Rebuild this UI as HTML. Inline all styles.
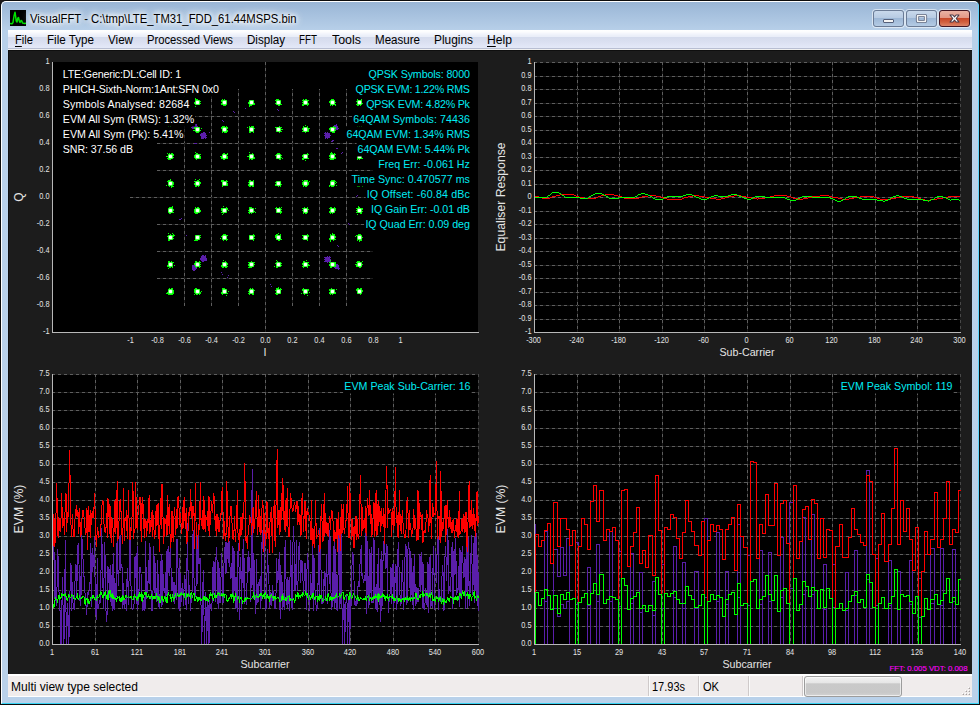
<!DOCTYPE html>
<html><head><meta charset="utf-8"><title>VisualFFT</title>
<style>
html,body{margin:0;padding:0;}
body{width:980px;height:705px;overflow:hidden;background:#1b1717;font-family:"Liberation Sans", sans-serif;position:relative;}
#win{position:absolute;left:0;top:0;width:978px;height:703px;border:1px solid #0c0c0c;border-radius:6px 6px 1px 1px;
 background:linear-gradient(#98b4d4 0px,#a3bedc 10px,#b8d0e9 30px,#b9d1ea 100%);overflow:hidden;}
#win:before{content:"";position:absolute;left:0;top:0;right:0;bottom:0;border:1px solid #fff;border-right-color:#5ed4fc;border-bottom-color:#38d4f4;border-radius:5px 5px 0 0;}
#icon{position:absolute;left:9px;top:9px;width:16px;height:16px;background:#000;}
#title{position:absolute;left:29px;top:9px;height:18px;line-height:18px;font-size:12.5px;color:#000;white-space:nowrap;
 text-shadow:0 0 6px #fff,0 0 6px #fff,0 0 10px #fff,0 0 10px #fff;transform-origin:0 50%;}
.cb{position:absolute;top:9px;height:15px;border:1px solid #6b7b95;border-radius:3px;box-shadow:0 0 0 1px rgba(255,255,255,.55);
 background:linear-gradient(#c9d9ec 0%,#b6cae2 48%,#9db7d6 50%,#b4cbe4 100%);}
#bclose{border-color:#431622;background:linear-gradient(#eab2a4 0%,#e39684 48%,#c8492b 50%,#d2613f 75%,#dc8468 100%);}
#menubar{position:absolute;left:7px;top:29px;width:964px;height:20px;
 background:linear-gradient(to bottom,#ffffff 0px,#fcfdfe 1.5px,#f9fafd 2.5px,#f4f6fc 3.5px,#f0f3fb 4.5px,#ecf0f9 5.5px,#e9edf8 6.99px,#d4dbed 7px,#d7ddee 9px,#dce1f2 13px,#e1e6f6 16px,#e4e9f7 17.99px,#b8bed2 18px,#b8bed2 18.99px,#f0f0f0 19px,#f0f0f0 20px);}
.mi{position:absolute;top:0;height:20px;line-height:21px;font-size:12px;color:#000;white-space:nowrap;transform-origin:0 50%;}
.mi u{text-decoration:underline;text-underline-offset:1.5px;}
#content{position:absolute;left:7px;top:49px;width:964px;height:624px;background:#1c1c1c;box-shadow:inset 1px 1px 0 #0f0f0f;}
#status{position:absolute;left:7px;top:673px;width:964px;height:23px;background:#f0ecec;border-top:2px solid #fff;border-bottom:1px solid #fff;box-sizing:border-box;}
.st{position:absolute;top:1px;height:19px;line-height:21px;font-size:12px;color:#000;white-space:nowrap;transform-origin:0 50%;}
.sep{position:absolute;top:0;width:1px;height:20px;background:#cfcaca;box-shadow:1px 0 0 #fbfbfb;}
#prog{position:absolute;left:796px;top:0px;width:96px;height:19px;border:1px solid #9c9c9c;border-radius:3px;
 background:linear-gradient(#f2f2f2 0%,#e6e6e6 30%,#c9c9c9 36%,#c8c8c8 80%,#d2d2d2 100%);box-shadow:inset 0 0 0 1px rgba(255,255,255,.6);}
svg text{font-family:"Liberation Sans", sans-serif;}
#plots{position:absolute;left:0;top:0;}
</style></head>
<body>
<div id="win">
 <div id="icon"><svg width="16" height="16" viewBox="0 0 16 16"><polyline points="0,13.5 2,13.8 3,12.5 4,6 5,2.2 5.6,6 6.2,11 7,12 7.8,8 8.5,7.5 9.3,11 10,12.5 11,10.5 11.8,11 12.5,13 14,13.4 16,13.2" fill="none" stroke="#00e000" stroke-width="1.5" stroke-linejoin="round"/></svg></div>
 <div id="title" style="transform:scaleX(0.9026);">VisualFFT - C:\tmp\LTE_TM31_FDD_61.44MSPS.bin</div>
 <div class="cb" id="bmin" style="left:872px;width:29px;"><svg width="29" height="15"><rect x="9.5" y="8.5" width="10" height="3" rx="0.5" fill="#f4f4f4" stroke="#55607a" stroke-width="1"/></svg></div>
 <div class="cb" id="bmax" style="left:905px;width:29px;"><svg width="29" height="15"><rect x="10.5" y="4.5" width="8" height="6" rx="0.5" fill="none" stroke="#55607a" stroke-width="3.2"/><rect x="10.5" y="4.5" width="8" height="6" rx="0.5" fill="none" stroke="#f4f4f4" stroke-width="1.6"/></svg></div>
 <div class="cb" id="bclose" style="left:938px;width:29px;"><svg width="29" height="15"><polygon points="10,4 12.9,4 14.5,5.9 16.1,4 19,4 16.2,7.5 19,11 16.1,11 14.5,9.1 12.9,11 10,11 12.8,7.5" fill="#fbfbfb" stroke="#4b3a48" stroke-width="1.1" stroke-linejoin="round"/></svg></div>
 <div id="menubar"><span class="mi" id="m0" style="transform:scaleX(0.9298);left:7px"><u>F</u>ile</span><span class="mi" id="m1" style="transform:scaleX(0.9697);left:39px">File Type</span><span class="mi" id="m2" style="transform:scaleX(0.9691);left:100px">View</span><span class="mi" id="m3" style="transform:scaleX(0.9365);left:139px">Processed Views</span><span class="mi" id="m4" style="transform:scaleX(0.9655);left:239px">Display</span><span class="mi" id="m5" style="transform:scaleX(0.8182);left:291px">FFT</span><span class="mi" id="m6" style="transform:scaleX(1.0351);left:324px">Tools</span><span class="mi" id="m7" style="transform:scaleX(0.9639);left:367px">Measure</span><span class="mi" id="m8" style="transform:scaleX(0.9909);left:426px">Plugins</span><span class="mi" id="m9" style="transform:scaleX(1.0127);left:479px"><u>H</u>elp</span></div>
 <div id="content"></div>
 <div id="status">
  <span class="st" id="s0" style="transform:scaleX(1.0021);left:3px">Multi view type selected</span>
  <div class="sep" style="left:640px"></div>
  <span class="st" id="s1" style="transform:scaleX(0.9159);left:644px">17.93s</span>
  <div class="sep" style="left:690px"></div>
  <span class="st" id="s2" style="transform:scaleX(0.9225);left:695px">OK</span>
  <div class="sep" style="left:740px"></div>
  <div class="sep" style="left:794px"></div>
  <div id="prog"></div>
  <svg style="position:absolute;left:952px;top:8px" width="12" height="12" shape-rendering="crispEdges"><rect x="8" y="3" width="1" height="1" fill="#ffffff"/><rect x="9" y="4" width="1" height="1" fill="#a5a0a0"/><rect x="8" y="4" width="1" height="1" fill="#d8d4d4"/><rect x="9" y="3" width="1" height="1" fill="#d8d4d4"/><rect x="5" y="6" width="1" height="1" fill="#ffffff"/><rect x="6" y="7" width="1" height="1" fill="#a5a0a0"/><rect x="5" y="7" width="1" height="1" fill="#d8d4d4"/><rect x="6" y="6" width="1" height="1" fill="#d8d4d4"/><rect x="8" y="6" width="1" height="1" fill="#ffffff"/><rect x="9" y="7" width="1" height="1" fill="#a5a0a0"/><rect x="8" y="7" width="1" height="1" fill="#d8d4d4"/><rect x="9" y="6" width="1" height="1" fill="#d8d4d4"/><rect x="2" y="9" width="1" height="1" fill="#ffffff"/><rect x="3" y="10" width="1" height="1" fill="#a5a0a0"/><rect x="2" y="10" width="1" height="1" fill="#d8d4d4"/><rect x="3" y="9" width="1" height="1" fill="#d8d4d4"/><rect x="5" y="9" width="1" height="1" fill="#ffffff"/><rect x="6" y="10" width="1" height="1" fill="#a5a0a0"/><rect x="5" y="10" width="1" height="1" fill="#d8d4d4"/><rect x="6" y="9" width="1" height="1" fill="#d8d4d4"/><rect x="8" y="9" width="1" height="1" fill="#ffffff"/><rect x="9" y="10" width="1" height="1" fill="#a5a0a0"/><rect x="8" y="10" width="1" height="1" fill="#d8d4d4"/><rect x="9" y="9" width="1" height="1" fill="#d8d4d4"/></svg>
 </div>
</div>
<svg id="plots" width="980" height="705" viewBox="0 0 980 705">
<rect x="52" y="62" width="426" height="271" fill="#000" />
<g shape-rendering="crispEdges">
<rect x="157" y="278" width="216" height="1" fill="#1c1c1c"/>
<line x1="157" y1="278.5" x2="373" y2="278.5" stroke="#5e5e5e" stroke-dasharray="3 3" />
<rect x="184" y="89" width="1" height="217" fill="#1c1c1c"/>
<line x1="184.5" y1="89" x2="184.5" y2="306" stroke="#5e5e5e" stroke-dasharray="3 3" stroke-dashoffset="2" />
<rect x="157" y="251" width="216" height="1" fill="#1c1c1c"/>
<line x1="157" y1="251.5" x2="373" y2="251.5" stroke="#5e5e5e" stroke-dasharray="3 3" />
<rect x="211" y="89" width="1" height="217" fill="#1c1c1c"/>
<line x1="211.5" y1="89" x2="211.5" y2="306" stroke="#5e5e5e" stroke-dasharray="3 3" stroke-dashoffset="2" />
<rect x="157" y="224" width="216" height="1" fill="#1c1c1c"/>
<line x1="157" y1="224.5" x2="373" y2="224.5" stroke="#5e5e5e" stroke-dasharray="3 3" />
<rect x="238" y="89" width="1" height="217" fill="#1c1c1c"/>
<line x1="238.5" y1="89" x2="238.5" y2="306" stroke="#5e5e5e" stroke-dasharray="3 3" stroke-dashoffset="2" />
<rect x="157" y="170" width="216" height="1" fill="#1c1c1c"/>
<line x1="157" y1="170.5" x2="373" y2="170.5" stroke="#5e5e5e" stroke-dasharray="3 3" />
<rect x="292" y="89" width="1" height="217" fill="#1c1c1c"/>
<line x1="292.5" y1="89" x2="292.5" y2="306" stroke="#5e5e5e" stroke-dasharray="3 3" stroke-dashoffset="2" />
<rect x="157" y="143" width="216" height="1" fill="#1c1c1c"/>
<line x1="157" y1="143.5" x2="373" y2="143.5" stroke="#5e5e5e" stroke-dasharray="3 3" />
<rect x="319" y="89" width="1" height="217" fill="#1c1c1c"/>
<line x1="319.5" y1="89" x2="319.5" y2="306" stroke="#5e5e5e" stroke-dasharray="3 3" stroke-dashoffset="2" />
<rect x="157" y="116" width="216" height="1" fill="#1c1c1c"/>
<line x1="157" y1="116.5" x2="373" y2="116.5" stroke="#5e5e5e" stroke-dasharray="3 3" />
<rect x="346" y="89" width="1" height="217" fill="#1c1c1c"/>
<line x1="346.5" y1="89" x2="346.5" y2="306" stroke="#5e5e5e" stroke-dasharray="3 3" stroke-dashoffset="2" />
<rect x="130" y="197" width="270" height="1" fill="#1c1c1c"/>
<line x1="130" y1="197.5" x2="400" y2="197.5" stroke="#5e5e5e" stroke-dasharray="3 3" />
<rect x="265" y="62" width="1" height="270" fill="#1c1c1c"/>
<line x1="265.5" y1="62" x2="265.5" y2="332" stroke="#5e5e5e" stroke-dasharray="3 3" stroke-dashoffset="0" />
</g>
<g fill="#5a1eaa" shape-rendering="crispEdges">
<rect x="200" y="135" width="1" height="1"/><rect x="203" y="137" width="1" height="1"/><rect x="204" y="132" width="1" height="1"/><rect x="205" y="137" width="1" height="1"/><rect x="204" y="135" width="1" height="1"/><rect x="201" y="134" width="1" height="1"/><rect x="201" y="133" width="1" height="1"/><rect x="202" y="133" width="1" height="1"/><rect x="202" y="134" width="1" height="1"/><rect x="201" y="136" width="1" height="1"/><rect x="202" y="136" width="1" height="1"/><rect x="206" y="135" width="1" height="1"/><rect x="203" y="134" width="1" height="1"/><rect x="203" y="133" width="1" height="1"/><rect x="203" y="136" width="1" height="1"/><rect x="205" y="133" width="1" height="1"/><rect x="205" y="134" width="1" height="1"/><rect x="204" y="137" width="1" height="1"/><rect x="205" y="136" width="1" height="1"/><rect x="201" y="135" width="1" height="1"/><rect x="202" y="135" width="1" height="1"/><rect x="201" y="138" width="1" height="1"/><rect x="202" y="138" width="1" height="1"/><rect x="206" y="137" width="1" height="1"/><rect x="201" y="137" width="1" height="1"/><rect x="200" y="134" width="1" height="1"/><rect x="203" y="132" width="1" height="1"/><rect x="203" y="135" width="1" height="1"/><rect x="204" y="136" width="1" height="1"/><rect x="203" y="138" width="1" height="1"/><rect x="205" y="135" width="1" height="1"/><rect x="204" y="133" width="1" height="1"/><rect x="204" y="134" width="1" height="1"/><rect x="205" y="138" width="1" height="1"/><rect x="202" y="137" width="1" height="1"/>
<rect x="194" y="128" width="1" height="1"/><rect x="195" y="126" width="1" height="1"/><rect x="193" y="125" width="1" height="1"/><rect x="193" y="124" width="1" height="1"/><rect x="192" y="125" width="1" height="1"/><rect x="192" y="127" width="1" height="1"/><rect x="193" y="127" width="1" height="1"/><rect x="197" y="126" width="1" height="1"/><rect x="194" y="125" width="1" height="1"/><rect x="194" y="124" width="1" height="1"/><rect x="194" y="127" width="1" height="1"/><rect x="196" y="124" width="1" height="1"/><rect x="196" y="125" width="1" height="1"/><rect x="195" y="128" width="1" height="1"/><rect x="196" y="127" width="1" height="1"/><rect x="192" y="126" width="1" height="1"/><rect x="193" y="126" width="1" height="1"/><rect x="194" y="123" width="1" height="1"/><rect x="194" y="126" width="1" height="1"/><rect x="195" y="127" width="1" height="1"/><rect x="196" y="126" width="1" height="1"/><rect x="195" y="124" width="1" height="1"/><rect x="195" y="125" width="1" height="1"/><rect x="193" y="128" width="1" height="1"/>
<rect x="192" y="128" width="1" height="1"/><rect x="192" y="127" width="1" height="1"/><rect x="191" y="127" width="1" height="1"/><rect x="193" y="127" width="1" height="1"/><rect x="192" y="126" width="1" height="1"/>
<rect x="324" y="135" width="1" height="1"/><rect x="327" y="137" width="1" height="1"/><rect x="329" y="137" width="1" height="1"/><rect x="328" y="135" width="1" height="1"/><rect x="325" y="134" width="1" height="1"/><rect x="325" y="133" width="1" height="1"/><rect x="326" y="133" width="1" height="1"/><rect x="326" y="134" width="1" height="1"/><rect x="325" y="136" width="1" height="1"/><rect x="326" y="136" width="1" height="1"/><rect x="330" y="135" width="1" height="1"/><rect x="327" y="134" width="1" height="1"/><rect x="327" y="133" width="1" height="1"/><rect x="327" y="136" width="1" height="1"/><rect x="329" y="133" width="1" height="1"/><rect x="329" y="134" width="1" height="1"/><rect x="328" y="137" width="1" height="1"/><rect x="329" y="136" width="1" height="1"/><rect x="325" y="132" width="1" height="1"/><rect x="325" y="135" width="1" height="1"/><rect x="326" y="135" width="1" height="1"/><rect x="325" y="138" width="1" height="1"/><rect x="325" y="137" width="1" height="1"/><rect x="324" y="133" width="1" height="1"/><rect x="327" y="132" width="1" height="1"/><rect x="327" y="135" width="1" height="1"/><rect x="328" y="136" width="1" height="1"/><rect x="327" y="138" width="1" height="1"/><rect x="329" y="135" width="1" height="1"/><rect x="328" y="133" width="1" height="1"/><rect x="328" y="134" width="1" height="1"/><rect x="326" y="137" width="1" height="1"/>
<rect x="338" y="128" width="1" height="1"/><rect x="332" y="127" width="1" height="1"/><rect x="335" y="129" width="1" height="1"/><rect x="336" y="124" width="1" height="1"/><rect x="337" y="129" width="1" height="1"/><rect x="336" y="127" width="1" height="1"/><rect x="333" y="126" width="1" height="1"/><rect x="334" y="125" width="1" height="1"/><rect x="334" y="126" width="1" height="1"/><rect x="333" y="128" width="1" height="1"/><rect x="334" y="128" width="1" height="1"/><rect x="335" y="126" width="1" height="1"/><rect x="335" y="125" width="1" height="1"/><rect x="335" y="128" width="1" height="1"/><rect x="337" y="126" width="1" height="1"/><rect x="336" y="129" width="1" height="1"/><rect x="337" y="128" width="1" height="1"/><rect x="333" y="127" width="1" height="1"/><rect x="334" y="127" width="1" height="1"/><rect x="333" y="129" width="1" height="1"/><rect x="335" y="127" width="1" height="1"/><rect x="336" y="128" width="1" height="1"/><rect x="335" y="130" width="1" height="1"/><rect x="337" y="127" width="1" height="1"/><rect x="336" y="125" width="1" height="1"/><rect x="336" y="126" width="1" height="1"/><rect x="334" y="129" width="1" height="1"/>
<rect x="331" y="141" width="1" height="1"/><rect x="332" y="140" width="1" height="1"/><rect x="332" y="141" width="1" height="1"/>
<rect x="333" y="140" width="1" height="1"/>
<rect x="336" y="148" width="1" height="1"/><rect x="337" y="148" width="1" height="1"/>
<rect x="206" y="259" width="1" height="1"/><rect x="200" y="258" width="1" height="1"/><rect x="203" y="260" width="1" height="1"/><rect x="205" y="260" width="1" height="1"/><rect x="204" y="258" width="1" height="1"/><rect x="201" y="257" width="1" height="1"/><rect x="201" y="256" width="1" height="1"/><rect x="202" y="256" width="1" height="1"/><rect x="202" y="257" width="1" height="1"/><rect x="201" y="259" width="1" height="1"/><rect x="202" y="259" width="1" height="1"/><rect x="206" y="258" width="1" height="1"/><rect x="203" y="257" width="1" height="1"/><rect x="203" y="256" width="1" height="1"/><rect x="203" y="259" width="1" height="1"/><rect x="205" y="256" width="1" height="1"/><rect x="205" y="257" width="1" height="1"/><rect x="204" y="260" width="1" height="1"/><rect x="205" y="259" width="1" height="1"/><rect x="202" y="255" width="1" height="1"/><rect x="201" y="258" width="1" height="1"/><rect x="202" y="258" width="1" height="1"/><rect x="202" y="261" width="1" height="1"/><rect x="206" y="260" width="1" height="1"/><rect x="201" y="260" width="1" height="1"/><rect x="203" y="255" width="1" height="1"/><rect x="200" y="259" width="1" height="1"/><rect x="203" y="258" width="1" height="1"/><rect x="205" y="255" width="1" height="1"/><rect x="204" y="259" width="1" height="1"/><rect x="203" y="261" width="1" height="1"/><rect x="205" y="258" width="1" height="1"/><rect x="204" y="256" width="1" height="1"/><rect x="204" y="257" width="1" height="1"/><rect x="202" y="260" width="1" height="1"/>
<rect x="194" y="269" width="1" height="1"/><rect x="195" y="267" width="1" height="1"/><rect x="193" y="265" width="1" height="1"/><rect x="192" y="266" width="1" height="1"/><rect x="192" y="265" width="1" height="1"/><rect x="193" y="266" width="1" height="1"/><rect x="192" y="268" width="1" height="1"/><rect x="193" y="268" width="1" height="1"/><rect x="194" y="266" width="1" height="1"/><rect x="194" y="265" width="1" height="1"/><rect x="194" y="268" width="1" height="1"/><rect x="196" y="266" width="1" height="1"/><rect x="195" y="269" width="1" height="1"/><rect x="196" y="268" width="1" height="1"/><rect x="192" y="267" width="1" height="1"/><rect x="193" y="267" width="1" height="1"/><rect x="194" y="267" width="1" height="1"/><rect x="195" y="268" width="1" height="1"/><rect x="194" y="270" width="1" height="1"/><rect x="196" y="267" width="1" height="1"/><rect x="195" y="265" width="1" height="1"/><rect x="195" y="266" width="1" height="1"/><rect x="193" y="269" width="1" height="1"/>
<rect x="193" y="270" width="1" height="1"/><rect x="193" y="269" width="1" height="1"/><rect x="192" y="269" width="1" height="1"/><rect x="194" y="269" width="1" height="1"/><rect x="193" y="268" width="1" height="1"/>
<rect x="330" y="257" width="1" height="1"/><rect x="330" y="260" width="1" height="1"/><rect x="324" y="259" width="1" height="1"/><rect x="327" y="261" width="1" height="1"/><rect x="329" y="261" width="1" height="1"/><rect x="328" y="259" width="1" height="1"/><rect x="325" y="258" width="1" height="1"/><rect x="325" y="257" width="1" height="1"/><rect x="326" y="257" width="1" height="1"/><rect x="326" y="258" width="1" height="1"/><rect x="325" y="260" width="1" height="1"/><rect x="326" y="260" width="1" height="1"/><rect x="330" y="259" width="1" height="1"/><rect x="324" y="261" width="1" height="1"/><rect x="327" y="258" width="1" height="1"/><rect x="327" y="257" width="1" height="1"/><rect x="327" y="260" width="1" height="1"/><rect x="329" y="257" width="1" height="1"/><rect x="329" y="258" width="1" height="1"/><rect x="328" y="261" width="1" height="1"/><rect x="329" y="260" width="1" height="1"/><rect x="325" y="259" width="1" height="1"/><rect x="326" y="259" width="1" height="1"/><rect x="330" y="261" width="1" height="1"/><rect x="325" y="261" width="1" height="1"/><rect x="324" y="257" width="1" height="1"/><rect x="327" y="256" width="1" height="1"/><rect x="327" y="259" width="1" height="1"/><rect x="329" y="256" width="1" height="1"/><rect x="328" y="260" width="1" height="1"/><rect x="327" y="262" width="1" height="1"/><rect x="329" y="259" width="1" height="1"/><rect x="328" y="257" width="1" height="1"/><rect x="328" y="258" width="1" height="1"/><rect x="326" y="261" width="1" height="1"/>
<rect x="336" y="268" width="1" height="1"/><rect x="337" y="266" width="1" height="1"/><rect x="335" y="265" width="1" height="1"/><rect x="335" y="264" width="1" height="1"/><rect x="334" y="265" width="1" height="1"/><rect x="334" y="267" width="1" height="1"/><rect x="335" y="267" width="1" height="1"/><rect x="336" y="265" width="1" height="1"/><rect x="336" y="264" width="1" height="1"/><rect x="336" y="267" width="1" height="1"/><rect x="338" y="265" width="1" height="1"/><rect x="337" y="268" width="1" height="1"/><rect x="338" y="267" width="1" height="1"/><rect x="334" y="266" width="1" height="1"/><rect x="335" y="266" width="1" height="1"/><rect x="336" y="266" width="1" height="1"/><rect x="337" y="267" width="1" height="1"/><rect x="338" y="266" width="1" height="1"/><rect x="337" y="264" width="1" height="1"/><rect x="337" y="265" width="1" height="1"/><rect x="335" y="268" width="1" height="1"/>
<rect x="338" y="269" width="1" height="1"/><rect x="338" y="268" width="1" height="1"/><rect x="337" y="268" width="1" height="1"/><rect x="339" y="268" width="1" height="1"/><rect x="338" y="267" width="1" height="1"/>
<rect x="233" y="111" width="1" height="1"/>
<rect x="234" y="112" width="1" height="1"/>
<rect x="222" y="120" width="1" height="1"/>
<rect x="223" y="121" width="1" height="1"/>
<rect x="277" y="109" width="1" height="1"/>
<rect x="278" y="110" width="1" height="1"/>
<rect x="245" y="108" width="1" height="1"/>
<rect x="179" y="219" width="1" height="1"/>
<rect x="180" y="219" width="1" height="1"/>
<rect x="181" y="218" width="1" height="1"/>
<rect x="186" y="235" width="1" height="1"/>
<rect x="221" y="272" width="1" height="1"/>
<rect x="222" y="274" width="1" height="1"/>
<rect x="228" y="275" width="1" height="1"/>
<rect x="227" y="277" width="1" height="1"/>
<rect x="270" y="284" width="1" height="1"/>
<rect x="271" y="286" width="1" height="1"/>
<rect x="337" y="245" width="1" height="1"/>
<rect x="338" y="246" width="1" height="1"/>
<rect x="348" y="223" width="1" height="1"/>
<rect x="349" y="224" width="1" height="1"/>
<rect x="195" y="143" width="1" height="1"/>
<rect x="196" y="143" width="1" height="1"/>
<rect x="194" y="143" width="1" height="1"/>
<rect x="209" y="132" width="1" height="1"/>
<rect x="341" y="153" width="1" height="1"/>
<rect x="342" y="152" width="1" height="1"/>
<rect x="356" y="196" width="1" height="1"/>
<rect x="357" y="195" width="1" height="1"/>
</g>
<g shape-rendering="crispEdges"><g fill="#00ff00"><rect x="166" y="293" width="1" height="1"/><rect x="167" y="292" width="1" height="1"/><rect x="167" y="293" width="1" height="1"/><rect x="168" y="289" width="1" height="1"/><rect x="168" y="290" width="1" height="1"/><rect x="168" y="291" width="1" height="1"/><rect x="168" y="292" width="1" height="1"/><rect x="168" y="293" width="1" height="1"/><rect x="168" y="294" width="1" height="1"/><rect x="169" y="288" width="1" height="1"/><rect x="169" y="289" width="1" height="1"/><rect x="169" y="290" width="1" height="1"/><rect x="169" y="291" width="1" height="1"/><rect x="169" y="292" width="1" height="1"/><rect x="169" y="293" width="1" height="1"/><rect x="169" y="294" width="1" height="1"/><rect x="170" y="289" width="1" height="1"/><rect x="170" y="290" width="1" height="1"/><rect x="170" y="291" width="1" height="1"/><rect x="170" y="292" width="1" height="1"/><rect x="170" y="293" width="1" height="1"/><rect x="170" y="294" width="1" height="1"/><rect x="171" y="288" width="1" height="1"/><rect x="171" y="289" width="1" height="1"/><rect x="171" y="290" width="1" height="1"/><rect x="171" y="291" width="1" height="1"/><rect x="171" y="292" width="1" height="1"/><rect x="171" y="293" width="1" height="1"/><rect x="171" y="294" width="1" height="1"/><rect x="172" y="288" width="1" height="1"/><rect x="172" y="289" width="1" height="1"/><rect x="172" y="290" width="1" height="1"/><rect x="172" y="291" width="1" height="1"/><rect x="172" y="292" width="1" height="1"/><rect x="172" y="293" width="1" height="1"/><rect x="172" y="294" width="1" height="1"/><rect x="173" y="290" width="1" height="1"/><rect x="173" y="291" width="1" height="1"/><rect x="173" y="292" width="1" height="1"/><rect x="173" y="293" width="1" height="1"/></g><rect x="169" y="290" width="3" height="3" fill="#d0ffd0"/><rect x="169" y="291" width="3" height="1" fill="#fff"/><rect x="170" y="290" width="1" height="3" fill="#fff"/><rect x="168" y="290" width="5" height="3" fill="#80ff80" opacity="0.5"/><rect x="169" y="289" width="3" height="5" fill="#80ff80" opacity="0.5"/><rect x="169" y="290" width="3" height="3" fill="#e4ffe4"/><rect x="169" y="291" width="3" height="1" fill="#fff"/><rect x="170" y="290" width="1" height="3" fill="#fff"/><g fill="#00ff00"><rect x="167" y="265" width="1" height="1"/><rect x="167" y="266" width="1" height="1"/><rect x="168" y="261" width="1" height="1"/><rect x="168" y="262" width="1" height="1"/><rect x="168" y="263" width="1" height="1"/><rect x="168" y="264" width="1" height="1"/><rect x="168" y="265" width="1" height="1"/><rect x="168" y="266" width="1" height="1"/><rect x="168" y="268" width="1" height="1"/><rect x="169" y="261" width="1" height="1"/><rect x="169" y="262" width="1" height="1"/><rect x="169" y="263" width="1" height="1"/><rect x="169" y="264" width="1" height="1"/><rect x="169" y="265" width="1" height="1"/><rect x="169" y="266" width="1" height="1"/><rect x="169" y="267" width="1" height="1"/><rect x="170" y="262" width="1" height="1"/><rect x="170" y="263" width="1" height="1"/><rect x="170" y="264" width="1" height="1"/><rect x="170" y="265" width="1" height="1"/><rect x="170" y="266" width="1" height="1"/><rect x="170" y="267" width="1" height="1"/><rect x="171" y="261" width="1" height="1"/><rect x="171" y="262" width="1" height="1"/><rect x="171" y="263" width="1" height="1"/><rect x="171" y="264" width="1" height="1"/><rect x="171" y="265" width="1" height="1"/><rect x="171" y="266" width="1" height="1"/><rect x="172" y="262" width="1" height="1"/><rect x="172" y="263" width="1" height="1"/><rect x="172" y="264" width="1" height="1"/><rect x="172" y="265" width="1" height="1"/><rect x="172" y="266" width="1" height="1"/><rect x="172" y="267" width="1" height="1"/><rect x="173" y="262" width="1" height="1"/><rect x="174" y="265" width="1" height="1"/></g><rect x="169" y="263" width="3" height="3" fill="#d0ffd0"/><rect x="169" y="264" width="3" height="1" fill="#fff"/><rect x="170" y="263" width="1" height="3" fill="#fff"/><rect x="168" y="263" width="5" height="3" fill="#80ff80" opacity="0.5"/><rect x="169" y="262" width="3" height="5" fill="#80ff80" opacity="0.5"/><rect x="169" y="263" width="3" height="3" fill="#e4ffe4"/><rect x="169" y="264" width="3" height="1" fill="#fff"/><rect x="170" y="263" width="1" height="3" fill="#fff"/><g fill="#00ff00"><rect x="167" y="236" width="1" height="1"/><rect x="168" y="233" width="1" height="1"/><rect x="168" y="235" width="1" height="1"/><rect x="168" y="236" width="1" height="1"/><rect x="168" y="237" width="1" height="1"/><rect x="168" y="238" width="1" height="1"/><rect x="168" y="239" width="1" height="1"/><rect x="168" y="240" width="1" height="1"/><rect x="169" y="235" width="1" height="1"/><rect x="169" y="236" width="1" height="1"/><rect x="169" y="237" width="1" height="1"/><rect x="169" y="238" width="1" height="1"/><rect x="169" y="239" width="1" height="1"/><rect x="169" y="240" width="1" height="1"/><rect x="170" y="234" width="1" height="1"/><rect x="170" y="235" width="1" height="1"/><rect x="170" y="236" width="1" height="1"/><rect x="170" y="237" width="1" height="1"/><rect x="170" y="238" width="1" height="1"/><rect x="170" y="239" width="1" height="1"/><rect x="171" y="235" width="1" height="1"/><rect x="171" y="236" width="1" height="1"/><rect x="171" y="237" width="1" height="1"/><rect x="171" y="238" width="1" height="1"/><rect x="171" y="239" width="1" height="1"/><rect x="172" y="233" width="1" height="1"/><rect x="172" y="235" width="1" height="1"/><rect x="172" y="236" width="1" height="1"/><rect x="172" y="237" width="1" height="1"/><rect x="172" y="238" width="1" height="1"/><rect x="172" y="239" width="1" height="1"/><rect x="173" y="234" width="1" height="1"/><rect x="173" y="235" width="1" height="1"/><rect x="173" y="236" width="1" height="1"/><rect x="173" y="238" width="1" height="1"/><rect x="174" y="235" width="1" height="1"/></g><rect x="169" y="236" width="3" height="3" fill="#d0ffd0"/><rect x="169" y="237" width="3" height="1" fill="#fff"/><rect x="170" y="236" width="1" height="3" fill="#fff"/><rect x="168" y="236" width="5" height="3" fill="#80ff80" opacity="0.5"/><rect x="169" y="235" width="3" height="5" fill="#80ff80" opacity="0.5"/><rect x="169" y="236" width="3" height="3" fill="#e4ffe4"/><rect x="169" y="237" width="3" height="1" fill="#fff"/><rect x="170" y="236" width="1" height="3" fill="#fff"/><g fill="#00ff00"><rect x="168" y="208" width="1" height="1"/><rect x="168" y="209" width="1" height="1"/><rect x="168" y="210" width="1" height="1"/><rect x="168" y="211" width="1" height="1"/><rect x="168" y="212" width="1" height="1"/><rect x="169" y="207" width="1" height="1"/><rect x="169" y="208" width="1" height="1"/><rect x="169" y="209" width="1" height="1"/><rect x="169" y="210" width="1" height="1"/><rect x="169" y="211" width="1" height="1"/><rect x="169" y="212" width="1" height="1"/><rect x="169" y="213" width="1" height="1"/><rect x="170" y="207" width="1" height="1"/><rect x="170" y="208" width="1" height="1"/><rect x="170" y="209" width="1" height="1"/><rect x="170" y="210" width="1" height="1"/><rect x="170" y="211" width="1" height="1"/><rect x="170" y="212" width="1" height="1"/><rect x="170" y="213" width="1" height="1"/><rect x="171" y="207" width="1" height="1"/><rect x="171" y="208" width="1" height="1"/><rect x="171" y="209" width="1" height="1"/><rect x="171" y="210" width="1" height="1"/><rect x="171" y="211" width="1" height="1"/><rect x="171" y="212" width="1" height="1"/><rect x="172" y="206" width="1" height="1"/><rect x="172" y="207" width="1" height="1"/><rect x="172" y="208" width="1" height="1"/><rect x="172" y="209" width="1" height="1"/><rect x="172" y="210" width="1" height="1"/><rect x="172" y="211" width="1" height="1"/><rect x="172" y="212" width="1" height="1"/><rect x="173" y="209" width="1" height="1"/><rect x="173" y="210" width="1" height="1"/><rect x="173" y="212" width="1" height="1"/></g><rect x="169" y="209" width="3" height="3" fill="#d0ffd0"/><rect x="169" y="210" width="3" height="1" fill="#fff"/><rect x="170" y="209" width="1" height="3" fill="#fff"/><rect x="168" y="209" width="5" height="3" fill="#80ff80" opacity="0.5"/><rect x="169" y="208" width="3" height="5" fill="#80ff80" opacity="0.5"/><rect x="169" y="209" width="3" height="3" fill="#e4ffe4"/><rect x="169" y="210" width="3" height="1" fill="#fff"/><rect x="170" y="209" width="1" height="3" fill="#fff"/><g fill="#00ff00"><rect x="166" y="185" width="1" height="1"/><rect x="167" y="181" width="1" height="1"/><rect x="168" y="180" width="1" height="1"/><rect x="168" y="181" width="1" height="1"/><rect x="168" y="182" width="1" height="1"/><rect x="168" y="183" width="1" height="1"/><rect x="168" y="184" width="1" height="1"/><rect x="168" y="185" width="1" height="1"/><rect x="169" y="180" width="1" height="1"/><rect x="169" y="181" width="1" height="1"/><rect x="169" y="182" width="1" height="1"/><rect x="169" y="183" width="1" height="1"/><rect x="169" y="184" width="1" height="1"/><rect x="169" y="185" width="1" height="1"/><rect x="169" y="186" width="1" height="1"/><rect x="170" y="179" width="1" height="1"/><rect x="170" y="180" width="1" height="1"/><rect x="170" y="181" width="1" height="1"/><rect x="170" y="182" width="1" height="1"/><rect x="170" y="183" width="1" height="1"/><rect x="170" y="184" width="1" height="1"/><rect x="170" y="185" width="1" height="1"/><rect x="171" y="181" width="1" height="1"/><rect x="171" y="182" width="1" height="1"/><rect x="171" y="183" width="1" height="1"/><rect x="171" y="184" width="1" height="1"/><rect x="171" y="185" width="1" height="1"/><rect x="171" y="186" width="1" height="1"/><rect x="171" y="187" width="1" height="1"/><rect x="172" y="181" width="1" height="1"/><rect x="172" y="182" width="1" height="1"/><rect x="172" y="183" width="1" height="1"/><rect x="172" y="184" width="1" height="1"/><rect x="172" y="185" width="1" height="1"/><rect x="172" y="186" width="1" height="1"/><rect x="173" y="182" width="1" height="1"/><rect x="173" y="183" width="1" height="1"/><rect x="173" y="184" width="1" height="1"/><rect x="173" y="186" width="1" height="1"/></g><rect x="169" y="182" width="3" height="3" fill="#d0ffd0"/><rect x="169" y="183" width="3" height="1" fill="#fff"/><rect x="170" y="182" width="1" height="3" fill="#fff"/><rect x="168" y="182" width="5" height="3" fill="#80ff80" opacity="0.5"/><rect x="169" y="181" width="3" height="5" fill="#80ff80" opacity="0.5"/><rect x="169" y="182" width="3" height="3" fill="#e4ffe4"/><rect x="169" y="183" width="3" height="1" fill="#fff"/><rect x="170" y="182" width="1" height="3" fill="#fff"/><g fill="#00ff00"><rect x="166" y="156" width="1" height="1"/><rect x="167" y="153" width="1" height="1"/><rect x="167" y="156" width="1" height="1"/><rect x="167" y="158" width="1" height="1"/><rect x="168" y="154" width="1" height="1"/><rect x="168" y="155" width="1" height="1"/><rect x="168" y="156" width="1" height="1"/><rect x="168" y="157" width="1" height="1"/><rect x="168" y="158" width="1" height="1"/><rect x="168" y="159" width="1" height="1"/><rect x="169" y="153" width="1" height="1"/><rect x="169" y="154" width="1" height="1"/><rect x="169" y="155" width="1" height="1"/><rect x="169" y="156" width="1" height="1"/><rect x="169" y="157" width="1" height="1"/><rect x="169" y="158" width="1" height="1"/><rect x="169" y="159" width="1" height="1"/><rect x="170" y="154" width="1" height="1"/><rect x="170" y="155" width="1" height="1"/><rect x="170" y="156" width="1" height="1"/><rect x="170" y="157" width="1" height="1"/><rect x="170" y="158" width="1" height="1"/><rect x="170" y="159" width="1" height="1"/><rect x="171" y="153" width="1" height="1"/><rect x="171" y="154" width="1" height="1"/><rect x="171" y="155" width="1" height="1"/><rect x="171" y="156" width="1" height="1"/><rect x="171" y="157" width="1" height="1"/><rect x="171" y="158" width="1" height="1"/><rect x="172" y="153" width="1" height="1"/><rect x="172" y="154" width="1" height="1"/><rect x="172" y="155" width="1" height="1"/><rect x="172" y="156" width="1" height="1"/><rect x="172" y="157" width="1" height="1"/><rect x="172" y="158" width="1" height="1"/><rect x="173" y="154" width="1" height="1"/><rect x="173" y="155" width="1" height="1"/><rect x="173" y="157" width="1" height="1"/></g><rect x="169" y="155" width="3" height="3" fill="#d0ffd0"/><rect x="169" y="156" width="3" height="1" fill="#fff"/><rect x="170" y="155" width="1" height="3" fill="#fff"/><rect x="168" y="155" width="5" height="3" fill="#80ff80" opacity="0.5"/><rect x="169" y="154" width="3" height="5" fill="#80ff80" opacity="0.5"/><rect x="169" y="155" width="3" height="3" fill="#e4ffe4"/><rect x="169" y="156" width="3" height="1" fill="#fff"/><rect x="170" y="155" width="1" height="3" fill="#fff"/><g fill="#00ff00"><rect x="168" y="126" width="1" height="1"/><rect x="168" y="127" width="1" height="1"/><rect x="168" y="128" width="1" height="1"/><rect x="168" y="129" width="1" height="1"/><rect x="168" y="130" width="1" height="1"/><rect x="168" y="131" width="1" height="1"/><rect x="168" y="132" width="1" height="1"/><rect x="169" y="127" width="1" height="1"/><rect x="169" y="128" width="1" height="1"/><rect x="169" y="129" width="1" height="1"/><rect x="169" y="130" width="1" height="1"/><rect x="169" y="131" width="1" height="1"/><rect x="170" y="126" width="1" height="1"/><rect x="170" y="127" width="1" height="1"/><rect x="170" y="128" width="1" height="1"/><rect x="170" y="129" width="1" height="1"/><rect x="170" y="130" width="1" height="1"/><rect x="170" y="131" width="1" height="1"/><rect x="171" y="127" width="1" height="1"/><rect x="171" y="128" width="1" height="1"/><rect x="171" y="129" width="1" height="1"/><rect x="171" y="130" width="1" height="1"/><rect x="171" y="131" width="1" height="1"/><rect x="172" y="127" width="1" height="1"/><rect x="172" y="128" width="1" height="1"/><rect x="172" y="129" width="1" height="1"/><rect x="172" y="130" width="1" height="1"/><rect x="172" y="131" width="1" height="1"/><rect x="172" y="132" width="1" height="1"/><rect x="172" y="133" width="1" height="1"/><rect x="173" y="129" width="1" height="1"/><rect x="173" y="131" width="1" height="1"/></g><rect x="169" y="128" width="3" height="3" fill="#d0ffd0"/><rect x="169" y="129" width="3" height="1" fill="#fff"/><rect x="170" y="128" width="1" height="3" fill="#fff"/><rect x="168" y="128" width="5" height="3" fill="#80ff80" opacity="0.5"/><rect x="169" y="127" width="3" height="5" fill="#80ff80" opacity="0.5"/><rect x="169" y="128" width="3" height="3" fill="#e4ffe4"/><rect x="169" y="129" width="3" height="1" fill="#fff"/><rect x="170" y="128" width="1" height="3" fill="#fff"/><g fill="#00ff00"><rect x="167" y="100" width="1" height="1"/><rect x="167" y="101" width="1" height="1"/><rect x="167" y="104" width="1" height="1"/><rect x="168" y="100" width="1" height="1"/><rect x="168" y="101" width="1" height="1"/><rect x="168" y="102" width="1" height="1"/><rect x="168" y="103" width="1" height="1"/><rect x="168" y="104" width="1" height="1"/><rect x="168" y="105" width="1" height="1"/><rect x="169" y="99" width="1" height="1"/><rect x="169" y="100" width="1" height="1"/><rect x="169" y="101" width="1" height="1"/><rect x="169" y="102" width="1" height="1"/><rect x="169" y="103" width="1" height="1"/><rect x="169" y="104" width="1" height="1"/><rect x="169" y="105" width="1" height="1"/><rect x="170" y="100" width="1" height="1"/><rect x="170" y="101" width="1" height="1"/><rect x="170" y="102" width="1" height="1"/><rect x="170" y="103" width="1" height="1"/><rect x="170" y="104" width="1" height="1"/><rect x="170" y="105" width="1" height="1"/><rect x="171" y="98" width="1" height="1"/><rect x="171" y="99" width="1" height="1"/><rect x="171" y="100" width="1" height="1"/><rect x="171" y="101" width="1" height="1"/><rect x="171" y="102" width="1" height="1"/><rect x="171" y="103" width="1" height="1"/><rect x="171" y="104" width="1" height="1"/><rect x="171" y="105" width="1" height="1"/><rect x="172" y="99" width="1" height="1"/><rect x="172" y="100" width="1" height="1"/><rect x="172" y="101" width="1" height="1"/><rect x="172" y="102" width="1" height="1"/><rect x="172" y="103" width="1" height="1"/><rect x="172" y="104" width="1" height="1"/><rect x="172" y="105" width="1" height="1"/><rect x="173" y="100" width="1" height="1"/><rect x="173" y="101" width="1" height="1"/><rect x="173" y="102" width="1" height="1"/><rect x="173" y="103" width="1" height="1"/><rect x="173" y="104" width="1" height="1"/><rect x="174" y="103" width="1" height="1"/></g><rect x="169" y="101" width="3" height="3" fill="#d0ffd0"/><rect x="169" y="102" width="3" height="1" fill="#fff"/><rect x="170" y="101" width="1" height="3" fill="#fff"/><rect x="168" y="101" width="5" height="3" fill="#80ff80" opacity="0.5"/><rect x="169" y="100" width="3" height="5" fill="#80ff80" opacity="0.5"/><rect x="169" y="101" width="3" height="3" fill="#e4ffe4"/><rect x="169" y="102" width="3" height="1" fill="#fff"/><rect x="170" y="101" width="1" height="3" fill="#fff"/><g fill="#00ff00"><rect x="194" y="289" width="1" height="1"/><rect x="194" y="290" width="1" height="1"/><rect x="194" y="291" width="1" height="1"/><rect x="194" y="292" width="1" height="1"/><rect x="194" y="294" width="1" height="1"/><rect x="195" y="288" width="1" height="1"/><rect x="195" y="289" width="1" height="1"/><rect x="195" y="290" width="1" height="1"/><rect x="195" y="291" width="1" height="1"/><rect x="195" y="292" width="1" height="1"/><rect x="195" y="293" width="1" height="1"/><rect x="196" y="288" width="1" height="1"/><rect x="196" y="289" width="1" height="1"/><rect x="196" y="290" width="1" height="1"/><rect x="196" y="291" width="1" height="1"/><rect x="196" y="292" width="1" height="1"/><rect x="196" y="293" width="1" height="1"/><rect x="196" y="294" width="1" height="1"/><rect x="197" y="289" width="1" height="1"/><rect x="197" y="290" width="1" height="1"/><rect x="197" y="291" width="1" height="1"/><rect x="197" y="292" width="1" height="1"/><rect x="197" y="293" width="1" height="1"/><rect x="197" y="294" width="1" height="1"/><rect x="198" y="289" width="1" height="1"/><rect x="198" y="290" width="1" height="1"/><rect x="198" y="291" width="1" height="1"/><rect x="198" y="292" width="1" height="1"/><rect x="198" y="293" width="1" height="1"/><rect x="199" y="289" width="1" height="1"/><rect x="199" y="290" width="1" height="1"/><rect x="199" y="291" width="1" height="1"/><rect x="199" y="292" width="1" height="1"/><rect x="199" y="293" width="1" height="1"/><rect x="199" y="294" width="1" height="1"/><rect x="200" y="292" width="1" height="1"/><rect x="200" y="293" width="1" height="1"/><rect x="201" y="291" width="1" height="1"/></g><rect x="196" y="290" width="3" height="3" fill="#d0ffd0"/><rect x="196" y="291" width="3" height="1" fill="#fff"/><rect x="197" y="290" width="1" height="3" fill="#fff"/><rect x="195" y="290" width="5" height="3" fill="#80ff80" opacity="0.5"/><rect x="196" y="289" width="3" height="5" fill="#80ff80" opacity="0.5"/><rect x="196" y="290" width="3" height="3" fill="#e4ffe4"/><rect x="196" y="291" width="3" height="1" fill="#fff"/><rect x="197" y="290" width="1" height="3" fill="#fff"/><g fill="#00ff00"><rect x="194" y="263" width="1" height="1"/><rect x="194" y="264" width="1" height="1"/><rect x="195" y="261" width="1" height="1"/><rect x="195" y="262" width="1" height="1"/><rect x="195" y="263" width="1" height="1"/><rect x="195" y="264" width="1" height="1"/><rect x="195" y="265" width="1" height="1"/><rect x="195" y="266" width="1" height="1"/><rect x="196" y="261" width="1" height="1"/><rect x="196" y="262" width="1" height="1"/><rect x="196" y="263" width="1" height="1"/><rect x="196" y="264" width="1" height="1"/><rect x="196" y="265" width="1" height="1"/><rect x="196" y="266" width="1" height="1"/><rect x="196" y="267" width="1" height="1"/><rect x="197" y="262" width="1" height="1"/><rect x="197" y="263" width="1" height="1"/><rect x="197" y="264" width="1" height="1"/><rect x="197" y="265" width="1" height="1"/><rect x="197" y="266" width="1" height="1"/><rect x="198" y="262" width="1" height="1"/><rect x="198" y="263" width="1" height="1"/><rect x="198" y="264" width="1" height="1"/><rect x="198" y="265" width="1" height="1"/><rect x="198" y="266" width="1" height="1"/><rect x="199" y="261" width="1" height="1"/><rect x="199" y="262" width="1" height="1"/><rect x="199" y="263" width="1" height="1"/><rect x="199" y="264" width="1" height="1"/><rect x="199" y="265" width="1" height="1"/><rect x="199" y="266" width="1" height="1"/><rect x="199" y="267" width="1" height="1"/><rect x="200" y="262" width="1" height="1"/><rect x="200" y="264" width="1" height="1"/><rect x="200" y="266" width="1" height="1"/></g><rect x="196" y="263" width="3" height="3" fill="#d0ffd0"/><rect x="196" y="264" width="3" height="1" fill="#fff"/><rect x="197" y="263" width="1" height="3" fill="#fff"/><rect x="195" y="263" width="5" height="3" fill="#80ff80" opacity="0.5"/><rect x="196" y="262" width="3" height="5" fill="#80ff80" opacity="0.5"/><rect x="196" y="263" width="3" height="3" fill="#e4ffe4"/><rect x="196" y="264" width="3" height="1" fill="#fff"/><rect x="197" y="263" width="1" height="3" fill="#fff"/><g fill="#00ff00"><rect x="194" y="240" width="1" height="1"/><rect x="195" y="235" width="1" height="1"/><rect x="195" y="236" width="1" height="1"/><rect x="195" y="237" width="1" height="1"/><rect x="195" y="238" width="1" height="1"/><rect x="195" y="239" width="1" height="1"/><rect x="195" y="240" width="1" height="1"/><rect x="196" y="235" width="1" height="1"/><rect x="196" y="236" width="1" height="1"/><rect x="196" y="237" width="1" height="1"/><rect x="196" y="238" width="1" height="1"/><rect x="196" y="239" width="1" height="1"/><rect x="196" y="240" width="1" height="1"/><rect x="197" y="235" width="1" height="1"/><rect x="197" y="236" width="1" height="1"/><rect x="197" y="237" width="1" height="1"/><rect x="197" y="238" width="1" height="1"/><rect x="197" y="239" width="1" height="1"/><rect x="197" y="240" width="1" height="1"/><rect x="198" y="235" width="1" height="1"/><rect x="198" y="236" width="1" height="1"/><rect x="198" y="237" width="1" height="1"/><rect x="198" y="238" width="1" height="1"/><rect x="198" y="239" width="1" height="1"/><rect x="199" y="235" width="1" height="1"/><rect x="199" y="236" width="1" height="1"/><rect x="199" y="237" width="1" height="1"/><rect x="199" y="238" width="1" height="1"/><rect x="199" y="239" width="1" height="1"/><rect x="200" y="235" width="1" height="1"/><rect x="200" y="237" width="1" height="1"/></g><rect x="196" y="236" width="3" height="3" fill="#d0ffd0"/><rect x="196" y="237" width="3" height="1" fill="#fff"/><rect x="197" y="236" width="1" height="3" fill="#fff"/><rect x="195" y="236" width="5" height="3" fill="#80ff80" opacity="0.5"/><rect x="196" y="235" width="3" height="5" fill="#80ff80" opacity="0.5"/><rect x="196" y="236" width="3" height="3" fill="#e4ffe4"/><rect x="196" y="237" width="3" height="1" fill="#fff"/><rect x="197" y="236" width="1" height="3" fill="#fff"/><g fill="#00ff00"><rect x="194" y="209" width="1" height="1"/><rect x="194" y="210" width="1" height="1"/><rect x="194" y="211" width="1" height="1"/><rect x="194" y="212" width="1" height="1"/><rect x="195" y="207" width="1" height="1"/><rect x="195" y="208" width="1" height="1"/><rect x="195" y="209" width="1" height="1"/><rect x="195" y="210" width="1" height="1"/><rect x="195" y="211" width="1" height="1"/><rect x="195" y="212" width="1" height="1"/><rect x="195" y="213" width="1" height="1"/><rect x="196" y="208" width="1" height="1"/><rect x="196" y="209" width="1" height="1"/><rect x="196" y="210" width="1" height="1"/><rect x="196" y="211" width="1" height="1"/><rect x="196" y="212" width="1" height="1"/><rect x="196" y="213" width="1" height="1"/><rect x="197" y="207" width="1" height="1"/><rect x="197" y="208" width="1" height="1"/><rect x="197" y="209" width="1" height="1"/><rect x="197" y="210" width="1" height="1"/><rect x="197" y="211" width="1" height="1"/><rect x="197" y="212" width="1" height="1"/><rect x="197" y="213" width="1" height="1"/><rect x="198" y="207" width="1" height="1"/><rect x="198" y="208" width="1" height="1"/><rect x="198" y="209" width="1" height="1"/><rect x="198" y="210" width="1" height="1"/><rect x="198" y="211" width="1" height="1"/><rect x="198" y="212" width="1" height="1"/><rect x="199" y="208" width="1" height="1"/><rect x="199" y="209" width="1" height="1"/><rect x="199" y="210" width="1" height="1"/><rect x="199" y="211" width="1" height="1"/><rect x="199" y="212" width="1" height="1"/><rect x="200" y="210" width="1" height="1"/><rect x="200" y="211" width="1" height="1"/></g><rect x="196" y="209" width="3" height="3" fill="#d0ffd0"/><rect x="196" y="210" width="3" height="1" fill="#fff"/><rect x="197" y="209" width="1" height="3" fill="#fff"/><rect x="195" y="209" width="5" height="3" fill="#80ff80" opacity="0.5"/><rect x="196" y="208" width="3" height="5" fill="#80ff80" opacity="0.5"/><rect x="196" y="209" width="3" height="3" fill="#e4ffe4"/><rect x="196" y="210" width="3" height="1" fill="#fff"/><rect x="197" y="209" width="1" height="3" fill="#fff"/><g fill="#00ff00"><rect x="194" y="181" width="1" height="1"/><rect x="194" y="183" width="1" height="1"/><rect x="194" y="184" width="1" height="1"/><rect x="195" y="179" width="1" height="1"/><rect x="195" y="181" width="1" height="1"/><rect x="195" y="182" width="1" height="1"/><rect x="195" y="183" width="1" height="1"/><rect x="195" y="184" width="1" height="1"/><rect x="195" y="185" width="1" height="1"/><rect x="195" y="186" width="1" height="1"/><rect x="196" y="181" width="1" height="1"/><rect x="196" y="182" width="1" height="1"/><rect x="196" y="183" width="1" height="1"/><rect x="196" y="184" width="1" height="1"/><rect x="196" y="185" width="1" height="1"/><rect x="196" y="186" width="1" height="1"/><rect x="197" y="180" width="1" height="1"/><rect x="197" y="181" width="1" height="1"/><rect x="197" y="182" width="1" height="1"/><rect x="197" y="183" width="1" height="1"/><rect x="197" y="184" width="1" height="1"/><rect x="197" y="185" width="1" height="1"/><rect x="198" y="180" width="1" height="1"/><rect x="198" y="181" width="1" height="1"/><rect x="198" y="182" width="1" height="1"/><rect x="198" y="183" width="1" height="1"/><rect x="198" y="184" width="1" height="1"/><rect x="198" y="185" width="1" height="1"/><rect x="198" y="186" width="1" height="1"/><rect x="199" y="179" width="1" height="1"/><rect x="199" y="181" width="1" height="1"/><rect x="199" y="182" width="1" height="1"/><rect x="199" y="183" width="1" height="1"/><rect x="199" y="184" width="1" height="1"/><rect x="199" y="185" width="1" height="1"/><rect x="200" y="182" width="1" height="1"/><rect x="200" y="183" width="1" height="1"/></g><rect x="196" y="182" width="3" height="3" fill="#d0ffd0"/><rect x="196" y="183" width="3" height="1" fill="#fff"/><rect x="197" y="182" width="1" height="3" fill="#fff"/><rect x="195" y="182" width="5" height="3" fill="#80ff80" opacity="0.5"/><rect x="196" y="181" width="3" height="5" fill="#80ff80" opacity="0.5"/><rect x="196" y="182" width="3" height="3" fill="#e4ffe4"/><rect x="196" y="183" width="3" height="1" fill="#fff"/><rect x="197" y="182" width="1" height="3" fill="#fff"/><g fill="#00ff00"><rect x="194" y="155" width="1" height="1"/><rect x="194" y="156" width="1" height="1"/><rect x="194" y="157" width="1" height="1"/><rect x="195" y="152" width="1" height="1"/><rect x="195" y="154" width="1" height="1"/><rect x="195" y="155" width="1" height="1"/><rect x="195" y="156" width="1" height="1"/><rect x="195" y="157" width="1" height="1"/><rect x="195" y="158" width="1" height="1"/><rect x="196" y="153" width="1" height="1"/><rect x="196" y="154" width="1" height="1"/><rect x="196" y="155" width="1" height="1"/><rect x="196" y="156" width="1" height="1"/><rect x="196" y="157" width="1" height="1"/><rect x="196" y="158" width="1" height="1"/><rect x="196" y="159" width="1" height="1"/><rect x="197" y="153" width="1" height="1"/><rect x="197" y="154" width="1" height="1"/><rect x="197" y="155" width="1" height="1"/><rect x="197" y="156" width="1" height="1"/><rect x="197" y="157" width="1" height="1"/><rect x="197" y="158" width="1" height="1"/><rect x="198" y="154" width="1" height="1"/><rect x="198" y="155" width="1" height="1"/><rect x="198" y="156" width="1" height="1"/><rect x="198" y="157" width="1" height="1"/><rect x="198" y="158" width="1" height="1"/><rect x="199" y="154" width="1" height="1"/><rect x="199" y="155" width="1" height="1"/><rect x="199" y="156" width="1" height="1"/><rect x="199" y="157" width="1" height="1"/><rect x="199" y="158" width="1" height="1"/><rect x="200" y="154" width="1" height="1"/><rect x="200" y="156" width="1" height="1"/><rect x="200" y="157" width="1" height="1"/><rect x="200" y="158" width="1" height="1"/></g><rect x="196" y="155" width="3" height="3" fill="#d0ffd0"/><rect x="196" y="156" width="3" height="1" fill="#fff"/><rect x="197" y="155" width="1" height="3" fill="#fff"/><rect x="195" y="155" width="5" height="3" fill="#80ff80" opacity="0.5"/><rect x="196" y="154" width="3" height="5" fill="#80ff80" opacity="0.5"/><rect x="196" y="155" width="3" height="3" fill="#e4ffe4"/><rect x="196" y="156" width="3" height="1" fill="#fff"/><rect x="197" y="155" width="1" height="3" fill="#fff"/><g fill="#00ff00"><rect x="193" y="130" width="1" height="1"/><rect x="194" y="127" width="1" height="1"/><rect x="194" y="128" width="1" height="1"/><rect x="194" y="130" width="1" height="1"/><rect x="195" y="127" width="1" height="1"/><rect x="195" y="128" width="1" height="1"/><rect x="195" y="129" width="1" height="1"/><rect x="195" y="130" width="1" height="1"/><rect x="195" y="131" width="1" height="1"/><rect x="196" y="127" width="1" height="1"/><rect x="196" y="128" width="1" height="1"/><rect x="196" y="129" width="1" height="1"/><rect x="196" y="130" width="1" height="1"/><rect x="196" y="131" width="1" height="1"/><rect x="196" y="132" width="1" height="1"/><rect x="197" y="127" width="1" height="1"/><rect x="197" y="128" width="1" height="1"/><rect x="197" y="129" width="1" height="1"/><rect x="197" y="130" width="1" height="1"/><rect x="197" y="131" width="1" height="1"/><rect x="197" y="132" width="1" height="1"/><rect x="198" y="127" width="1" height="1"/><rect x="198" y="128" width="1" height="1"/><rect x="198" y="129" width="1" height="1"/><rect x="198" y="130" width="1" height="1"/><rect x="198" y="131" width="1" height="1"/><rect x="198" y="132" width="1" height="1"/><rect x="199" y="127" width="1" height="1"/><rect x="199" y="128" width="1" height="1"/><rect x="199" y="129" width="1" height="1"/><rect x="199" y="130" width="1" height="1"/><rect x="199" y="131" width="1" height="1"/><rect x="200" y="130" width="1" height="1"/><rect x="201" y="128" width="1" height="1"/></g><rect x="196" y="128" width="3" height="3" fill="#d0ffd0"/><rect x="196" y="129" width="3" height="1" fill="#fff"/><rect x="197" y="128" width="1" height="3" fill="#fff"/><rect x="195" y="128" width="5" height="3" fill="#80ff80" opacity="0.5"/><rect x="196" y="127" width="3" height="5" fill="#80ff80" opacity="0.5"/><rect x="196" y="128" width="3" height="3" fill="#e4ffe4"/><rect x="196" y="129" width="3" height="1" fill="#fff"/><rect x="197" y="128" width="1" height="3" fill="#fff"/><g fill="#00ff00"><rect x="194" y="102" width="1" height="1"/><rect x="194" y="103" width="1" height="1"/><rect x="195" y="98" width="1" height="1"/><rect x="195" y="99" width="1" height="1"/><rect x="195" y="100" width="1" height="1"/><rect x="195" y="101" width="1" height="1"/><rect x="195" y="102" width="1" height="1"/><rect x="195" y="103" width="1" height="1"/><rect x="195" y="104" width="1" height="1"/><rect x="195" y="106" width="1" height="1"/><rect x="196" y="99" width="1" height="1"/><rect x="196" y="100" width="1" height="1"/><rect x="196" y="101" width="1" height="1"/><rect x="196" y="102" width="1" height="1"/><rect x="196" y="103" width="1" height="1"/><rect x="196" y="104" width="1" height="1"/><rect x="197" y="99" width="1" height="1"/><rect x="197" y="100" width="1" height="1"/><rect x="197" y="101" width="1" height="1"/><rect x="197" y="102" width="1" height="1"/><rect x="197" y="103" width="1" height="1"/><rect x="197" y="104" width="1" height="1"/><rect x="198" y="100" width="1" height="1"/><rect x="198" y="101" width="1" height="1"/><rect x="198" y="102" width="1" height="1"/><rect x="198" y="103" width="1" height="1"/><rect x="198" y="104" width="1" height="1"/><rect x="199" y="100" width="1" height="1"/><rect x="199" y="101" width="1" height="1"/><rect x="199" y="102" width="1" height="1"/><rect x="199" y="103" width="1" height="1"/><rect x="199" y="104" width="1" height="1"/><rect x="200" y="101" width="1" height="1"/><rect x="200" y="103" width="1" height="1"/></g><rect x="196" y="101" width="3" height="3" fill="#d0ffd0"/><rect x="196" y="102" width="3" height="1" fill="#fff"/><rect x="197" y="101" width="1" height="3" fill="#fff"/><rect x="195" y="101" width="5" height="3" fill="#80ff80" opacity="0.5"/><rect x="196" y="100" width="3" height="5" fill="#80ff80" opacity="0.5"/><rect x="196" y="101" width="3" height="3" fill="#e4ffe4"/><rect x="196" y="102" width="3" height="1" fill="#fff"/><rect x="197" y="101" width="1" height="3" fill="#fff"/><g fill="#00ff00"><rect x="221" y="292" width="1" height="1"/><rect x="221" y="293" width="1" height="1"/><rect x="222" y="288" width="1" height="1"/><rect x="222" y="289" width="1" height="1"/><rect x="222" y="290" width="1" height="1"/><rect x="222" y="291" width="1" height="1"/><rect x="222" y="292" width="1" height="1"/><rect x="222" y="293" width="1" height="1"/><rect x="222" y="294" width="1" height="1"/><rect x="223" y="288" width="1" height="1"/><rect x="223" y="289" width="1" height="1"/><rect x="223" y="290" width="1" height="1"/><rect x="223" y="291" width="1" height="1"/><rect x="223" y="292" width="1" height="1"/><rect x="223" y="293" width="1" height="1"/><rect x="224" y="288" width="1" height="1"/><rect x="224" y="289" width="1" height="1"/><rect x="224" y="290" width="1" height="1"/><rect x="224" y="291" width="1" height="1"/><rect x="224" y="292" width="1" height="1"/><rect x="224" y="293" width="1" height="1"/><rect x="225" y="289" width="1" height="1"/><rect x="225" y="290" width="1" height="1"/><rect x="225" y="291" width="1" height="1"/><rect x="225" y="292" width="1" height="1"/><rect x="225" y="293" width="1" height="1"/><rect x="226" y="289" width="1" height="1"/><rect x="226" y="290" width="1" height="1"/><rect x="226" y="291" width="1" height="1"/><rect x="226" y="292" width="1" height="1"/><rect x="226" y="293" width="1" height="1"/><rect x="226" y="295" width="1" height="1"/><rect x="227" y="293" width="1" height="1"/><rect x="228" y="291" width="1" height="1"/></g><rect x="223" y="290" width="3" height="3" fill="#d0ffd0"/><rect x="223" y="291" width="3" height="1" fill="#fff"/><rect x="224" y="290" width="1" height="3" fill="#fff"/><rect x="222" y="290" width="5" height="3" fill="#80ff80" opacity="0.5"/><rect x="223" y="289" width="3" height="5" fill="#80ff80" opacity="0.5"/><rect x="223" y="290" width="3" height="3" fill="#e4ffe4"/><rect x="223" y="291" width="3" height="1" fill="#fff"/><rect x="224" y="290" width="1" height="3" fill="#fff"/><g fill="#00ff00"><rect x="221" y="265" width="1" height="1"/><rect x="221" y="266" width="1" height="1"/><rect x="222" y="262" width="1" height="1"/><rect x="222" y="263" width="1" height="1"/><rect x="222" y="264" width="1" height="1"/><rect x="222" y="265" width="1" height="1"/><rect x="222" y="266" width="1" height="1"/><rect x="222" y="267" width="1" height="1"/><rect x="223" y="260" width="1" height="1"/><rect x="223" y="262" width="1" height="1"/><rect x="223" y="263" width="1" height="1"/><rect x="223" y="264" width="1" height="1"/><rect x="223" y="265" width="1" height="1"/><rect x="223" y="266" width="1" height="1"/><rect x="223" y="267" width="1" height="1"/><rect x="224" y="262" width="1" height="1"/><rect x="224" y="263" width="1" height="1"/><rect x="224" y="264" width="1" height="1"/><rect x="224" y="265" width="1" height="1"/><rect x="224" y="266" width="1" height="1"/><rect x="225" y="261" width="1" height="1"/><rect x="225" y="262" width="1" height="1"/><rect x="225" y="263" width="1" height="1"/><rect x="225" y="264" width="1" height="1"/><rect x="225" y="265" width="1" height="1"/><rect x="225" y="266" width="1" height="1"/><rect x="225" y="267" width="1" height="1"/><rect x="226" y="262" width="1" height="1"/><rect x="226" y="263" width="1" height="1"/><rect x="226" y="264" width="1" height="1"/><rect x="226" y="265" width="1" height="1"/><rect x="226" y="266" width="1" height="1"/><rect x="226" y="267" width="1" height="1"/><rect x="227" y="263" width="1" height="1"/><rect x="227" y="264" width="1" height="1"/><rect x="227" y="266" width="1" height="1"/></g><rect x="223" y="263" width="3" height="3" fill="#d0ffd0"/><rect x="223" y="264" width="3" height="1" fill="#fff"/><rect x="224" y="263" width="1" height="3" fill="#fff"/><rect x="222" y="263" width="5" height="3" fill="#80ff80" opacity="0.5"/><rect x="223" y="262" width="3" height="5" fill="#80ff80" opacity="0.5"/><rect x="223" y="263" width="3" height="3" fill="#e4ffe4"/><rect x="223" y="264" width="3" height="1" fill="#fff"/><rect x="224" y="263" width="1" height="3" fill="#fff"/><g fill="#00ff00"><rect x="220" y="238" width="1" height="1"/><rect x="221" y="236" width="1" height="1"/><rect x="222" y="235" width="1" height="1"/><rect x="222" y="236" width="1" height="1"/><rect x="222" y="237" width="1" height="1"/><rect x="222" y="238" width="1" height="1"/><rect x="222" y="239" width="1" height="1"/><rect x="223" y="234" width="1" height="1"/><rect x="223" y="235" width="1" height="1"/><rect x="223" y="236" width="1" height="1"/><rect x="223" y="237" width="1" height="1"/><rect x="223" y="238" width="1" height="1"/><rect x="223" y="239" width="1" height="1"/><rect x="223" y="240" width="1" height="1"/><rect x="224" y="234" width="1" height="1"/><rect x="224" y="235" width="1" height="1"/><rect x="224" y="236" width="1" height="1"/><rect x="224" y="237" width="1" height="1"/><rect x="224" y="238" width="1" height="1"/><rect x="224" y="239" width="1" height="1"/><rect x="225" y="234" width="1" height="1"/><rect x="225" y="235" width="1" height="1"/><rect x="225" y="236" width="1" height="1"/><rect x="225" y="237" width="1" height="1"/><rect x="225" y="238" width="1" height="1"/><rect x="225" y="239" width="1" height="1"/><rect x="226" y="235" width="1" height="1"/><rect x="226" y="236" width="1" height="1"/><rect x="226" y="237" width="1" height="1"/><rect x="226" y="238" width="1" height="1"/><rect x="226" y="239" width="1" height="1"/><rect x="226" y="240" width="1" height="1"/><rect x="227" y="235" width="1" height="1"/><rect x="227" y="239" width="1" height="1"/></g><rect x="223" y="236" width="3" height="3" fill="#d0ffd0"/><rect x="223" y="237" width="3" height="1" fill="#fff"/><rect x="224" y="236" width="1" height="3" fill="#fff"/><rect x="222" y="236" width="5" height="3" fill="#80ff80" opacity="0.5"/><rect x="223" y="235" width="3" height="5" fill="#80ff80" opacity="0.5"/><rect x="223" y="236" width="3" height="3" fill="#e4ffe4"/><rect x="223" y="237" width="3" height="1" fill="#fff"/><rect x="224" y="236" width="1" height="3" fill="#fff"/><g fill="#00ff00"><rect x="221" y="208" width="1" height="1"/><rect x="221" y="209" width="1" height="1"/><rect x="221" y="210" width="1" height="1"/><rect x="221" y="212" width="1" height="1"/><rect x="222" y="208" width="1" height="1"/><rect x="222" y="209" width="1" height="1"/><rect x="222" y="210" width="1" height="1"/><rect x="222" y="211" width="1" height="1"/><rect x="222" y="212" width="1" height="1"/><rect x="222" y="214" width="1" height="1"/><rect x="223" y="206" width="1" height="1"/><rect x="223" y="208" width="1" height="1"/><rect x="223" y="209" width="1" height="1"/><rect x="223" y="210" width="1" height="1"/><rect x="223" y="211" width="1" height="1"/><rect x="223" y="212" width="1" height="1"/><rect x="223" y="213" width="1" height="1"/><rect x="224" y="208" width="1" height="1"/><rect x="224" y="209" width="1" height="1"/><rect x="224" y="210" width="1" height="1"/><rect x="224" y="211" width="1" height="1"/><rect x="224" y="212" width="1" height="1"/><rect x="225" y="208" width="1" height="1"/><rect x="225" y="209" width="1" height="1"/><rect x="225" y="210" width="1" height="1"/><rect x="225" y="211" width="1" height="1"/><rect x="225" y="212" width="1" height="1"/><rect x="226" y="207" width="1" height="1"/><rect x="226" y="208" width="1" height="1"/><rect x="226" y="209" width="1" height="1"/><rect x="226" y="210" width="1" height="1"/><rect x="226" y="211" width="1" height="1"/><rect x="226" y="212" width="1" height="1"/><rect x="227" y="208" width="1" height="1"/><rect x="227" y="209" width="1" height="1"/><rect x="228" y="210" width="1" height="1"/></g><rect x="223" y="209" width="3" height="3" fill="#d0ffd0"/><rect x="223" y="210" width="3" height="1" fill="#fff"/><rect x="224" y="209" width="1" height="3" fill="#fff"/><rect x="222" y="209" width="5" height="3" fill="#80ff80" opacity="0.5"/><rect x="223" y="208" width="3" height="5" fill="#80ff80" opacity="0.5"/><rect x="223" y="209" width="3" height="3" fill="#e4ffe4"/><rect x="223" y="210" width="3" height="1" fill="#fff"/><rect x="224" y="209" width="1" height="3" fill="#fff"/><g fill="#00ff00"><rect x="221" y="180" width="1" height="1"/><rect x="221" y="181" width="1" height="1"/><rect x="222" y="180" width="1" height="1"/><rect x="222" y="181" width="1" height="1"/><rect x="222" y="182" width="1" height="1"/><rect x="222" y="183" width="1" height="1"/><rect x="222" y="184" width="1" height="1"/><rect x="222" y="185" width="1" height="1"/><rect x="222" y="186" width="1" height="1"/><rect x="223" y="180" width="1" height="1"/><rect x="223" y="181" width="1" height="1"/><rect x="223" y="182" width="1" height="1"/><rect x="223" y="183" width="1" height="1"/><rect x="223" y="184" width="1" height="1"/><rect x="223" y="185" width="1" height="1"/><rect x="224" y="181" width="1" height="1"/><rect x="224" y="182" width="1" height="1"/><rect x="224" y="183" width="1" height="1"/><rect x="224" y="184" width="1" height="1"/><rect x="224" y="185" width="1" height="1"/><rect x="225" y="181" width="1" height="1"/><rect x="225" y="182" width="1" height="1"/><rect x="225" y="183" width="1" height="1"/><rect x="225" y="184" width="1" height="1"/><rect x="225" y="185" width="1" height="1"/><rect x="226" y="180" width="1" height="1"/><rect x="226" y="181" width="1" height="1"/><rect x="226" y="182" width="1" height="1"/><rect x="226" y="183" width="1" height="1"/><rect x="226" y="184" width="1" height="1"/><rect x="226" y="185" width="1" height="1"/><rect x="227" y="181" width="1" height="1"/><rect x="227" y="183" width="1" height="1"/><rect x="227" y="184" width="1" height="1"/><rect x="227" y="185" width="1" height="1"/></g><rect x="223" y="182" width="3" height="3" fill="#d0ffd0"/><rect x="223" y="183" width="3" height="1" fill="#fff"/><rect x="224" y="182" width="1" height="3" fill="#fff"/><rect x="222" y="182" width="5" height="3" fill="#80ff80" opacity="0.5"/><rect x="223" y="181" width="3" height="5" fill="#80ff80" opacity="0.5"/><rect x="223" y="182" width="3" height="3" fill="#e4ffe4"/><rect x="223" y="183" width="3" height="1" fill="#fff"/><rect x="224" y="182" width="1" height="3" fill="#fff"/><g fill="#00ff00"><rect x="220" y="156" width="1" height="1"/><rect x="221" y="156" width="1" height="1"/><rect x="221" y="157" width="1" height="1"/><rect x="221" y="158" width="1" height="1"/><rect x="222" y="154" width="1" height="1"/><rect x="222" y="155" width="1" height="1"/><rect x="222" y="156" width="1" height="1"/><rect x="222" y="157" width="1" height="1"/><rect x="222" y="158" width="1" height="1"/><rect x="223" y="153" width="1" height="1"/><rect x="223" y="154" width="1" height="1"/><rect x="223" y="155" width="1" height="1"/><rect x="223" y="156" width="1" height="1"/><rect x="223" y="157" width="1" height="1"/><rect x="223" y="158" width="1" height="1"/><rect x="223" y="159" width="1" height="1"/><rect x="224" y="153" width="1" height="1"/><rect x="224" y="154" width="1" height="1"/><rect x="224" y="155" width="1" height="1"/><rect x="224" y="156" width="1" height="1"/><rect x="224" y="157" width="1" height="1"/><rect x="224" y="158" width="1" height="1"/><rect x="224" y="159" width="1" height="1"/><rect x="225" y="154" width="1" height="1"/><rect x="225" y="155" width="1" height="1"/><rect x="225" y="156" width="1" height="1"/><rect x="225" y="157" width="1" height="1"/><rect x="225" y="158" width="1" height="1"/><rect x="226" y="154" width="1" height="1"/><rect x="226" y="155" width="1" height="1"/><rect x="226" y="156" width="1" height="1"/><rect x="226" y="157" width="1" height="1"/><rect x="226" y="158" width="1" height="1"/><rect x="227" y="153" width="1" height="1"/><rect x="227" y="154" width="1" height="1"/><rect x="227" y="156" width="1" height="1"/><rect x="227" y="157" width="1" height="1"/><rect x="227" y="158" width="1" height="1"/></g><rect x="223" y="155" width="3" height="3" fill="#d0ffd0"/><rect x="223" y="156" width="3" height="1" fill="#fff"/><rect x="224" y="155" width="1" height="3" fill="#fff"/><rect x="222" y="155" width="5" height="3" fill="#80ff80" opacity="0.5"/><rect x="223" y="154" width="3" height="5" fill="#80ff80" opacity="0.5"/><rect x="223" y="155" width="3" height="3" fill="#e4ffe4"/><rect x="223" y="156" width="3" height="1" fill="#fff"/><rect x="224" y="155" width="1" height="3" fill="#fff"/><g fill="#00ff00"><rect x="221" y="127" width="1" height="1"/><rect x="221" y="128" width="1" height="1"/><rect x="222" y="126" width="1" height="1"/><rect x="222" y="127" width="1" height="1"/><rect x="222" y="128" width="1" height="1"/><rect x="222" y="129" width="1" height="1"/><rect x="222" y="130" width="1" height="1"/><rect x="222" y="131" width="1" height="1"/><rect x="222" y="132" width="1" height="1"/><rect x="223" y="126" width="1" height="1"/><rect x="223" y="127" width="1" height="1"/><rect x="223" y="128" width="1" height="1"/><rect x="223" y="129" width="1" height="1"/><rect x="223" y="130" width="1" height="1"/><rect x="223" y="131" width="1" height="1"/><rect x="224" y="126" width="1" height="1"/><rect x="224" y="127" width="1" height="1"/><rect x="224" y="128" width="1" height="1"/><rect x="224" y="129" width="1" height="1"/><rect x="224" y="130" width="1" height="1"/><rect x="224" y="131" width="1" height="1"/><rect x="224" y="132" width="1" height="1"/><rect x="225" y="127" width="1" height="1"/><rect x="225" y="128" width="1" height="1"/><rect x="225" y="129" width="1" height="1"/><rect x="225" y="130" width="1" height="1"/><rect x="225" y="131" width="1" height="1"/><rect x="225" y="132" width="1" height="1"/><rect x="226" y="126" width="1" height="1"/><rect x="226" y="127" width="1" height="1"/><rect x="226" y="128" width="1" height="1"/><rect x="226" y="129" width="1" height="1"/><rect x="226" y="130" width="1" height="1"/><rect x="226" y="131" width="1" height="1"/><rect x="226" y="132" width="1" height="1"/><rect x="227" y="127" width="1" height="1"/><rect x="227" y="128" width="1" height="1"/><rect x="227" y="130" width="1" height="1"/><rect x="227" y="131" width="1" height="1"/></g><rect x="223" y="128" width="3" height="3" fill="#d0ffd0"/><rect x="223" y="129" width="3" height="1" fill="#fff"/><rect x="224" y="128" width="1" height="3" fill="#fff"/><rect x="222" y="128" width="5" height="3" fill="#80ff80" opacity="0.5"/><rect x="223" y="127" width="3" height="5" fill="#80ff80" opacity="0.5"/><rect x="223" y="128" width="3" height="3" fill="#e4ffe4"/><rect x="223" y="129" width="3" height="1" fill="#fff"/><rect x="224" y="128" width="1" height="3" fill="#fff"/><g fill="#00ff00"><rect x="221" y="100" width="1" height="1"/><rect x="221" y="101" width="1" height="1"/><rect x="221" y="103" width="1" height="1"/><rect x="221" y="104" width="1" height="1"/><rect x="222" y="99" width="1" height="1"/><rect x="222" y="100" width="1" height="1"/><rect x="222" y="101" width="1" height="1"/><rect x="222" y="102" width="1" height="1"/><rect x="222" y="103" width="1" height="1"/><rect x="222" y="104" width="1" height="1"/><rect x="223" y="100" width="1" height="1"/><rect x="223" y="101" width="1" height="1"/><rect x="223" y="102" width="1" height="1"/><rect x="223" y="103" width="1" height="1"/><rect x="223" y="104" width="1" height="1"/><rect x="223" y="105" width="1" height="1"/><rect x="224" y="99" width="1" height="1"/><rect x="224" y="100" width="1" height="1"/><rect x="224" y="101" width="1" height="1"/><rect x="224" y="102" width="1" height="1"/><rect x="224" y="103" width="1" height="1"/><rect x="224" y="104" width="1" height="1"/><rect x="224" y="105" width="1" height="1"/><rect x="225" y="100" width="1" height="1"/><rect x="225" y="101" width="1" height="1"/><rect x="225" y="102" width="1" height="1"/><rect x="225" y="103" width="1" height="1"/><rect x="225" y="104" width="1" height="1"/><rect x="225" y="105" width="1" height="1"/><rect x="226" y="100" width="1" height="1"/><rect x="226" y="101" width="1" height="1"/><rect x="226" y="102" width="1" height="1"/><rect x="226" y="103" width="1" height="1"/><rect x="226" y="104" width="1" height="1"/></g><rect x="223" y="101" width="3" height="3" fill="#d0ffd0"/><rect x="223" y="102" width="3" height="1" fill="#fff"/><rect x="224" y="101" width="1" height="3" fill="#fff"/><rect x="222" y="101" width="5" height="3" fill="#80ff80" opacity="0.5"/><rect x="223" y="100" width="3" height="5" fill="#80ff80" opacity="0.5"/><rect x="223" y="101" width="3" height="3" fill="#e4ffe4"/><rect x="223" y="102" width="3" height="1" fill="#fff"/><rect x="224" y="101" width="1" height="3" fill="#fff"/><g fill="#00ff00"><rect x="248" y="291" width="1" height="1"/><rect x="248" y="293" width="1" height="1"/><rect x="249" y="289" width="1" height="1"/><rect x="249" y="290" width="1" height="1"/><rect x="249" y="291" width="1" height="1"/><rect x="249" y="292" width="1" height="1"/><rect x="249" y="293" width="1" height="1"/><rect x="249" y="294" width="1" height="1"/><rect x="250" y="288" width="1" height="1"/><rect x="250" y="289" width="1" height="1"/><rect x="250" y="290" width="1" height="1"/><rect x="250" y="291" width="1" height="1"/><rect x="250" y="292" width="1" height="1"/><rect x="250" y="293" width="1" height="1"/><rect x="251" y="289" width="1" height="1"/><rect x="251" y="290" width="1" height="1"/><rect x="251" y="291" width="1" height="1"/><rect x="251" y="292" width="1" height="1"/><rect x="251" y="293" width="1" height="1"/><rect x="252" y="288" width="1" height="1"/><rect x="252" y="289" width="1" height="1"/><rect x="252" y="290" width="1" height="1"/><rect x="252" y="291" width="1" height="1"/><rect x="252" y="292" width="1" height="1"/><rect x="252" y="293" width="1" height="1"/><rect x="252" y="294" width="1" height="1"/><rect x="253" y="289" width="1" height="1"/><rect x="253" y="290" width="1" height="1"/><rect x="253" y="291" width="1" height="1"/><rect x="253" y="292" width="1" height="1"/><rect x="253" y="293" width="1" height="1"/><rect x="253" y="294" width="1" height="1"/><rect x="254" y="290" width="1" height="1"/></g><rect x="250" y="290" width="3" height="3" fill="#d0ffd0"/><rect x="250" y="291" width="3" height="1" fill="#fff"/><rect x="251" y="290" width="1" height="3" fill="#fff"/><rect x="249" y="290" width="5" height="3" fill="#80ff80" opacity="0.5"/><rect x="250" y="289" width="3" height="5" fill="#80ff80" opacity="0.5"/><rect x="250" y="290" width="3" height="3" fill="#e4ffe4"/><rect x="250" y="291" width="3" height="1" fill="#fff"/><rect x="251" y="290" width="1" height="3" fill="#fff"/><g fill="#00ff00"><rect x="248" y="262" width="1" height="1"/><rect x="248" y="264" width="1" height="1"/><rect x="248" y="265" width="1" height="1"/><rect x="248" y="267" width="1" height="1"/><rect x="249" y="262" width="1" height="1"/><rect x="249" y="263" width="1" height="1"/><rect x="249" y="264" width="1" height="1"/><rect x="249" y="265" width="1" height="1"/><rect x="249" y="266" width="1" height="1"/><rect x="249" y="267" width="1" height="1"/><rect x="250" y="262" width="1" height="1"/><rect x="250" y="263" width="1" height="1"/><rect x="250" y="264" width="1" height="1"/><rect x="250" y="265" width="1" height="1"/><rect x="250" y="266" width="1" height="1"/><rect x="250" y="267" width="1" height="1"/><rect x="251" y="261" width="1" height="1"/><rect x="251" y="262" width="1" height="1"/><rect x="251" y="263" width="1" height="1"/><rect x="251" y="264" width="1" height="1"/><rect x="251" y="265" width="1" height="1"/><rect x="251" y="266" width="1" height="1"/><rect x="251" y="267" width="1" height="1"/><rect x="252" y="262" width="1" height="1"/><rect x="252" y="263" width="1" height="1"/><rect x="252" y="264" width="1" height="1"/><rect x="252" y="265" width="1" height="1"/><rect x="252" y="266" width="1" height="1"/><rect x="253" y="262" width="1" height="1"/><rect x="253" y="263" width="1" height="1"/><rect x="253" y="264" width="1" height="1"/><rect x="253" y="265" width="1" height="1"/><rect x="253" y="266" width="1" height="1"/><rect x="254" y="262" width="1" height="1"/><rect x="254" y="264" width="1" height="1"/></g><rect x="250" y="263" width="3" height="3" fill="#d0ffd0"/><rect x="250" y="264" width="3" height="1" fill="#fff"/><rect x="251" y="263" width="1" height="3" fill="#fff"/><rect x="249" y="263" width="5" height="3" fill="#80ff80" opacity="0.5"/><rect x="250" y="262" width="3" height="5" fill="#80ff80" opacity="0.5"/><rect x="250" y="263" width="3" height="3" fill="#e4ffe4"/><rect x="250" y="264" width="3" height="1" fill="#fff"/><rect x="251" y="263" width="1" height="3" fill="#fff"/><g fill="#00ff00"><rect x="249" y="235" width="1" height="1"/><rect x="249" y="236" width="1" height="1"/><rect x="249" y="237" width="1" height="1"/><rect x="249" y="238" width="1" height="1"/><rect x="249" y="239" width="1" height="1"/><rect x="250" y="235" width="1" height="1"/><rect x="250" y="236" width="1" height="1"/><rect x="250" y="237" width="1" height="1"/><rect x="250" y="238" width="1" height="1"/><rect x="250" y="239" width="1" height="1"/><rect x="251" y="235" width="1" height="1"/><rect x="251" y="236" width="1" height="1"/><rect x="251" y="237" width="1" height="1"/><rect x="251" y="238" width="1" height="1"/><rect x="251" y="239" width="1" height="1"/><rect x="252" y="235" width="1" height="1"/><rect x="252" y="236" width="1" height="1"/><rect x="252" y="237" width="1" height="1"/><rect x="252" y="238" width="1" height="1"/><rect x="252" y="239" width="1" height="1"/><rect x="253" y="234" width="1" height="1"/><rect x="253" y="235" width="1" height="1"/><rect x="253" y="236" width="1" height="1"/><rect x="253" y="237" width="1" height="1"/><rect x="253" y="238" width="1" height="1"/><rect x="253" y="239" width="1" height="1"/><rect x="253" y="240" width="1" height="1"/><rect x="254" y="235" width="1" height="1"/><rect x="254" y="236" width="1" height="1"/><rect x="254" y="238" width="1" height="1"/></g><rect x="250" y="236" width="3" height="3" fill="#d0ffd0"/><rect x="250" y="237" width="3" height="1" fill="#fff"/><rect x="251" y="236" width="1" height="3" fill="#fff"/><rect x="249" y="236" width="5" height="3" fill="#80ff80" opacity="0.5"/><rect x="250" y="235" width="3" height="5" fill="#80ff80" opacity="0.5"/><rect x="250" y="236" width="3" height="3" fill="#e4ffe4"/><rect x="250" y="237" width="3" height="1" fill="#fff"/><rect x="251" y="236" width="1" height="3" fill="#fff"/><g fill="#00ff00"><rect x="248" y="210" width="1" height="1"/><rect x="248" y="212" width="1" height="1"/><rect x="249" y="207" width="1" height="1"/><rect x="249" y="208" width="1" height="1"/><rect x="249" y="209" width="1" height="1"/><rect x="249" y="210" width="1" height="1"/><rect x="249" y="211" width="1" height="1"/><rect x="249" y="212" width="1" height="1"/><rect x="249" y="213" width="1" height="1"/><rect x="250" y="207" width="1" height="1"/><rect x="250" y="208" width="1" height="1"/><rect x="250" y="209" width="1" height="1"/><rect x="250" y="210" width="1" height="1"/><rect x="250" y="211" width="1" height="1"/><rect x="250" y="212" width="1" height="1"/><rect x="251" y="207" width="1" height="1"/><rect x="251" y="208" width="1" height="1"/><rect x="251" y="209" width="1" height="1"/><rect x="251" y="210" width="1" height="1"/><rect x="251" y="211" width="1" height="1"/><rect x="251" y="212" width="1" height="1"/><rect x="251" y="213" width="1" height="1"/><rect x="252" y="208" width="1" height="1"/><rect x="252" y="209" width="1" height="1"/><rect x="252" y="210" width="1" height="1"/><rect x="252" y="211" width="1" height="1"/><rect x="252" y="212" width="1" height="1"/><rect x="253" y="208" width="1" height="1"/><rect x="253" y="209" width="1" height="1"/><rect x="253" y="210" width="1" height="1"/><rect x="253" y="211" width="1" height="1"/><rect x="253" y="212" width="1" height="1"/><rect x="254" y="211" width="1" height="1"/><rect x="255" y="208" width="1" height="1"/><rect x="255" y="212" width="1" height="1"/></g><rect x="250" y="209" width="3" height="3" fill="#d0ffd0"/><rect x="250" y="210" width="3" height="1" fill="#fff"/><rect x="251" y="209" width="1" height="3" fill="#fff"/><rect x="249" y="209" width="5" height="3" fill="#80ff80" opacity="0.5"/><rect x="250" y="208" width="3" height="5" fill="#80ff80" opacity="0.5"/><rect x="250" y="209" width="3" height="3" fill="#e4ffe4"/><rect x="250" y="210" width="3" height="1" fill="#fff"/><rect x="251" y="209" width="1" height="3" fill="#fff"/><g fill="#00ff00"><rect x="248" y="182" width="1" height="1"/><rect x="248" y="184" width="1" height="1"/><rect x="248" y="185" width="1" height="1"/><rect x="249" y="180" width="1" height="1"/><rect x="249" y="181" width="1" height="1"/><rect x="249" y="182" width="1" height="1"/><rect x="249" y="183" width="1" height="1"/><rect x="249" y="184" width="1" height="1"/><rect x="249" y="185" width="1" height="1"/><rect x="249" y="186" width="1" height="1"/><rect x="250" y="180" width="1" height="1"/><rect x="250" y="181" width="1" height="1"/><rect x="250" y="182" width="1" height="1"/><rect x="250" y="183" width="1" height="1"/><rect x="250" y="184" width="1" height="1"/><rect x="250" y="185" width="1" height="1"/><rect x="250" y="186" width="1" height="1"/><rect x="251" y="181" width="1" height="1"/><rect x="251" y="182" width="1" height="1"/><rect x="251" y="183" width="1" height="1"/><rect x="251" y="184" width="1" height="1"/><rect x="251" y="185" width="1" height="1"/><rect x="252" y="181" width="1" height="1"/><rect x="252" y="182" width="1" height="1"/><rect x="252" y="183" width="1" height="1"/><rect x="252" y="184" width="1" height="1"/><rect x="252" y="185" width="1" height="1"/><rect x="252" y="186" width="1" height="1"/><rect x="253" y="180" width="1" height="1"/><rect x="253" y="181" width="1" height="1"/><rect x="253" y="182" width="1" height="1"/><rect x="253" y="183" width="1" height="1"/><rect x="253" y="184" width="1" height="1"/><rect x="253" y="185" width="1" height="1"/><rect x="253" y="186" width="1" height="1"/></g><rect x="250" y="182" width="3" height="3" fill="#d0ffd0"/><rect x="250" y="183" width="3" height="1" fill="#fff"/><rect x="251" y="182" width="1" height="3" fill="#fff"/><rect x="249" y="182" width="5" height="3" fill="#80ff80" opacity="0.5"/><rect x="250" y="181" width="3" height="5" fill="#80ff80" opacity="0.5"/><rect x="250" y="182" width="3" height="3" fill="#e4ffe4"/><rect x="250" y="183" width="3" height="1" fill="#fff"/><rect x="251" y="182" width="1" height="3" fill="#fff"/><g fill="#00ff00"><rect x="247" y="156" width="1" height="1"/><rect x="248" y="156" width="1" height="1"/><rect x="249" y="152" width="1" height="1"/><rect x="249" y="154" width="1" height="1"/><rect x="249" y="155" width="1" height="1"/><rect x="249" y="156" width="1" height="1"/><rect x="249" y="157" width="1" height="1"/><rect x="249" y="158" width="1" height="1"/><rect x="249" y="159" width="1" height="1"/><rect x="250" y="154" width="1" height="1"/><rect x="250" y="155" width="1" height="1"/><rect x="250" y="156" width="1" height="1"/><rect x="250" y="157" width="1" height="1"/><rect x="250" y="158" width="1" height="1"/><rect x="251" y="154" width="1" height="1"/><rect x="251" y="155" width="1" height="1"/><rect x="251" y="156" width="1" height="1"/><rect x="251" y="157" width="1" height="1"/><rect x="251" y="158" width="1" height="1"/><rect x="251" y="159" width="1" height="1"/><rect x="252" y="153" width="1" height="1"/><rect x="252" y="154" width="1" height="1"/><rect x="252" y="155" width="1" height="1"/><rect x="252" y="156" width="1" height="1"/><rect x="252" y="157" width="1" height="1"/><rect x="252" y="158" width="1" height="1"/><rect x="252" y="159" width="1" height="1"/><rect x="253" y="154" width="1" height="1"/><rect x="253" y="155" width="1" height="1"/><rect x="253" y="156" width="1" height="1"/><rect x="253" y="157" width="1" height="1"/><rect x="253" y="158" width="1" height="1"/><rect x="254" y="157" width="1" height="1"/><rect x="254" y="158" width="1" height="1"/></g><rect x="250" y="155" width="3" height="3" fill="#d0ffd0"/><rect x="250" y="156" width="3" height="1" fill="#fff"/><rect x="251" y="155" width="1" height="3" fill="#fff"/><rect x="249" y="155" width="5" height="3" fill="#80ff80" opacity="0.5"/><rect x="250" y="154" width="3" height="5" fill="#80ff80" opacity="0.5"/><rect x="250" y="155" width="3" height="3" fill="#e4ffe4"/><rect x="250" y="156" width="3" height="1" fill="#fff"/><rect x="251" y="155" width="1" height="3" fill="#fff"/><g fill="#00ff00"><rect x="247" y="127" width="1" height="1"/><rect x="249" y="126" width="1" height="1"/><rect x="249" y="127" width="1" height="1"/><rect x="249" y="128" width="1" height="1"/><rect x="249" y="129" width="1" height="1"/><rect x="249" y="130" width="1" height="1"/><rect x="249" y="131" width="1" height="1"/><rect x="249" y="132" width="1" height="1"/><rect x="250" y="127" width="1" height="1"/><rect x="250" y="128" width="1" height="1"/><rect x="250" y="129" width="1" height="1"/><rect x="250" y="130" width="1" height="1"/><rect x="250" y="131" width="1" height="1"/><rect x="250" y="132" width="1" height="1"/><rect x="251" y="126" width="1" height="1"/><rect x="251" y="127" width="1" height="1"/><rect x="251" y="128" width="1" height="1"/><rect x="251" y="129" width="1" height="1"/><rect x="251" y="130" width="1" height="1"/><rect x="251" y="131" width="1" height="1"/><rect x="252" y="126" width="1" height="1"/><rect x="252" y="127" width="1" height="1"/><rect x="252" y="128" width="1" height="1"/><rect x="252" y="129" width="1" height="1"/><rect x="252" y="130" width="1" height="1"/><rect x="252" y="131" width="1" height="1"/><rect x="253" y="126" width="1" height="1"/><rect x="253" y="127" width="1" height="1"/><rect x="253" y="128" width="1" height="1"/><rect x="253" y="129" width="1" height="1"/><rect x="253" y="130" width="1" height="1"/><rect x="253" y="131" width="1" height="1"/><rect x="253" y="132" width="1" height="1"/><rect x="254" y="128" width="1" height="1"/></g><rect x="250" y="128" width="3" height="3" fill="#d0ffd0"/><rect x="250" y="129" width="3" height="1" fill="#fff"/><rect x="251" y="128" width="1" height="3" fill="#fff"/><rect x="249" y="128" width="5" height="3" fill="#80ff80" opacity="0.5"/><rect x="250" y="127" width="3" height="5" fill="#80ff80" opacity="0.5"/><rect x="250" y="128" width="3" height="3" fill="#e4ffe4"/><rect x="250" y="129" width="3" height="1" fill="#fff"/><rect x="251" y="128" width="1" height="3" fill="#fff"/><g fill="#00ff00"><rect x="248" y="102" width="1" height="1"/><rect x="248" y="103" width="1" height="1"/><rect x="249" y="100" width="1" height="1"/><rect x="249" y="101" width="1" height="1"/><rect x="249" y="102" width="1" height="1"/><rect x="249" y="103" width="1" height="1"/><rect x="249" y="104" width="1" height="1"/><rect x="249" y="105" width="1" height="1"/><rect x="249" y="106" width="1" height="1"/><rect x="250" y="100" width="1" height="1"/><rect x="250" y="101" width="1" height="1"/><rect x="250" y="102" width="1" height="1"/><rect x="250" y="103" width="1" height="1"/><rect x="250" y="104" width="1" height="1"/><rect x="250" y="105" width="1" height="1"/><rect x="251" y="100" width="1" height="1"/><rect x="251" y="101" width="1" height="1"/><rect x="251" y="102" width="1" height="1"/><rect x="251" y="103" width="1" height="1"/><rect x="251" y="104" width="1" height="1"/><rect x="251" y="105" width="1" height="1"/><rect x="252" y="100" width="1" height="1"/><rect x="252" y="101" width="1" height="1"/><rect x="252" y="102" width="1" height="1"/><rect x="252" y="103" width="1" height="1"/><rect x="252" y="104" width="1" height="1"/><rect x="253" y="100" width="1" height="1"/><rect x="253" y="101" width="1" height="1"/><rect x="253" y="102" width="1" height="1"/><rect x="253" y="103" width="1" height="1"/><rect x="253" y="104" width="1" height="1"/><rect x="254" y="103" width="1" height="1"/><rect x="254" y="104" width="1" height="1"/></g><rect x="250" y="101" width="3" height="3" fill="#d0ffd0"/><rect x="250" y="102" width="3" height="1" fill="#fff"/><rect x="251" y="101" width="1" height="3" fill="#fff"/><rect x="249" y="101" width="5" height="3" fill="#80ff80" opacity="0.5"/><rect x="250" y="100" width="3" height="5" fill="#80ff80" opacity="0.5"/><rect x="250" y="101" width="3" height="3" fill="#e4ffe4"/><rect x="250" y="102" width="3" height="1" fill="#fff"/><rect x="251" y="101" width="1" height="3" fill="#fff"/><g fill="#00ff00"><rect x="275" y="290" width="1" height="1"/><rect x="275" y="293" width="1" height="1"/><rect x="276" y="288" width="1" height="1"/><rect x="276" y="289" width="1" height="1"/><rect x="276" y="290" width="1" height="1"/><rect x="276" y="291" width="1" height="1"/><rect x="276" y="292" width="1" height="1"/><rect x="276" y="293" width="1" height="1"/><rect x="276" y="294" width="1" height="1"/><rect x="277" y="288" width="1" height="1"/><rect x="277" y="289" width="1" height="1"/><rect x="277" y="290" width="1" height="1"/><rect x="277" y="291" width="1" height="1"/><rect x="277" y="292" width="1" height="1"/><rect x="277" y="293" width="1" height="1"/><rect x="277" y="294" width="1" height="1"/><rect x="278" y="287" width="1" height="1"/><rect x="278" y="288" width="1" height="1"/><rect x="278" y="289" width="1" height="1"/><rect x="278" y="290" width="1" height="1"/><rect x="278" y="291" width="1" height="1"/><rect x="278" y="292" width="1" height="1"/><rect x="278" y="293" width="1" height="1"/><rect x="279" y="289" width="1" height="1"/><rect x="279" y="290" width="1" height="1"/><rect x="279" y="291" width="1" height="1"/><rect x="279" y="292" width="1" height="1"/><rect x="279" y="293" width="1" height="1"/><rect x="280" y="288" width="1" height="1"/><rect x="280" y="289" width="1" height="1"/><rect x="280" y="290" width="1" height="1"/><rect x="280" y="291" width="1" height="1"/><rect x="280" y="292" width="1" height="1"/><rect x="280" y="293" width="1" height="1"/><rect x="281" y="289" width="1" height="1"/></g><rect x="277" y="290" width="3" height="3" fill="#d0ffd0"/><rect x="277" y="291" width="3" height="1" fill="#fff"/><rect x="278" y="290" width="1" height="3" fill="#fff"/><rect x="276" y="290" width="5" height="3" fill="#80ff80" opacity="0.5"/><rect x="277" y="289" width="3" height="5" fill="#80ff80" opacity="0.5"/><rect x="277" y="290" width="3" height="3" fill="#e4ffe4"/><rect x="277" y="291" width="3" height="1" fill="#fff"/><rect x="278" y="290" width="1" height="3" fill="#fff"/><g fill="#00ff00"><rect x="274" y="266" width="1" height="1"/><rect x="275" y="263" width="1" height="1"/><rect x="276" y="260" width="1" height="1"/><rect x="276" y="262" width="1" height="1"/><rect x="276" y="263" width="1" height="1"/><rect x="276" y="264" width="1" height="1"/><rect x="276" y="265" width="1" height="1"/><rect x="276" y="266" width="1" height="1"/><rect x="276" y="267" width="1" height="1"/><rect x="277" y="261" width="1" height="1"/><rect x="277" y="262" width="1" height="1"/><rect x="277" y="263" width="1" height="1"/><rect x="277" y="264" width="1" height="1"/><rect x="277" y="265" width="1" height="1"/><rect x="277" y="266" width="1" height="1"/><rect x="277" y="267" width="1" height="1"/><rect x="278" y="262" width="1" height="1"/><rect x="278" y="263" width="1" height="1"/><rect x="278" y="264" width="1" height="1"/><rect x="278" y="265" width="1" height="1"/><rect x="278" y="266" width="1" height="1"/><rect x="279" y="262" width="1" height="1"/><rect x="279" y="263" width="1" height="1"/><rect x="279" y="264" width="1" height="1"/><rect x="279" y="265" width="1" height="1"/><rect x="279" y="266" width="1" height="1"/><rect x="280" y="262" width="1" height="1"/><rect x="280" y="263" width="1" height="1"/><rect x="280" y="264" width="1" height="1"/><rect x="280" y="265" width="1" height="1"/><rect x="280" y="266" width="1" height="1"/><rect x="281" y="263" width="1" height="1"/><rect x="281" y="265" width="1" height="1"/></g><rect x="277" y="263" width="3" height="3" fill="#d0ffd0"/><rect x="277" y="264" width="3" height="1" fill="#fff"/><rect x="278" y="263" width="1" height="3" fill="#fff"/><rect x="276" y="263" width="5" height="3" fill="#80ff80" opacity="0.5"/><rect x="277" y="262" width="3" height="5" fill="#80ff80" opacity="0.5"/><rect x="277" y="263" width="3" height="3" fill="#e4ffe4"/><rect x="277" y="264" width="3" height="1" fill="#fff"/><rect x="278" y="263" width="1" height="3" fill="#fff"/><g fill="#00ff00"><rect x="275" y="235" width="1" height="1"/><rect x="275" y="236" width="1" height="1"/><rect x="275" y="237" width="1" height="1"/><rect x="276" y="234" width="1" height="1"/><rect x="276" y="235" width="1" height="1"/><rect x="276" y="236" width="1" height="1"/><rect x="276" y="237" width="1" height="1"/><rect x="276" y="238" width="1" height="1"/><rect x="276" y="239" width="1" height="1"/><rect x="277" y="234" width="1" height="1"/><rect x="277" y="235" width="1" height="1"/><rect x="277" y="236" width="1" height="1"/><rect x="277" y="237" width="1" height="1"/><rect x="277" y="238" width="1" height="1"/><rect x="277" y="239" width="1" height="1"/><rect x="278" y="233" width="1" height="1"/><rect x="278" y="235" width="1" height="1"/><rect x="278" y="236" width="1" height="1"/><rect x="278" y="237" width="1" height="1"/><rect x="278" y="238" width="1" height="1"/><rect x="278" y="239" width="1" height="1"/><rect x="278" y="240" width="1" height="1"/><rect x="279" y="235" width="1" height="1"/><rect x="279" y="236" width="1" height="1"/><rect x="279" y="237" width="1" height="1"/><rect x="279" y="238" width="1" height="1"/><rect x="279" y="239" width="1" height="1"/><rect x="279" y="240" width="1" height="1"/><rect x="280" y="234" width="1" height="1"/><rect x="280" y="235" width="1" height="1"/><rect x="280" y="236" width="1" height="1"/><rect x="280" y="237" width="1" height="1"/><rect x="280" y="238" width="1" height="1"/><rect x="280" y="239" width="1" height="1"/><rect x="281" y="239" width="1" height="1"/></g><rect x="277" y="236" width="3" height="3" fill="#d0ffd0"/><rect x="277" y="237" width="3" height="1" fill="#fff"/><rect x="278" y="236" width="1" height="3" fill="#fff"/><rect x="276" y="236" width="5" height="3" fill="#80ff80" opacity="0.5"/><rect x="277" y="235" width="3" height="5" fill="#80ff80" opacity="0.5"/><rect x="277" y="236" width="3" height="3" fill="#e4ffe4"/><rect x="277" y="237" width="3" height="1" fill="#fff"/><rect x="278" y="236" width="1" height="3" fill="#fff"/><g fill="#00ff00"><rect x="275" y="208" width="1" height="1"/><rect x="276" y="207" width="1" height="1"/><rect x="276" y="208" width="1" height="1"/><rect x="276" y="209" width="1" height="1"/><rect x="276" y="210" width="1" height="1"/><rect x="276" y="211" width="1" height="1"/><rect x="276" y="212" width="1" height="1"/><rect x="277" y="208" width="1" height="1"/><rect x="277" y="209" width="1" height="1"/><rect x="277" y="210" width="1" height="1"/><rect x="277" y="211" width="1" height="1"/><rect x="277" y="212" width="1" height="1"/><rect x="278" y="208" width="1" height="1"/><rect x="278" y="209" width="1" height="1"/><rect x="278" y="210" width="1" height="1"/><rect x="278" y="211" width="1" height="1"/><rect x="278" y="212" width="1" height="1"/><rect x="279" y="207" width="1" height="1"/><rect x="279" y="208" width="1" height="1"/><rect x="279" y="209" width="1" height="1"/><rect x="279" y="210" width="1" height="1"/><rect x="279" y="211" width="1" height="1"/><rect x="279" y="212" width="1" height="1"/><rect x="280" y="208" width="1" height="1"/><rect x="280" y="209" width="1" height="1"/><rect x="280" y="210" width="1" height="1"/><rect x="280" y="211" width="1" height="1"/><rect x="280" y="212" width="1" height="1"/><rect x="280" y="213" width="1" height="1"/><rect x="281" y="207" width="1" height="1"/><rect x="281" y="209" width="1" height="1"/><rect x="281" y="211" width="1" height="1"/><rect x="281" y="212" width="1" height="1"/></g><rect x="277" y="209" width="3" height="3" fill="#d0ffd0"/><rect x="277" y="210" width="3" height="1" fill="#fff"/><rect x="278" y="209" width="1" height="3" fill="#fff"/><rect x="276" y="209" width="5" height="3" fill="#80ff80" opacity="0.5"/><rect x="277" y="208" width="3" height="5" fill="#80ff80" opacity="0.5"/><rect x="277" y="209" width="3" height="3" fill="#e4ffe4"/><rect x="277" y="210" width="3" height="1" fill="#fff"/><rect x="278" y="209" width="1" height="3" fill="#fff"/><g fill="#00ff00"><rect x="275" y="182" width="1" height="1"/><rect x="275" y="184" width="1" height="1"/><rect x="275" y="185" width="1" height="1"/><rect x="276" y="181" width="1" height="1"/><rect x="276" y="182" width="1" height="1"/><rect x="276" y="183" width="1" height="1"/><rect x="276" y="184" width="1" height="1"/><rect x="276" y="185" width="1" height="1"/><rect x="277" y="181" width="1" height="1"/><rect x="277" y="182" width="1" height="1"/><rect x="277" y="183" width="1" height="1"/><rect x="277" y="184" width="1" height="1"/><rect x="277" y="185" width="1" height="1"/><rect x="278" y="181" width="1" height="1"/><rect x="278" y="182" width="1" height="1"/><rect x="278" y="183" width="1" height="1"/><rect x="278" y="184" width="1" height="1"/><rect x="278" y="185" width="1" height="1"/><rect x="278" y="186" width="1" height="1"/><rect x="279" y="181" width="1" height="1"/><rect x="279" y="182" width="1" height="1"/><rect x="279" y="183" width="1" height="1"/><rect x="279" y="184" width="1" height="1"/><rect x="279" y="185" width="1" height="1"/><rect x="280" y="181" width="1" height="1"/><rect x="280" y="182" width="1" height="1"/><rect x="280" y="183" width="1" height="1"/><rect x="280" y="184" width="1" height="1"/><rect x="280" y="185" width="1" height="1"/><rect x="280" y="186" width="1" height="1"/><rect x="281" y="184" width="1" height="1"/></g><rect x="277" y="182" width="3" height="3" fill="#d0ffd0"/><rect x="277" y="183" width="3" height="1" fill="#fff"/><rect x="278" y="182" width="1" height="3" fill="#fff"/><rect x="276" y="182" width="5" height="3" fill="#80ff80" opacity="0.5"/><rect x="277" y="181" width="3" height="5" fill="#80ff80" opacity="0.5"/><rect x="277" y="182" width="3" height="3" fill="#e4ffe4"/><rect x="277" y="183" width="3" height="1" fill="#fff"/><rect x="278" y="182" width="1" height="3" fill="#fff"/><g fill="#00ff00"><rect x="275" y="155" width="1" height="1"/><rect x="276" y="154" width="1" height="1"/><rect x="276" y="155" width="1" height="1"/><rect x="276" y="156" width="1" height="1"/><rect x="276" y="157" width="1" height="1"/><rect x="276" y="158" width="1" height="1"/><rect x="277" y="153" width="1" height="1"/><rect x="277" y="154" width="1" height="1"/><rect x="277" y="155" width="1" height="1"/><rect x="277" y="156" width="1" height="1"/><rect x="277" y="157" width="1" height="1"/><rect x="277" y="158" width="1" height="1"/><rect x="278" y="153" width="1" height="1"/><rect x="278" y="154" width="1" height="1"/><rect x="278" y="155" width="1" height="1"/><rect x="278" y="156" width="1" height="1"/><rect x="278" y="157" width="1" height="1"/><rect x="278" y="158" width="1" height="1"/><rect x="279" y="153" width="1" height="1"/><rect x="279" y="154" width="1" height="1"/><rect x="279" y="155" width="1" height="1"/><rect x="279" y="156" width="1" height="1"/><rect x="279" y="157" width="1" height="1"/><rect x="279" y="158" width="1" height="1"/><rect x="279" y="159" width="1" height="1"/><rect x="280" y="154" width="1" height="1"/><rect x="280" y="155" width="1" height="1"/><rect x="280" y="156" width="1" height="1"/><rect x="280" y="157" width="1" height="1"/><rect x="280" y="158" width="1" height="1"/><rect x="280" y="159" width="1" height="1"/><rect x="281" y="155" width="1" height="1"/><rect x="281" y="157" width="1" height="1"/><rect x="282" y="158" width="1" height="1"/></g><rect x="277" y="155" width="3" height="3" fill="#d0ffd0"/><rect x="277" y="156" width="3" height="1" fill="#fff"/><rect x="278" y="155" width="1" height="3" fill="#fff"/><rect x="276" y="155" width="5" height="3" fill="#80ff80" opacity="0.5"/><rect x="277" y="154" width="3" height="5" fill="#80ff80" opacity="0.5"/><rect x="277" y="155" width="3" height="3" fill="#e4ffe4"/><rect x="277" y="156" width="3" height="1" fill="#fff"/><rect x="278" y="155" width="1" height="3" fill="#fff"/><g fill="#00ff00"><rect x="275" y="127" width="1" height="1"/><rect x="276" y="127" width="1" height="1"/><rect x="276" y="128" width="1" height="1"/><rect x="276" y="129" width="1" height="1"/><rect x="276" y="130" width="1" height="1"/><rect x="276" y="131" width="1" height="1"/><rect x="277" y="127" width="1" height="1"/><rect x="277" y="128" width="1" height="1"/><rect x="277" y="129" width="1" height="1"/><rect x="277" y="130" width="1" height="1"/><rect x="277" y="131" width="1" height="1"/><rect x="278" y="127" width="1" height="1"/><rect x="278" y="128" width="1" height="1"/><rect x="278" y="129" width="1" height="1"/><rect x="278" y="130" width="1" height="1"/><rect x="278" y="131" width="1" height="1"/><rect x="279" y="126" width="1" height="1"/><rect x="279" y="127" width="1" height="1"/><rect x="279" y="128" width="1" height="1"/><rect x="279" y="129" width="1" height="1"/><rect x="279" y="130" width="1" height="1"/><rect x="279" y="131" width="1" height="1"/><rect x="279" y="132" width="1" height="1"/><rect x="280" y="127" width="1" height="1"/><rect x="280" y="128" width="1" height="1"/><rect x="280" y="129" width="1" height="1"/><rect x="280" y="130" width="1" height="1"/><rect x="280" y="131" width="1" height="1"/><rect x="281" y="127" width="1" height="1"/><rect x="281" y="129" width="1" height="1"/><rect x="281" y="131" width="1" height="1"/><rect x="282" y="129" width="1" height="1"/></g><rect x="277" y="128" width="3" height="3" fill="#d0ffd0"/><rect x="277" y="129" width="3" height="1" fill="#fff"/><rect x="278" y="128" width="1" height="3" fill="#fff"/><rect x="276" y="128" width="5" height="3" fill="#80ff80" opacity="0.5"/><rect x="277" y="127" width="3" height="5" fill="#80ff80" opacity="0.5"/><rect x="277" y="128" width="3" height="3" fill="#e4ffe4"/><rect x="277" y="129" width="3" height="1" fill="#fff"/><rect x="278" y="128" width="1" height="3" fill="#fff"/><g fill="#00ff00"><rect x="275" y="100" width="1" height="1"/><rect x="275" y="103" width="1" height="1"/><rect x="276" y="99" width="1" height="1"/><rect x="276" y="100" width="1" height="1"/><rect x="276" y="101" width="1" height="1"/><rect x="276" y="102" width="1" height="1"/><rect x="276" y="103" width="1" height="1"/><rect x="276" y="104" width="1" height="1"/><rect x="277" y="99" width="1" height="1"/><rect x="277" y="100" width="1" height="1"/><rect x="277" y="101" width="1" height="1"/><rect x="277" y="102" width="1" height="1"/><rect x="277" y="103" width="1" height="1"/><rect x="277" y="104" width="1" height="1"/><rect x="278" y="99" width="1" height="1"/><rect x="278" y="100" width="1" height="1"/><rect x="278" y="101" width="1" height="1"/><rect x="278" y="102" width="1" height="1"/><rect x="278" y="103" width="1" height="1"/><rect x="278" y="104" width="1" height="1"/><rect x="278" y="105" width="1" height="1"/><rect x="279" y="100" width="1" height="1"/><rect x="279" y="101" width="1" height="1"/><rect x="279" y="102" width="1" height="1"/><rect x="279" y="103" width="1" height="1"/><rect x="279" y="104" width="1" height="1"/><rect x="279" y="105" width="1" height="1"/><rect x="280" y="100" width="1" height="1"/><rect x="280" y="101" width="1" height="1"/><rect x="280" y="102" width="1" height="1"/><rect x="280" y="103" width="1" height="1"/><rect x="280" y="104" width="1" height="1"/><rect x="281" y="104" width="1" height="1"/></g><rect x="277" y="101" width="3" height="3" fill="#d0ffd0"/><rect x="277" y="102" width="3" height="1" fill="#fff"/><rect x="278" y="101" width="1" height="3" fill="#fff"/><rect x="276" y="101" width="5" height="3" fill="#80ff80" opacity="0.5"/><rect x="277" y="100" width="3" height="5" fill="#80ff80" opacity="0.5"/><rect x="277" y="101" width="3" height="3" fill="#e4ffe4"/><rect x="277" y="102" width="3" height="1" fill="#fff"/><rect x="278" y="101" width="1" height="3" fill="#fff"/><g fill="#00ff00"><rect x="301" y="293" width="1" height="1"/><rect x="302" y="289" width="1" height="1"/><rect x="302" y="290" width="1" height="1"/><rect x="303" y="288" width="1" height="1"/><rect x="303" y="289" width="1" height="1"/><rect x="303" y="290" width="1" height="1"/><rect x="303" y="291" width="1" height="1"/><rect x="303" y="292" width="1" height="1"/><rect x="303" y="293" width="1" height="1"/><rect x="304" y="289" width="1" height="1"/><rect x="304" y="290" width="1" height="1"/><rect x="304" y="291" width="1" height="1"/><rect x="304" y="292" width="1" height="1"/><rect x="304" y="293" width="1" height="1"/><rect x="304" y="294" width="1" height="1"/><rect x="305" y="289" width="1" height="1"/><rect x="305" y="290" width="1" height="1"/><rect x="305" y="291" width="1" height="1"/><rect x="305" y="292" width="1" height="1"/><rect x="305" y="293" width="1" height="1"/><rect x="306" y="289" width="1" height="1"/><rect x="306" y="290" width="1" height="1"/><rect x="306" y="291" width="1" height="1"/><rect x="306" y="292" width="1" height="1"/><rect x="306" y="293" width="1" height="1"/><rect x="307" y="289" width="1" height="1"/><rect x="307" y="290" width="1" height="1"/><rect x="307" y="291" width="1" height="1"/><rect x="307" y="292" width="1" height="1"/><rect x="307" y="293" width="1" height="1"/><rect x="307" y="295" width="1" height="1"/><rect x="308" y="289" width="1" height="1"/><rect x="308" y="290" width="1" height="1"/><rect x="309" y="292" width="1" height="1"/></g><rect x="304" y="290" width="3" height="3" fill="#d0ffd0"/><rect x="304" y="291" width="3" height="1" fill="#fff"/><rect x="305" y="290" width="1" height="3" fill="#fff"/><rect x="303" y="290" width="5" height="3" fill="#80ff80" opacity="0.5"/><rect x="304" y="289" width="3" height="5" fill="#80ff80" opacity="0.5"/><rect x="304" y="290" width="3" height="3" fill="#e4ffe4"/><rect x="304" y="291" width="3" height="1" fill="#fff"/><rect x="305" y="290" width="1" height="3" fill="#fff"/><g fill="#00ff00"><rect x="302" y="263" width="1" height="1"/><rect x="302" y="264" width="1" height="1"/><rect x="302" y="266" width="1" height="1"/><rect x="303" y="261" width="1" height="1"/><rect x="303" y="262" width="1" height="1"/><rect x="303" y="263" width="1" height="1"/><rect x="303" y="264" width="1" height="1"/><rect x="303" y="265" width="1" height="1"/><rect x="303" y="266" width="1" height="1"/><rect x="303" y="267" width="1" height="1"/><rect x="304" y="261" width="1" height="1"/><rect x="304" y="262" width="1" height="1"/><rect x="304" y="263" width="1" height="1"/><rect x="304" y="264" width="1" height="1"/><rect x="304" y="265" width="1" height="1"/><rect x="304" y="266" width="1" height="1"/><rect x="305" y="262" width="1" height="1"/><rect x="305" y="263" width="1" height="1"/><rect x="305" y="264" width="1" height="1"/><rect x="305" y="265" width="1" height="1"/><rect x="305" y="266" width="1" height="1"/><rect x="306" y="260" width="1" height="1"/><rect x="306" y="262" width="1" height="1"/><rect x="306" y="263" width="1" height="1"/><rect x="306" y="264" width="1" height="1"/><rect x="306" y="265" width="1" height="1"/><rect x="306" y="266" width="1" height="1"/><rect x="307" y="262" width="1" height="1"/><rect x="307" y="263" width="1" height="1"/><rect x="307" y="264" width="1" height="1"/><rect x="307" y="265" width="1" height="1"/><rect x="307" y="266" width="1" height="1"/><rect x="307" y="267" width="1" height="1"/><rect x="308" y="262" width="1" height="1"/><rect x="308" y="264" width="1" height="1"/><rect x="308" y="265" width="1" height="1"/><rect x="309" y="265" width="1" height="1"/></g><rect x="304" y="263" width="3" height="3" fill="#d0ffd0"/><rect x="304" y="264" width="3" height="1" fill="#fff"/><rect x="305" y="263" width="1" height="3" fill="#fff"/><rect x="303" y="263" width="5" height="3" fill="#80ff80" opacity="0.5"/><rect x="304" y="262" width="3" height="5" fill="#80ff80" opacity="0.5"/><rect x="304" y="263" width="3" height="3" fill="#e4ffe4"/><rect x="304" y="264" width="3" height="1" fill="#fff"/><rect x="305" y="263" width="1" height="3" fill="#fff"/><g fill="#00ff00"><rect x="302" y="235" width="1" height="1"/><rect x="302" y="238" width="1" height="1"/><rect x="303" y="235" width="1" height="1"/><rect x="303" y="236" width="1" height="1"/><rect x="303" y="237" width="1" height="1"/><rect x="303" y="238" width="1" height="1"/><rect x="303" y="239" width="1" height="1"/><rect x="304" y="235" width="1" height="1"/><rect x="304" y="236" width="1" height="1"/><rect x="304" y="237" width="1" height="1"/><rect x="304" y="238" width="1" height="1"/><rect x="304" y="239" width="1" height="1"/><rect x="305" y="235" width="1" height="1"/><rect x="305" y="236" width="1" height="1"/><rect x="305" y="237" width="1" height="1"/><rect x="305" y="238" width="1" height="1"/><rect x="305" y="239" width="1" height="1"/><rect x="306" y="235" width="1" height="1"/><rect x="306" y="236" width="1" height="1"/><rect x="306" y="237" width="1" height="1"/><rect x="306" y="238" width="1" height="1"/><rect x="306" y="239" width="1" height="1"/><rect x="307" y="234" width="1" height="1"/><rect x="307" y="235" width="1" height="1"/><rect x="307" y="236" width="1" height="1"/><rect x="307" y="237" width="1" height="1"/><rect x="307" y="238" width="1" height="1"/><rect x="307" y="239" width="1" height="1"/><rect x="307" y="240" width="1" height="1"/><rect x="308" y="235" width="1" height="1"/><rect x="308" y="236" width="1" height="1"/></g><rect x="304" y="236" width="3" height="3" fill="#d0ffd0"/><rect x="304" y="237" width="3" height="1" fill="#fff"/><rect x="305" y="236" width="1" height="3" fill="#fff"/><rect x="303" y="236" width="5" height="3" fill="#80ff80" opacity="0.5"/><rect x="304" y="235" width="3" height="5" fill="#80ff80" opacity="0.5"/><rect x="304" y="236" width="3" height="3" fill="#e4ffe4"/><rect x="304" y="237" width="3" height="1" fill="#fff"/><rect x="305" y="236" width="1" height="3" fill="#fff"/><g fill="#00ff00"><rect x="302" y="208" width="1" height="1"/><rect x="302" y="210" width="1" height="1"/><rect x="303" y="208" width="1" height="1"/><rect x="303" y="209" width="1" height="1"/><rect x="303" y="210" width="1" height="1"/><rect x="303" y="211" width="1" height="1"/><rect x="303" y="212" width="1" height="1"/><rect x="303" y="213" width="1" height="1"/><rect x="304" y="207" width="1" height="1"/><rect x="304" y="208" width="1" height="1"/><rect x="304" y="209" width="1" height="1"/><rect x="304" y="210" width="1" height="1"/><rect x="304" y="211" width="1" height="1"/><rect x="304" y="212" width="1" height="1"/><rect x="305" y="208" width="1" height="1"/><rect x="305" y="209" width="1" height="1"/><rect x="305" y="210" width="1" height="1"/><rect x="305" y="211" width="1" height="1"/><rect x="305" y="212" width="1" height="1"/><rect x="305" y="213" width="1" height="1"/><rect x="306" y="208" width="1" height="1"/><rect x="306" y="209" width="1" height="1"/><rect x="306" y="210" width="1" height="1"/><rect x="306" y="211" width="1" height="1"/><rect x="306" y="212" width="1" height="1"/><rect x="306" y="213" width="1" height="1"/><rect x="307" y="207" width="1" height="1"/><rect x="307" y="208" width="1" height="1"/><rect x="307" y="209" width="1" height="1"/><rect x="307" y="210" width="1" height="1"/><rect x="307" y="211" width="1" height="1"/><rect x="307" y="212" width="1" height="1"/><rect x="308" y="209" width="1" height="1"/></g><rect x="304" y="209" width="3" height="3" fill="#d0ffd0"/><rect x="304" y="210" width="3" height="1" fill="#fff"/><rect x="305" y="209" width="1" height="3" fill="#fff"/><rect x="303" y="209" width="5" height="3" fill="#80ff80" opacity="0.5"/><rect x="304" y="208" width="3" height="5" fill="#80ff80" opacity="0.5"/><rect x="304" y="209" width="3" height="3" fill="#e4ffe4"/><rect x="304" y="210" width="3" height="1" fill="#fff"/><rect x="305" y="209" width="1" height="3" fill="#fff"/><g fill="#00ff00"><rect x="302" y="180" width="1" height="1"/><rect x="302" y="182" width="1" height="1"/><rect x="302" y="183" width="1" height="1"/><rect x="302" y="184" width="1" height="1"/><rect x="303" y="181" width="1" height="1"/><rect x="303" y="182" width="1" height="1"/><rect x="303" y="183" width="1" height="1"/><rect x="303" y="184" width="1" height="1"/><rect x="303" y="185" width="1" height="1"/><rect x="303" y="186" width="1" height="1"/><rect x="304" y="180" width="1" height="1"/><rect x="304" y="181" width="1" height="1"/><rect x="304" y="182" width="1" height="1"/><rect x="304" y="183" width="1" height="1"/><rect x="304" y="184" width="1" height="1"/><rect x="304" y="185" width="1" height="1"/><rect x="305" y="180" width="1" height="1"/><rect x="305" y="181" width="1" height="1"/><rect x="305" y="182" width="1" height="1"/><rect x="305" y="183" width="1" height="1"/><rect x="305" y="184" width="1" height="1"/><rect x="305" y="185" width="1" height="1"/><rect x="305" y="186" width="1" height="1"/><rect x="306" y="180" width="1" height="1"/><rect x="306" y="181" width="1" height="1"/><rect x="306" y="182" width="1" height="1"/><rect x="306" y="183" width="1" height="1"/><rect x="306" y="184" width="1" height="1"/><rect x="306" y="185" width="1" height="1"/><rect x="306" y="186" width="1" height="1"/><rect x="307" y="180" width="1" height="1"/><rect x="307" y="181" width="1" height="1"/><rect x="307" y="182" width="1" height="1"/><rect x="307" y="183" width="1" height="1"/><rect x="307" y="184" width="1" height="1"/><rect x="307" y="185" width="1" height="1"/><rect x="308" y="182" width="1" height="1"/><rect x="308" y="183" width="1" height="1"/><rect x="308" y="184" width="1" height="1"/><rect x="309" y="181" width="1" height="1"/></g><rect x="304" y="182" width="3" height="3" fill="#d0ffd0"/><rect x="304" y="183" width="3" height="1" fill="#fff"/><rect x="305" y="182" width="1" height="3" fill="#fff"/><rect x="303" y="182" width="5" height="3" fill="#80ff80" opacity="0.5"/><rect x="304" y="181" width="3" height="5" fill="#80ff80" opacity="0.5"/><rect x="304" y="182" width="3" height="3" fill="#e4ffe4"/><rect x="304" y="183" width="3" height="1" fill="#fff"/><rect x="305" y="182" width="1" height="3" fill="#fff"/><g fill="#00ff00"><rect x="302" y="155" width="1" height="1"/><rect x="302" y="156" width="1" height="1"/><rect x="302" y="158" width="1" height="1"/><rect x="302" y="159" width="1" height="1"/><rect x="303" y="154" width="1" height="1"/><rect x="303" y="155" width="1" height="1"/><rect x="303" y="156" width="1" height="1"/><rect x="303" y="157" width="1" height="1"/><rect x="303" y="158" width="1" height="1"/><rect x="303" y="159" width="1" height="1"/><rect x="304" y="154" width="1" height="1"/><rect x="304" y="155" width="1" height="1"/><rect x="304" y="156" width="1" height="1"/><rect x="304" y="157" width="1" height="1"/><rect x="304" y="158" width="1" height="1"/><rect x="305" y="154" width="1" height="1"/><rect x="305" y="155" width="1" height="1"/><rect x="305" y="156" width="1" height="1"/><rect x="305" y="157" width="1" height="1"/><rect x="305" y="158" width="1" height="1"/><rect x="305" y="160" width="1" height="1"/><rect x="306" y="154" width="1" height="1"/><rect x="306" y="155" width="1" height="1"/><rect x="306" y="156" width="1" height="1"/><rect x="306" y="157" width="1" height="1"/><rect x="306" y="158" width="1" height="1"/><rect x="307" y="153" width="1" height="1"/><rect x="307" y="154" width="1" height="1"/><rect x="307" y="155" width="1" height="1"/><rect x="307" y="156" width="1" height="1"/><rect x="307" y="157" width="1" height="1"/><rect x="307" y="158" width="1" height="1"/><rect x="308" y="154" width="1" height="1"/><rect x="308" y="158" width="1" height="1"/></g><rect x="304" y="155" width="3" height="3" fill="#d0ffd0"/><rect x="304" y="156" width="3" height="1" fill="#fff"/><rect x="305" y="155" width="1" height="3" fill="#fff"/><rect x="303" y="155" width="5" height="3" fill="#80ff80" opacity="0.5"/><rect x="304" y="154" width="3" height="5" fill="#80ff80" opacity="0.5"/><rect x="304" y="155" width="3" height="3" fill="#e4ffe4"/><rect x="304" y="156" width="3" height="1" fill="#fff"/><rect x="305" y="155" width="1" height="3" fill="#fff"/><g fill="#00ff00"><rect x="302" y="128" width="1" height="1"/><rect x="302" y="129" width="1" height="1"/><rect x="302" y="131" width="1" height="1"/><rect x="303" y="126" width="1" height="1"/><rect x="303" y="127" width="1" height="1"/><rect x="303" y="128" width="1" height="1"/><rect x="303" y="129" width="1" height="1"/><rect x="303" y="130" width="1" height="1"/><rect x="303" y="131" width="1" height="1"/><rect x="304" y="127" width="1" height="1"/><rect x="304" y="128" width="1" height="1"/><rect x="304" y="129" width="1" height="1"/><rect x="304" y="130" width="1" height="1"/><rect x="304" y="131" width="1" height="1"/><rect x="305" y="125" width="1" height="1"/><rect x="305" y="127" width="1" height="1"/><rect x="305" y="128" width="1" height="1"/><rect x="305" y="129" width="1" height="1"/><rect x="305" y="130" width="1" height="1"/><rect x="305" y="131" width="1" height="1"/><rect x="305" y="132" width="1" height="1"/><rect x="306" y="127" width="1" height="1"/><rect x="306" y="128" width="1" height="1"/><rect x="306" y="129" width="1" height="1"/><rect x="306" y="130" width="1" height="1"/><rect x="306" y="131" width="1" height="1"/><rect x="307" y="126" width="1" height="1"/><rect x="307" y="127" width="1" height="1"/><rect x="307" y="128" width="1" height="1"/><rect x="307" y="129" width="1" height="1"/><rect x="307" y="130" width="1" height="1"/><rect x="307" y="131" width="1" height="1"/><rect x="308" y="128" width="1" height="1"/><rect x="308" y="129" width="1" height="1"/><rect x="308" y="130" width="1" height="1"/><rect x="308" y="131" width="1" height="1"/><rect x="309" y="128" width="1" height="1"/></g><rect x="304" y="128" width="3" height="3" fill="#d0ffd0"/><rect x="304" y="129" width="3" height="1" fill="#fff"/><rect x="305" y="128" width="1" height="3" fill="#fff"/><rect x="303" y="128" width="5" height="3" fill="#80ff80" opacity="0.5"/><rect x="304" y="127" width="3" height="5" fill="#80ff80" opacity="0.5"/><rect x="304" y="128" width="3" height="3" fill="#e4ffe4"/><rect x="304" y="129" width="3" height="1" fill="#fff"/><rect x="305" y="128" width="1" height="3" fill="#fff"/><g fill="#00ff00"><rect x="302" y="100" width="1" height="1"/><rect x="302" y="102" width="1" height="1"/><rect x="302" y="104" width="1" height="1"/><rect x="302" y="105" width="1" height="1"/><rect x="303" y="99" width="1" height="1"/><rect x="303" y="100" width="1" height="1"/><rect x="303" y="101" width="1" height="1"/><rect x="303" y="102" width="1" height="1"/><rect x="303" y="103" width="1" height="1"/><rect x="303" y="104" width="1" height="1"/><rect x="303" y="105" width="1" height="1"/><rect x="304" y="100" width="1" height="1"/><rect x="304" y="101" width="1" height="1"/><rect x="304" y="102" width="1" height="1"/><rect x="304" y="103" width="1" height="1"/><rect x="304" y="104" width="1" height="1"/><rect x="305" y="99" width="1" height="1"/><rect x="305" y="100" width="1" height="1"/><rect x="305" y="101" width="1" height="1"/><rect x="305" y="102" width="1" height="1"/><rect x="305" y="103" width="1" height="1"/><rect x="305" y="104" width="1" height="1"/><rect x="306" y="99" width="1" height="1"/><rect x="306" y="100" width="1" height="1"/><rect x="306" y="101" width="1" height="1"/><rect x="306" y="102" width="1" height="1"/><rect x="306" y="103" width="1" height="1"/><rect x="306" y="104" width="1" height="1"/><rect x="307" y="100" width="1" height="1"/><rect x="307" y="101" width="1" height="1"/><rect x="307" y="102" width="1" height="1"/><rect x="307" y="103" width="1" height="1"/><rect x="307" y="104" width="1" height="1"/><rect x="307" y="105" width="1" height="1"/><rect x="308" y="100" width="1" height="1"/><rect x="308" y="103" width="1" height="1"/><rect x="308" y="104" width="1" height="1"/></g><rect x="304" y="101" width="3" height="3" fill="#d0ffd0"/><rect x="304" y="102" width="3" height="1" fill="#fff"/><rect x="305" y="101" width="1" height="3" fill="#fff"/><rect x="303" y="101" width="5" height="3" fill="#80ff80" opacity="0.5"/><rect x="304" y="100" width="3" height="5" fill="#80ff80" opacity="0.5"/><rect x="304" y="101" width="3" height="3" fill="#e4ffe4"/><rect x="304" y="102" width="3" height="1" fill="#fff"/><rect x="305" y="101" width="1" height="3" fill="#fff"/><g fill="#00ff00"><rect x="329" y="289" width="1" height="1"/><rect x="329" y="290" width="1" height="1"/><rect x="329" y="292" width="1" height="1"/><rect x="329" y="293" width="1" height="1"/><rect x="330" y="289" width="1" height="1"/><rect x="330" y="290" width="1" height="1"/><rect x="330" y="291" width="1" height="1"/><rect x="330" y="292" width="1" height="1"/><rect x="330" y="293" width="1" height="1"/><rect x="330" y="294" width="1" height="1"/><rect x="331" y="288" width="1" height="1"/><rect x="331" y="289" width="1" height="1"/><rect x="331" y="290" width="1" height="1"/><rect x="331" y="291" width="1" height="1"/><rect x="331" y="292" width="1" height="1"/><rect x="331" y="293" width="1" height="1"/><rect x="332" y="289" width="1" height="1"/><rect x="332" y="290" width="1" height="1"/><rect x="332" y="291" width="1" height="1"/><rect x="332" y="292" width="1" height="1"/><rect x="332" y="293" width="1" height="1"/><rect x="332" y="294" width="1" height="1"/><rect x="333" y="289" width="1" height="1"/><rect x="333" y="290" width="1" height="1"/><rect x="333" y="291" width="1" height="1"/><rect x="333" y="292" width="1" height="1"/><rect x="333" y="293" width="1" height="1"/><rect x="334" y="289" width="1" height="1"/><rect x="334" y="290" width="1" height="1"/><rect x="334" y="291" width="1" height="1"/><rect x="334" y="292" width="1" height="1"/><rect x="334" y="293" width="1" height="1"/><rect x="335" y="292" width="1" height="1"/><rect x="335" y="293" width="1" height="1"/><rect x="336" y="289" width="1" height="1"/></g><rect x="331" y="290" width="3" height="3" fill="#d0ffd0"/><rect x="331" y="291" width="3" height="1" fill="#fff"/><rect x="332" y="290" width="1" height="3" fill="#fff"/><rect x="330" y="290" width="5" height="3" fill="#80ff80" opacity="0.5"/><rect x="331" y="289" width="3" height="5" fill="#80ff80" opacity="0.5"/><rect x="331" y="290" width="3" height="3" fill="#e4ffe4"/><rect x="331" y="291" width="3" height="1" fill="#fff"/><rect x="332" y="290" width="1" height="3" fill="#fff"/><g fill="#00ff00"><rect x="329" y="262" width="1" height="1"/><rect x="329" y="264" width="1" height="1"/><rect x="329" y="265" width="1" height="1"/><rect x="330" y="260" width="1" height="1"/><rect x="330" y="262" width="1" height="1"/><rect x="330" y="263" width="1" height="1"/><rect x="330" y="264" width="1" height="1"/><rect x="330" y="265" width="1" height="1"/><rect x="330" y="266" width="1" height="1"/><rect x="330" y="267" width="1" height="1"/><rect x="331" y="262" width="1" height="1"/><rect x="331" y="263" width="1" height="1"/><rect x="331" y="264" width="1" height="1"/><rect x="331" y="265" width="1" height="1"/><rect x="331" y="266" width="1" height="1"/><rect x="331" y="267" width="1" height="1"/><rect x="332" y="262" width="1" height="1"/><rect x="332" y="263" width="1" height="1"/><rect x="332" y="264" width="1" height="1"/><rect x="332" y="265" width="1" height="1"/><rect x="332" y="266" width="1" height="1"/><rect x="333" y="262" width="1" height="1"/><rect x="333" y="263" width="1" height="1"/><rect x="333" y="264" width="1" height="1"/><rect x="333" y="265" width="1" height="1"/><rect x="333" y="266" width="1" height="1"/><rect x="334" y="262" width="1" height="1"/><rect x="334" y="263" width="1" height="1"/><rect x="334" y="264" width="1" height="1"/><rect x="334" y="265" width="1" height="1"/><rect x="334" y="266" width="1" height="1"/><rect x="335" y="262" width="1" height="1"/><rect x="335" y="263" width="1" height="1"/><rect x="335" y="264" width="1" height="1"/><rect x="335" y="265" width="1" height="1"/><rect x="335" y="266" width="1" height="1"/></g><rect x="331" y="263" width="3" height="3" fill="#d0ffd0"/><rect x="331" y="264" width="3" height="1" fill="#fff"/><rect x="332" y="263" width="1" height="3" fill="#fff"/><rect x="330" y="263" width="5" height="3" fill="#80ff80" opacity="0.5"/><rect x="331" y="262" width="3" height="5" fill="#80ff80" opacity="0.5"/><rect x="331" y="263" width="3" height="3" fill="#e4ffe4"/><rect x="331" y="264" width="3" height="1" fill="#fff"/><rect x="332" y="263" width="1" height="3" fill="#fff"/><g fill="#00ff00"><rect x="329" y="238" width="1" height="1"/><rect x="329" y="239" width="1" height="1"/><rect x="330" y="234" width="1" height="1"/><rect x="330" y="235" width="1" height="1"/><rect x="330" y="236" width="1" height="1"/><rect x="330" y="237" width="1" height="1"/><rect x="330" y="238" width="1" height="1"/><rect x="330" y="239" width="1" height="1"/><rect x="330" y="240" width="1" height="1"/><rect x="330" y="241" width="1" height="1"/><rect x="331" y="235" width="1" height="1"/><rect x="331" y="236" width="1" height="1"/><rect x="331" y="237" width="1" height="1"/><rect x="331" y="238" width="1" height="1"/><rect x="331" y="239" width="1" height="1"/><rect x="332" y="233" width="1" height="1"/><rect x="332" y="234" width="1" height="1"/><rect x="332" y="235" width="1" height="1"/><rect x="332" y="236" width="1" height="1"/><rect x="332" y="237" width="1" height="1"/><rect x="332" y="238" width="1" height="1"/><rect x="332" y="239" width="1" height="1"/><rect x="333" y="234" width="1" height="1"/><rect x="333" y="235" width="1" height="1"/><rect x="333" y="236" width="1" height="1"/><rect x="333" y="237" width="1" height="1"/><rect x="333" y="238" width="1" height="1"/><rect x="333" y="239" width="1" height="1"/><rect x="333" y="240" width="1" height="1"/><rect x="334" y="234" width="1" height="1"/><rect x="334" y="235" width="1" height="1"/><rect x="334" y="236" width="1" height="1"/><rect x="334" y="237" width="1" height="1"/><rect x="334" y="238" width="1" height="1"/><rect x="334" y="239" width="1" height="1"/><rect x="335" y="236" width="1" height="1"/><rect x="335" y="237" width="1" height="1"/><rect x="335" y="239" width="1" height="1"/></g><rect x="331" y="236" width="3" height="3" fill="#d0ffd0"/><rect x="331" y="237" width="3" height="1" fill="#fff"/><rect x="332" y="236" width="1" height="3" fill="#fff"/><rect x="330" y="236" width="5" height="3" fill="#80ff80" opacity="0.5"/><rect x="331" y="235" width="3" height="5" fill="#80ff80" opacity="0.5"/><rect x="331" y="236" width="3" height="3" fill="#e4ffe4"/><rect x="331" y="237" width="3" height="1" fill="#fff"/><rect x="332" y="236" width="1" height="3" fill="#fff"/><g fill="#00ff00"><rect x="329" y="208" width="1" height="1"/><rect x="329" y="211" width="1" height="1"/><rect x="329" y="212" width="1" height="1"/><rect x="330" y="207" width="1" height="1"/><rect x="330" y="208" width="1" height="1"/><rect x="330" y="209" width="1" height="1"/><rect x="330" y="210" width="1" height="1"/><rect x="330" y="211" width="1" height="1"/><rect x="330" y="212" width="1" height="1"/><rect x="330" y="213" width="1" height="1"/><rect x="331" y="207" width="1" height="1"/><rect x="331" y="208" width="1" height="1"/><rect x="331" y="209" width="1" height="1"/><rect x="331" y="210" width="1" height="1"/><rect x="331" y="211" width="1" height="1"/><rect x="331" y="212" width="1" height="1"/><rect x="332" y="208" width="1" height="1"/><rect x="332" y="209" width="1" height="1"/><rect x="332" y="210" width="1" height="1"/><rect x="332" y="211" width="1" height="1"/><rect x="332" y="212" width="1" height="1"/><rect x="332" y="213" width="1" height="1"/><rect x="333" y="208" width="1" height="1"/><rect x="333" y="209" width="1" height="1"/><rect x="333" y="210" width="1" height="1"/><rect x="333" y="211" width="1" height="1"/><rect x="333" y="212" width="1" height="1"/><rect x="334" y="207" width="1" height="1"/><rect x="334" y="208" width="1" height="1"/><rect x="334" y="209" width="1" height="1"/><rect x="334" y="210" width="1" height="1"/><rect x="334" y="211" width="1" height="1"/><rect x="334" y="212" width="1" height="1"/><rect x="335" y="208" width="1" height="1"/><rect x="335" y="209" width="1" height="1"/><rect x="335" y="210" width="1" height="1"/></g><rect x="331" y="209" width="3" height="3" fill="#d0ffd0"/><rect x="331" y="210" width="3" height="1" fill="#fff"/><rect x="332" y="209" width="1" height="3" fill="#fff"/><rect x="330" y="209" width="5" height="3" fill="#80ff80" opacity="0.5"/><rect x="331" y="208" width="3" height="5" fill="#80ff80" opacity="0.5"/><rect x="331" y="209" width="3" height="3" fill="#e4ffe4"/><rect x="331" y="210" width="3" height="1" fill="#fff"/><rect x="332" y="209" width="1" height="3" fill="#fff"/><g fill="#00ff00"><rect x="329" y="185" width="1" height="1"/><rect x="329" y="186" width="1" height="1"/><rect x="330" y="181" width="1" height="1"/><rect x="330" y="182" width="1" height="1"/><rect x="330" y="183" width="1" height="1"/><rect x="330" y="184" width="1" height="1"/><rect x="330" y="185" width="1" height="1"/><rect x="331" y="180" width="1" height="1"/><rect x="331" y="181" width="1" height="1"/><rect x="331" y="182" width="1" height="1"/><rect x="331" y="183" width="1" height="1"/><rect x="331" y="184" width="1" height="1"/><rect x="331" y="185" width="1" height="1"/><rect x="331" y="186" width="1" height="1"/><rect x="332" y="180" width="1" height="1"/><rect x="332" y="181" width="1" height="1"/><rect x="332" y="182" width="1" height="1"/><rect x="332" y="183" width="1" height="1"/><rect x="332" y="184" width="1" height="1"/><rect x="332" y="185" width="1" height="1"/><rect x="332" y="186" width="1" height="1"/><rect x="333" y="180" width="1" height="1"/><rect x="333" y="181" width="1" height="1"/><rect x="333" y="182" width="1" height="1"/><rect x="333" y="183" width="1" height="1"/><rect x="333" y="184" width="1" height="1"/><rect x="333" y="185" width="1" height="1"/><rect x="333" y="186" width="1" height="1"/><rect x="334" y="180" width="1" height="1"/><rect x="334" y="181" width="1" height="1"/><rect x="334" y="182" width="1" height="1"/><rect x="334" y="183" width="1" height="1"/><rect x="334" y="184" width="1" height="1"/><rect x="334" y="185" width="1" height="1"/><rect x="335" y="181" width="1" height="1"/><rect x="335" y="183" width="1" height="1"/><rect x="336" y="182" width="1" height="1"/><rect x="336" y="185" width="1" height="1"/></g><rect x="331" y="182" width="3" height="3" fill="#d0ffd0"/><rect x="331" y="183" width="3" height="1" fill="#fff"/><rect x="332" y="182" width="1" height="3" fill="#fff"/><rect x="330" y="182" width="5" height="3" fill="#80ff80" opacity="0.5"/><rect x="331" y="181" width="3" height="5" fill="#80ff80" opacity="0.5"/><rect x="331" y="182" width="3" height="3" fill="#e4ffe4"/><rect x="331" y="183" width="3" height="1" fill="#fff"/><rect x="332" y="182" width="1" height="3" fill="#fff"/><g fill="#00ff00"><rect x="329" y="155" width="1" height="1"/><rect x="329" y="156" width="1" height="1"/><rect x="329" y="158" width="1" height="1"/><rect x="330" y="153" width="1" height="1"/><rect x="330" y="154" width="1" height="1"/><rect x="330" y="155" width="1" height="1"/><rect x="330" y="156" width="1" height="1"/><rect x="330" y="157" width="1" height="1"/><rect x="330" y="158" width="1" height="1"/><rect x="330" y="159" width="1" height="1"/><rect x="331" y="152" width="1" height="1"/><rect x="331" y="153" width="1" height="1"/><rect x="331" y="154" width="1" height="1"/><rect x="331" y="155" width="1" height="1"/><rect x="331" y="156" width="1" height="1"/><rect x="331" y="157" width="1" height="1"/><rect x="331" y="158" width="1" height="1"/><rect x="331" y="159" width="1" height="1"/><rect x="332" y="153" width="1" height="1"/><rect x="332" y="154" width="1" height="1"/><rect x="332" y="155" width="1" height="1"/><rect x="332" y="156" width="1" height="1"/><rect x="332" y="157" width="1" height="1"/><rect x="332" y="158" width="1" height="1"/><rect x="332" y="159" width="1" height="1"/><rect x="333" y="154" width="1" height="1"/><rect x="333" y="155" width="1" height="1"/><rect x="333" y="156" width="1" height="1"/><rect x="333" y="157" width="1" height="1"/><rect x="333" y="158" width="1" height="1"/><rect x="333" y="159" width="1" height="1"/><rect x="334" y="153" width="1" height="1"/><rect x="334" y="154" width="1" height="1"/><rect x="334" y="155" width="1" height="1"/><rect x="334" y="156" width="1" height="1"/><rect x="334" y="157" width="1" height="1"/><rect x="334" y="158" width="1" height="1"/><rect x="335" y="154" width="1" height="1"/><rect x="335" y="157" width="1" height="1"/><rect x="335" y="158" width="1" height="1"/></g><rect x="331" y="155" width="3" height="3" fill="#d0ffd0"/><rect x="331" y="156" width="3" height="1" fill="#fff"/><rect x="332" y="155" width="1" height="3" fill="#fff"/><rect x="330" y="155" width="5" height="3" fill="#80ff80" opacity="0.5"/><rect x="331" y="154" width="3" height="5" fill="#80ff80" opacity="0.5"/><rect x="331" y="155" width="3" height="3" fill="#e4ffe4"/><rect x="331" y="156" width="3" height="1" fill="#fff"/><rect x="332" y="155" width="1" height="3" fill="#fff"/><g fill="#00ff00"><rect x="329" y="128" width="1" height="1"/><rect x="329" y="129" width="1" height="1"/><rect x="330" y="127" width="1" height="1"/><rect x="330" y="128" width="1" height="1"/><rect x="330" y="129" width="1" height="1"/><rect x="330" y="130" width="1" height="1"/><rect x="330" y="131" width="1" height="1"/><rect x="331" y="127" width="1" height="1"/><rect x="331" y="128" width="1" height="1"/><rect x="331" y="129" width="1" height="1"/><rect x="331" y="130" width="1" height="1"/><rect x="331" y="131" width="1" height="1"/><rect x="332" y="127" width="1" height="1"/><rect x="332" y="128" width="1" height="1"/><rect x="332" y="129" width="1" height="1"/><rect x="332" y="130" width="1" height="1"/><rect x="332" y="131" width="1" height="1"/><rect x="332" y="132" width="1" height="1"/><rect x="333" y="126" width="1" height="1"/><rect x="333" y="127" width="1" height="1"/><rect x="333" y="128" width="1" height="1"/><rect x="333" y="129" width="1" height="1"/><rect x="333" y="130" width="1" height="1"/><rect x="333" y="131" width="1" height="1"/><rect x="333" y="132" width="1" height="1"/><rect x="334" y="127" width="1" height="1"/><rect x="334" y="128" width="1" height="1"/><rect x="334" y="129" width="1" height="1"/><rect x="334" y="130" width="1" height="1"/><rect x="334" y="131" width="1" height="1"/><rect x="334" y="132" width="1" height="1"/><rect x="335" y="127" width="1" height="1"/><rect x="335" y="128" width="1" height="1"/><rect x="335" y="130" width="1" height="1"/></g><rect x="331" y="128" width="3" height="3" fill="#d0ffd0"/><rect x="331" y="129" width="3" height="1" fill="#fff"/><rect x="332" y="128" width="1" height="3" fill="#fff"/><rect x="330" y="128" width="5" height="3" fill="#80ff80" opacity="0.5"/><rect x="331" y="127" width="3" height="5" fill="#80ff80" opacity="0.5"/><rect x="331" y="128" width="3" height="3" fill="#e4ffe4"/><rect x="331" y="129" width="3" height="1" fill="#fff"/><rect x="332" y="128" width="1" height="3" fill="#fff"/><g fill="#00ff00"><rect x="329" y="101" width="1" height="1"/><rect x="329" y="102" width="1" height="1"/><rect x="330" y="100" width="1" height="1"/><rect x="330" y="101" width="1" height="1"/><rect x="330" y="102" width="1" height="1"/><rect x="330" y="103" width="1" height="1"/><rect x="330" y="104" width="1" height="1"/><rect x="330" y="105" width="1" height="1"/><rect x="331" y="99" width="1" height="1"/><rect x="331" y="100" width="1" height="1"/><rect x="331" y="101" width="1" height="1"/><rect x="331" y="102" width="1" height="1"/><rect x="331" y="103" width="1" height="1"/><rect x="331" y="104" width="1" height="1"/><rect x="332" y="99" width="1" height="1"/><rect x="332" y="100" width="1" height="1"/><rect x="332" y="101" width="1" height="1"/><rect x="332" y="102" width="1" height="1"/><rect x="332" y="103" width="1" height="1"/><rect x="332" y="104" width="1" height="1"/><rect x="332" y="105" width="1" height="1"/><rect x="333" y="99" width="1" height="1"/><rect x="333" y="100" width="1" height="1"/><rect x="333" y="101" width="1" height="1"/><rect x="333" y="102" width="1" height="1"/><rect x="333" y="103" width="1" height="1"/><rect x="333" y="104" width="1" height="1"/><rect x="334" y="100" width="1" height="1"/><rect x="334" y="101" width="1" height="1"/><rect x="334" y="102" width="1" height="1"/><rect x="334" y="103" width="1" height="1"/><rect x="334" y="104" width="1" height="1"/><rect x="335" y="102" width="1" height="1"/><rect x="335" y="104" width="1" height="1"/><rect x="335" y="105" width="1" height="1"/></g><rect x="331" y="101" width="3" height="3" fill="#d0ffd0"/><rect x="331" y="102" width="3" height="1" fill="#fff"/><rect x="332" y="101" width="1" height="3" fill="#fff"/><rect x="330" y="101" width="5" height="3" fill="#80ff80" opacity="0.5"/><rect x="331" y="100" width="3" height="5" fill="#80ff80" opacity="0.5"/><rect x="331" y="101" width="3" height="3" fill="#e4ffe4"/><rect x="331" y="102" width="3" height="1" fill="#fff"/><rect x="332" y="101" width="1" height="3" fill="#fff"/><g fill="#00ff00"><rect x="356" y="289" width="1" height="1"/><rect x="356" y="290" width="1" height="1"/><rect x="357" y="288" width="1" height="1"/><rect x="357" y="289" width="1" height="1"/><rect x="357" y="290" width="1" height="1"/><rect x="357" y="291" width="1" height="1"/><rect x="357" y="292" width="1" height="1"/><rect x="357" y="293" width="1" height="1"/><rect x="358" y="288" width="1" height="1"/><rect x="358" y="289" width="1" height="1"/><rect x="358" y="290" width="1" height="1"/><rect x="358" y="291" width="1" height="1"/><rect x="358" y="292" width="1" height="1"/><rect x="358" y="293" width="1" height="1"/><rect x="359" y="289" width="1" height="1"/><rect x="359" y="290" width="1" height="1"/><rect x="359" y="291" width="1" height="1"/><rect x="359" y="292" width="1" height="1"/><rect x="359" y="293" width="1" height="1"/><rect x="360" y="288" width="1" height="1"/><rect x="360" y="289" width="1" height="1"/><rect x="360" y="290" width="1" height="1"/><rect x="360" y="291" width="1" height="1"/><rect x="360" y="292" width="1" height="1"/><rect x="360" y="293" width="1" height="1"/><rect x="360" y="294" width="1" height="1"/><rect x="361" y="288" width="1" height="1"/><rect x="361" y="289" width="1" height="1"/><rect x="361" y="290" width="1" height="1"/><rect x="361" y="291" width="1" height="1"/><rect x="361" y="292" width="1" height="1"/><rect x="361" y="293" width="1" height="1"/><rect x="362" y="290" width="1" height="1"/><rect x="362" y="291" width="1" height="1"/></g><rect x="358" y="290" width="3" height="3" fill="#d0ffd0"/><rect x="358" y="291" width="3" height="1" fill="#fff"/><rect x="359" y="290" width="1" height="3" fill="#fff"/><rect x="357" y="290" width="5" height="3" fill="#80ff80" opacity="0.5"/><rect x="358" y="289" width="3" height="5" fill="#80ff80" opacity="0.5"/><rect x="358" y="290" width="3" height="3" fill="#e4ffe4"/><rect x="358" y="291" width="3" height="1" fill="#fff"/><rect x="359" y="290" width="1" height="3" fill="#fff"/><g fill="#00ff00"><rect x="355" y="264" width="1" height="1"/><rect x="356" y="262" width="1" height="1"/><rect x="356" y="264" width="1" height="1"/><rect x="356" y="265" width="1" height="1"/><rect x="356" y="266" width="1" height="1"/><rect x="357" y="261" width="1" height="1"/><rect x="357" y="262" width="1" height="1"/><rect x="357" y="263" width="1" height="1"/><rect x="357" y="264" width="1" height="1"/><rect x="357" y="265" width="1" height="1"/><rect x="357" y="266" width="1" height="1"/><rect x="358" y="261" width="1" height="1"/><rect x="358" y="262" width="1" height="1"/><rect x="358" y="263" width="1" height="1"/><rect x="358" y="264" width="1" height="1"/><rect x="358" y="265" width="1" height="1"/><rect x="358" y="266" width="1" height="1"/><rect x="359" y="261" width="1" height="1"/><rect x="359" y="262" width="1" height="1"/><rect x="359" y="263" width="1" height="1"/><rect x="359" y="264" width="1" height="1"/><rect x="359" y="265" width="1" height="1"/><rect x="359" y="266" width="1" height="1"/><rect x="359" y="267" width="1" height="1"/><rect x="360" y="262" width="1" height="1"/><rect x="360" y="263" width="1" height="1"/><rect x="360" y="264" width="1" height="1"/><rect x="360" y="265" width="1" height="1"/><rect x="360" y="266" width="1" height="1"/><rect x="360" y="267" width="1" height="1"/><rect x="361" y="262" width="1" height="1"/><rect x="361" y="263" width="1" height="1"/><rect x="361" y="264" width="1" height="1"/><rect x="361" y="265" width="1" height="1"/><rect x="361" y="266" width="1" height="1"/><rect x="362" y="261" width="1" height="1"/><rect x="362" y="264" width="1" height="1"/></g><rect x="358" y="263" width="3" height="3" fill="#d0ffd0"/><rect x="358" y="264" width="3" height="1" fill="#fff"/><rect x="359" y="263" width="1" height="3" fill="#fff"/><rect x="357" y="263" width="5" height="3" fill="#80ff80" opacity="0.5"/><rect x="358" y="262" width="3" height="5" fill="#80ff80" opacity="0.5"/><rect x="358" y="263" width="3" height="3" fill="#e4ffe4"/><rect x="358" y="264" width="3" height="1" fill="#fff"/><rect x="359" y="263" width="1" height="3" fill="#fff"/><g fill="#00ff00"><rect x="355" y="236" width="1" height="1"/><rect x="356" y="235" width="1" height="1"/><rect x="357" y="235" width="1" height="1"/><rect x="357" y="236" width="1" height="1"/><rect x="357" y="237" width="1" height="1"/><rect x="357" y="238" width="1" height="1"/><rect x="357" y="239" width="1" height="1"/><rect x="357" y="240" width="1" height="1"/><rect x="358" y="234" width="1" height="1"/><rect x="358" y="235" width="1" height="1"/><rect x="358" y="236" width="1" height="1"/><rect x="358" y="237" width="1" height="1"/><rect x="358" y="238" width="1" height="1"/><rect x="358" y="239" width="1" height="1"/><rect x="359" y="234" width="1" height="1"/><rect x="359" y="235" width="1" height="1"/><rect x="359" y="236" width="1" height="1"/><rect x="359" y="237" width="1" height="1"/><rect x="359" y="238" width="1" height="1"/><rect x="359" y="239" width="1" height="1"/><rect x="359" y="240" width="1" height="1"/><rect x="359" y="241" width="1" height="1"/><rect x="360" y="234" width="1" height="1"/><rect x="360" y="235" width="1" height="1"/><rect x="360" y="236" width="1" height="1"/><rect x="360" y="237" width="1" height="1"/><rect x="360" y="238" width="1" height="1"/><rect x="360" y="239" width="1" height="1"/><rect x="360" y="240" width="1" height="1"/><rect x="361" y="235" width="1" height="1"/><rect x="361" y="236" width="1" height="1"/><rect x="361" y="237" width="1" height="1"/><rect x="361" y="238" width="1" height="1"/><rect x="361" y="239" width="1" height="1"/><rect x="361" y="240" width="1" height="1"/><rect x="362" y="237" width="1" height="1"/></g><rect x="358" y="236" width="3" height="3" fill="#d0ffd0"/><rect x="358" y="237" width="3" height="1" fill="#fff"/><rect x="359" y="236" width="1" height="3" fill="#fff"/><rect x="357" y="236" width="5" height="3" fill="#80ff80" opacity="0.5"/><rect x="358" y="235" width="3" height="5" fill="#80ff80" opacity="0.5"/><rect x="358" y="236" width="3" height="3" fill="#e4ffe4"/><rect x="358" y="237" width="3" height="1" fill="#fff"/><rect x="359" y="236" width="1" height="3" fill="#fff"/><g fill="#00ff00"><rect x="356" y="208" width="1" height="1"/><rect x="356" y="210" width="1" height="1"/><rect x="356" y="212" width="1" height="1"/><rect x="357" y="208" width="1" height="1"/><rect x="357" y="209" width="1" height="1"/><rect x="357" y="210" width="1" height="1"/><rect x="357" y="211" width="1" height="1"/><rect x="357" y="212" width="1" height="1"/><rect x="357" y="214" width="1" height="1"/><rect x="358" y="206" width="1" height="1"/><rect x="358" y="207" width="1" height="1"/><rect x="358" y="208" width="1" height="1"/><rect x="358" y="209" width="1" height="1"/><rect x="358" y="210" width="1" height="1"/><rect x="358" y="211" width="1" height="1"/><rect x="358" y="212" width="1" height="1"/><rect x="359" y="207" width="1" height="1"/><rect x="359" y="208" width="1" height="1"/><rect x="359" y="209" width="1" height="1"/><rect x="359" y="210" width="1" height="1"/><rect x="359" y="211" width="1" height="1"/><rect x="359" y="212" width="1" height="1"/><rect x="360" y="208" width="1" height="1"/><rect x="360" y="209" width="1" height="1"/><rect x="360" y="210" width="1" height="1"/><rect x="360" y="211" width="1" height="1"/><rect x="360" y="212" width="1" height="1"/><rect x="360" y="213" width="1" height="1"/><rect x="361" y="208" width="1" height="1"/><rect x="361" y="209" width="1" height="1"/><rect x="361" y="210" width="1" height="1"/><rect x="361" y="211" width="1" height="1"/><rect x="361" y="212" width="1" height="1"/><rect x="361" y="213" width="1" height="1"/><rect x="362" y="208" width="1" height="1"/><rect x="362" y="209" width="1" height="1"/><rect x="362" y="211" width="1" height="1"/></g><rect x="358" y="209" width="3" height="3" fill="#d0ffd0"/><rect x="358" y="210" width="3" height="1" fill="#fff"/><rect x="359" y="209" width="1" height="3" fill="#fff"/><rect x="357" y="209" width="5" height="3" fill="#80ff80" opacity="0.5"/><rect x="358" y="208" width="3" height="5" fill="#80ff80" opacity="0.5"/><rect x="358" y="209" width="3" height="3" fill="#e4ffe4"/><rect x="358" y="210" width="3" height="1" fill="#fff"/><rect x="359" y="209" width="1" height="3" fill="#fff"/><g fill="#00ff00"><rect x="356" y="182" width="1" height="1"/><rect x="356" y="184" width="1" height="1"/><rect x="356" y="185" width="1" height="1"/><rect x="357" y="181" width="1" height="1"/><rect x="357" y="182" width="1" height="1"/><rect x="357" y="183" width="1" height="1"/><rect x="357" y="184" width="1" height="1"/><rect x="357" y="185" width="1" height="1"/><rect x="357" y="186" width="1" height="1"/><rect x="358" y="181" width="1" height="1"/><rect x="358" y="182" width="1" height="1"/><rect x="358" y="183" width="1" height="1"/><rect x="358" y="184" width="1" height="1"/><rect x="358" y="185" width="1" height="1"/><rect x="358" y="186" width="1" height="1"/><rect x="359" y="180" width="1" height="1"/><rect x="359" y="181" width="1" height="1"/><rect x="359" y="182" width="1" height="1"/><rect x="359" y="183" width="1" height="1"/><rect x="359" y="184" width="1" height="1"/><rect x="359" y="185" width="1" height="1"/><rect x="359" y="186" width="1" height="1"/><rect x="360" y="181" width="1" height="1"/><rect x="360" y="182" width="1" height="1"/><rect x="360" y="183" width="1" height="1"/><rect x="360" y="184" width="1" height="1"/><rect x="360" y="185" width="1" height="1"/><rect x="361" y="180" width="1" height="1"/><rect x="361" y="181" width="1" height="1"/><rect x="361" y="182" width="1" height="1"/><rect x="361" y="183" width="1" height="1"/><rect x="361" y="184" width="1" height="1"/><rect x="361" y="185" width="1" height="1"/><rect x="362" y="185" width="1" height="1"/><rect x="362" y="186" width="1" height="1"/></g><rect x="358" y="182" width="3" height="3" fill="#d0ffd0"/><rect x="358" y="183" width="3" height="1" fill="#fff"/><rect x="359" y="182" width="1" height="3" fill="#fff"/><rect x="357" y="182" width="5" height="3" fill="#80ff80" opacity="0.5"/><rect x="358" y="181" width="3" height="5" fill="#80ff80" opacity="0.5"/><rect x="358" y="182" width="3" height="3" fill="#e4ffe4"/><rect x="358" y="183" width="3" height="1" fill="#fff"/><rect x="359" y="182" width="1" height="3" fill="#fff"/><g fill="#00ff00"><rect x="357" y="154" width="1" height="1"/><rect x="357" y="155" width="1" height="1"/><rect x="357" y="156" width="1" height="1"/><rect x="357" y="157" width="1" height="1"/><rect x="357" y="158" width="1" height="1"/><rect x="357" y="159" width="1" height="1"/><rect x="358" y="154" width="1" height="1"/><rect x="358" y="155" width="1" height="1"/><rect x="358" y="156" width="1" height="1"/><rect x="358" y="157" width="1" height="1"/><rect x="358" y="158" width="1" height="1"/><rect x="359" y="153" width="1" height="1"/><rect x="359" y="154" width="1" height="1"/><rect x="359" y="155" width="1" height="1"/><rect x="359" y="156" width="1" height="1"/><rect x="359" y="157" width="1" height="1"/><rect x="359" y="158" width="1" height="1"/><rect x="359" y="159" width="1" height="1"/><rect x="360" y="154" width="1" height="1"/><rect x="360" y="155" width="1" height="1"/><rect x="360" y="156" width="1" height="1"/><rect x="360" y="157" width="1" height="1"/><rect x="360" y="158" width="1" height="1"/><rect x="361" y="154" width="1" height="1"/><rect x="361" y="155" width="1" height="1"/><rect x="361" y="156" width="1" height="1"/><rect x="361" y="157" width="1" height="1"/><rect x="361" y="158" width="1" height="1"/><rect x="362" y="158" width="1" height="1"/></g><rect x="358" y="155" width="3" height="3" fill="#d0ffd0"/><rect x="358" y="156" width="3" height="1" fill="#fff"/><rect x="359" y="155" width="1" height="3" fill="#fff"/><rect x="357" y="155" width="5" height="3" fill="#80ff80" opacity="0.5"/><rect x="358" y="154" width="3" height="5" fill="#80ff80" opacity="0.5"/><rect x="358" y="155" width="3" height="3" fill="#e4ffe4"/><rect x="358" y="156" width="3" height="1" fill="#fff"/><rect x="359" y="155" width="1" height="3" fill="#fff"/><g fill="#00ff00"><rect x="356" y="129" width="1" height="1"/><rect x="356" y="130" width="1" height="1"/><rect x="356" y="131" width="1" height="1"/><rect x="357" y="126" width="1" height="1"/><rect x="357" y="127" width="1" height="1"/><rect x="357" y="128" width="1" height="1"/><rect x="357" y="129" width="1" height="1"/><rect x="357" y="130" width="1" height="1"/><rect x="357" y="131" width="1" height="1"/><rect x="358" y="127" width="1" height="1"/><rect x="358" y="128" width="1" height="1"/><rect x="358" y="129" width="1" height="1"/><rect x="358" y="130" width="1" height="1"/><rect x="358" y="131" width="1" height="1"/><rect x="358" y="132" width="1" height="1"/><rect x="359" y="126" width="1" height="1"/><rect x="359" y="127" width="1" height="1"/><rect x="359" y="128" width="1" height="1"/><rect x="359" y="129" width="1" height="1"/><rect x="359" y="130" width="1" height="1"/><rect x="359" y="131" width="1" height="1"/><rect x="359" y="132" width="1" height="1"/><rect x="360" y="127" width="1" height="1"/><rect x="360" y="128" width="1" height="1"/><rect x="360" y="129" width="1" height="1"/><rect x="360" y="130" width="1" height="1"/><rect x="360" y="131" width="1" height="1"/><rect x="360" y="132" width="1" height="1"/><rect x="361" y="126" width="1" height="1"/><rect x="361" y="127" width="1" height="1"/><rect x="361" y="128" width="1" height="1"/><rect x="361" y="129" width="1" height="1"/><rect x="361" y="130" width="1" height="1"/><rect x="361" y="131" width="1" height="1"/><rect x="362" y="127" width="1" height="1"/></g><rect x="358" y="128" width="3" height="3" fill="#d0ffd0"/><rect x="358" y="129" width="3" height="1" fill="#fff"/><rect x="359" y="128" width="1" height="3" fill="#fff"/><rect x="357" y="128" width="5" height="3" fill="#80ff80" opacity="0.5"/><rect x="358" y="127" width="3" height="5" fill="#80ff80" opacity="0.5"/><rect x="358" y="128" width="3" height="3" fill="#e4ffe4"/><rect x="358" y="129" width="3" height="1" fill="#fff"/><rect x="359" y="128" width="1" height="3" fill="#fff"/><g fill="#00ff00"><rect x="356" y="101" width="1" height="1"/><rect x="356" y="104" width="1" height="1"/><rect x="357" y="99" width="1" height="1"/><rect x="357" y="100" width="1" height="1"/><rect x="357" y="101" width="1" height="1"/><rect x="357" y="102" width="1" height="1"/><rect x="357" y="103" width="1" height="1"/><rect x="357" y="104" width="1" height="1"/><rect x="357" y="105" width="1" height="1"/><rect x="358" y="100" width="1" height="1"/><rect x="358" y="101" width="1" height="1"/><rect x="358" y="102" width="1" height="1"/><rect x="358" y="103" width="1" height="1"/><rect x="358" y="104" width="1" height="1"/><rect x="358" y="105" width="1" height="1"/><rect x="359" y="100" width="1" height="1"/><rect x="359" y="101" width="1" height="1"/><rect x="359" y="102" width="1" height="1"/><rect x="359" y="103" width="1" height="1"/><rect x="359" y="104" width="1" height="1"/><rect x="360" y="100" width="1" height="1"/><rect x="360" y="101" width="1" height="1"/><rect x="360" y="102" width="1" height="1"/><rect x="360" y="103" width="1" height="1"/><rect x="360" y="104" width="1" height="1"/><rect x="360" y="105" width="1" height="1"/><rect x="361" y="99" width="1" height="1"/><rect x="361" y="100" width="1" height="1"/><rect x="361" y="101" width="1" height="1"/><rect x="361" y="102" width="1" height="1"/><rect x="361" y="103" width="1" height="1"/><rect x="361" y="104" width="1" height="1"/><rect x="362" y="103" width="1" height="1"/></g><rect x="358" y="101" width="3" height="3" fill="#d0ffd0"/><rect x="358" y="102" width="3" height="1" fill="#fff"/><rect x="359" y="101" width="1" height="3" fill="#fff"/><rect x="357" y="101" width="5" height="3" fill="#80ff80" opacity="0.5"/><rect x="358" y="100" width="3" height="5" fill="#80ff80" opacity="0.5"/><rect x="358" y="101" width="3" height="3" fill="#e4ffe4"/><rect x="358" y="102" width="3" height="1" fill="#fff"/><rect x="359" y="101" width="1" height="3" fill="#fff"/></g>
<rect x="61.8" y="66.5" width="120.4" height="15" fill="#000"/>
<text x="62.8" y="78" font-size="10.67" text-anchor="start" fill="#ffffff" textLength="118.4" lengthAdjust="spacing">LTE:Generic:DL:Cell ID: 1</text>
<rect x="61.8" y="81.5" width="158.2" height="15" fill="#000"/>
<text x="62.8" y="93" font-size="10.67" text-anchor="start" fill="#ffffff" textLength="156.2" lengthAdjust="spacing">PHICH-Sixth-Norm:1Ant:SFN 0x0</text>
<rect x="61.8" y="96.5" width="128.6" height="15" fill="#000"/>
<text x="62.8" y="108" font-size="10.67" text-anchor="start" fill="#ffffff" textLength="126.6" lengthAdjust="spacing">Symbols Analysed: 82684</text>
<rect x="61.8" y="111.5" width="133.4" height="15" fill="#000"/>
<text x="62.8" y="123" font-size="10.67" text-anchor="start" fill="#ffffff" textLength="131.4" lengthAdjust="spacing">EVM All Sym (RMS): 1.32%</text>
<rect x="61.8" y="126.5" width="122.7" height="15" fill="#000"/>
<text x="62.8" y="138" font-size="10.67" text-anchor="start" fill="#ffffff" textLength="120.7" lengthAdjust="spacing">EVM All Sym (Pk): 5.41%</text>
<rect x="61.8" y="141.5" width="72.2" height="15" fill="#000"/>
<text x="62.8" y="153" font-size="10.67" text-anchor="start" fill="#ffffff" textLength="70.2" lengthAdjust="spacing">SNR: 37.56 dB</text>
<rect x="367.6" y="66.5" width="103.3" height="15" fill="#000"/>
<text x="368.6" y="78" font-size="10.67" text-anchor="start" fill="#00ecf4" textLength="101.3" lengthAdjust="spacing">QPSK Symbols: 8000</text>
<rect x="354.6" y="81.5" width="116.3" height="15" fill="#000"/>
<text x="355.6" y="93" font-size="10.67" text-anchor="start" fill="#00ecf4" textLength="114.3" lengthAdjust="spacing">QPSK EVM: 1.22% RMS</text>
<rect x="365.2" y="96.5" width="105.7" height="15" fill="#000"/>
<text x="366.2" y="108" font-size="10.67" text-anchor="start" fill="#00ecf4" textLength="103.7" lengthAdjust="spacing">QPSK EVM: 4.82% Pk</text>
<rect x="352.2" y="111.5" width="118.7" height="15" fill="#000"/>
<text x="353.2" y="123" font-size="10.67" text-anchor="start" fill="#00ecf4" textLength="116.7" lengthAdjust="spacing">64QAM Symbols: 74436</text>
<rect x="345.6" y="126.5" width="125.3" height="15" fill="#000"/>
<text x="346.6" y="138" font-size="10.67" text-anchor="start" fill="#00ecf4" textLength="123.3" lengthAdjust="spacing">64QAM EVM: 1.34% RMS</text>
<rect x="356.6" y="141.5" width="114.3" height="15" fill="#000"/>
<text x="357.6" y="153" font-size="10.67" text-anchor="start" fill="#00ecf4" textLength="112.3" lengthAdjust="spacing">64QAM EVM: 5.44% Pk</text>
<rect x="377.2" y="156.5" width="93.7" height="15" fill="#000"/>
<text x="378.2" y="168" font-size="10.67" text-anchor="start" fill="#00ecf4" textLength="91.7" lengthAdjust="spacing">Freq Err: -0.061 Hz</text>
<rect x="350.5" y="171.5" width="120.4" height="15" fill="#000"/>
<text x="351.5" y="183" font-size="10.67" text-anchor="start" fill="#00ecf4" textLength="118.4" lengthAdjust="spacing">Time Sync: 0.470577 ms</text>
<rect x="365.7" y="186.5" width="105.2" height="15" fill="#000"/>
<text x="366.7" y="198" font-size="10.67" text-anchor="start" fill="#00ecf4" textLength="103.2" lengthAdjust="spacing">IQ Offset: -60.84 dBc</text>
<rect x="370.1" y="201.5" width="100.8" height="15" fill="#000"/>
<text x="371.1" y="213" font-size="10.67" text-anchor="start" fill="#00ecf4" textLength="98.8" lengthAdjust="spacing">IQ Gain Err: -0.01 dB</text>
<rect x="364.4" y="216.5" width="106.5" height="15" fill="#000"/>
<text x="365.4" y="228" font-size="10.67" text-anchor="start" fill="#00ecf4" textLength="104.5" lengthAdjust="spacing">IQ Quad Err: 0.09 deg</text>
<rect x="52" y="62" width="1" height="271" fill="#b8b8b8" />
<rect x="52" y="332" width="427" height="1" fill="#b8b8b8" />
<text transform="translate(49.5,334) scale(0.82,1)" font-size="9" text-anchor="end" fill="#e4e4e4" >-1</text>
<text transform="translate(130.5,343) scale(0.82,1)" font-size="9" text-anchor="middle" fill="#e4e4e4" >-1</text>
<text transform="translate(49.5,307) scale(0.82,1)" font-size="9" text-anchor="end" fill="#e4e4e4" >-0.8</text>
<text transform="translate(157.5,343) scale(0.82,1)" font-size="9" text-anchor="middle" fill="#e4e4e4" >-0.8</text>
<text transform="translate(49.5,280) scale(0.82,1)" font-size="9" text-anchor="end" fill="#e4e4e4" >-0.6</text>
<text transform="translate(184.5,343) scale(0.82,1)" font-size="9" text-anchor="middle" fill="#e4e4e4" >-0.6</text>
<text transform="translate(49.5,253) scale(0.82,1)" font-size="9" text-anchor="end" fill="#e4e4e4" >-0.4</text>
<text transform="translate(211.5,343) scale(0.82,1)" font-size="9" text-anchor="middle" fill="#e4e4e4" >-0.4</text>
<text transform="translate(49.5,226) scale(0.82,1)" font-size="9" text-anchor="end" fill="#e4e4e4" >-0.2</text>
<text transform="translate(238.5,343) scale(0.82,1)" font-size="9" text-anchor="middle" fill="#e4e4e4" >-0.2</text>
<text transform="translate(49.5,199) scale(0.82,1)" font-size="9" text-anchor="end" fill="#e4e4e4" >0.0</text>
<text transform="translate(265.5,343) scale(0.82,1)" font-size="9" text-anchor="middle" fill="#e4e4e4" >0.0</text>
<text transform="translate(49.5,172) scale(0.82,1)" font-size="9" text-anchor="end" fill="#e4e4e4" >0.2</text>
<text transform="translate(292.5,343) scale(0.82,1)" font-size="9" text-anchor="middle" fill="#e4e4e4" >0.2</text>
<text transform="translate(49.5,145) scale(0.82,1)" font-size="9" text-anchor="end" fill="#e4e4e4" >0.4</text>
<text transform="translate(319.5,343) scale(0.82,1)" font-size="9" text-anchor="middle" fill="#e4e4e4" >0.4</text>
<text transform="translate(49.5,118) scale(0.82,1)" font-size="9" text-anchor="end" fill="#e4e4e4" >0.6</text>
<text transform="translate(346.5,343) scale(0.82,1)" font-size="9" text-anchor="middle" fill="#e4e4e4" >0.6</text>
<text transform="translate(49.5,91) scale(0.82,1)" font-size="9" text-anchor="end" fill="#e4e4e4" >0.8</text>
<text transform="translate(373.5,343) scale(0.82,1)" font-size="9" text-anchor="middle" fill="#e4e4e4" >0.8</text>
<text transform="translate(49.5,64) scale(0.82,1)" font-size="9" text-anchor="end" fill="#e4e4e4" >1</text>
<text transform="translate(400.5,343) scale(0.82,1)" font-size="9" text-anchor="middle" fill="#e4e4e4" >1</text>
<text x="0" y="0" font-size="12" text-anchor="middle" fill="#e4e4e4" transform="translate(23,197) rotate(-90)">Q</text>
<text x="265" y="356" font-size="10.67" text-anchor="middle" fill="#e4e4e4" >I</text>
<rect x="534" y="62" width="426" height="271" fill="#000" />
<g shape-rendering="crispEdges">
<rect x="534" y="62" width="427" height="1" fill="#1c1c1c"/>
<line x1="534" y1="62.5" x2="961" y2="62.5" stroke="#5e5e5e" stroke-dasharray="3 3" />
<rect x="534" y="76" width="427" height="1" fill="#1c1c1c"/>
<line x1="534" y1="76.5" x2="961" y2="76.5" stroke="#5e5e5e" stroke-dasharray="3 3" />
<rect x="534" y="89" width="427" height="1" fill="#1c1c1c"/>
<line x1="534" y1="89.5" x2="961" y2="89.5" stroke="#5e5e5e" stroke-dasharray="3 3" />
<rect x="534" y="103" width="427" height="1" fill="#1c1c1c"/>
<line x1="534" y1="103.5" x2="961" y2="103.5" stroke="#5e5e5e" stroke-dasharray="3 3" />
<rect x="534" y="116" width="427" height="1" fill="#1c1c1c"/>
<line x1="534" y1="116.5" x2="961" y2="116.5" stroke="#5e5e5e" stroke-dasharray="3 3" />
<rect x="534" y="130" width="427" height="1" fill="#1c1c1c"/>
<line x1="534" y1="130.5" x2="961" y2="130.5" stroke="#5e5e5e" stroke-dasharray="3 3" />
<rect x="534" y="143" width="427" height="1" fill="#1c1c1c"/>
<line x1="534" y1="143.5" x2="961" y2="143.5" stroke="#5e5e5e" stroke-dasharray="3 3" />
<rect x="534" y="157" width="427" height="1" fill="#1c1c1c"/>
<line x1="534" y1="157.5" x2="961" y2="157.5" stroke="#5e5e5e" stroke-dasharray="3 3" />
<rect x="534" y="170" width="427" height="1" fill="#1c1c1c"/>
<line x1="534" y1="170.5" x2="961" y2="170.5" stroke="#5e5e5e" stroke-dasharray="3 3" />
<rect x="534" y="184" width="427" height="1" fill="#1c1c1c"/>
<line x1="534" y1="184.5" x2="961" y2="184.5" stroke="#5e5e5e" stroke-dasharray="3 3" />
<rect x="534" y="197" width="427" height="1" fill="#1c1c1c"/>
<line x1="534" y1="197.5" x2="961" y2="197.5" stroke="#5e5e5e" stroke-dasharray="3 3" />
<rect x="534" y="211" width="427" height="1" fill="#1c1c1c"/>
<line x1="534" y1="211.5" x2="961" y2="211.5" stroke="#5e5e5e" stroke-dasharray="3 3" />
<rect x="534" y="224" width="427" height="1" fill="#1c1c1c"/>
<line x1="534" y1="224.5" x2="961" y2="224.5" stroke="#5e5e5e" stroke-dasharray="3 3" />
<rect x="534" y="238" width="427" height="1" fill="#1c1c1c"/>
<line x1="534" y1="238.5" x2="961" y2="238.5" stroke="#5e5e5e" stroke-dasharray="3 3" />
<rect x="534" y="251" width="427" height="1" fill="#1c1c1c"/>
<line x1="534" y1="251.5" x2="961" y2="251.5" stroke="#5e5e5e" stroke-dasharray="3 3" />
<rect x="534" y="265" width="427" height="1" fill="#1c1c1c"/>
<line x1="534" y1="265.5" x2="961" y2="265.5" stroke="#5e5e5e" stroke-dasharray="3 3" />
<rect x="534" y="278" width="427" height="1" fill="#1c1c1c"/>
<line x1="534" y1="278.5" x2="961" y2="278.5" stroke="#5e5e5e" stroke-dasharray="3 3" />
<rect x="534" y="292" width="427" height="1" fill="#1c1c1c"/>
<line x1="534" y1="292.5" x2="961" y2="292.5" stroke="#5e5e5e" stroke-dasharray="3 3" />
<rect x="534" y="305" width="427" height="1" fill="#1c1c1c"/>
<line x1="534" y1="305.5" x2="961" y2="305.5" stroke="#5e5e5e" stroke-dasharray="3 3" />
<rect x="534" y="319" width="427" height="1" fill="#1c1c1c"/>
<line x1="534" y1="319.5" x2="961" y2="319.5" stroke="#5e5e5e" stroke-dasharray="3 3" />
<rect x="577" y="62" width="1" height="270" fill="#1c1c1c"/>
<line x1="577.5" y1="62" x2="577.5" y2="332" stroke="#5e5e5e" stroke-dasharray="3 3" stroke-dashoffset="0" />
<rect x="619" y="62" width="1" height="270" fill="#1c1c1c"/>
<line x1="619.5" y1="62" x2="619.5" y2="332" stroke="#5e5e5e" stroke-dasharray="3 3" stroke-dashoffset="0" />
<rect x="662" y="62" width="1" height="270" fill="#1c1c1c"/>
<line x1="662.5" y1="62" x2="662.5" y2="332" stroke="#5e5e5e" stroke-dasharray="3 3" stroke-dashoffset="0" />
<rect x="704" y="62" width="1" height="270" fill="#1c1c1c"/>
<line x1="704.5" y1="62" x2="704.5" y2="332" stroke="#5e5e5e" stroke-dasharray="3 3" stroke-dashoffset="0" />
<rect x="747" y="62" width="1" height="270" fill="#1c1c1c"/>
<line x1="747.5" y1="62" x2="747.5" y2="332" stroke="#5e5e5e" stroke-dasharray="3 3" stroke-dashoffset="0" />
<rect x="790" y="62" width="1" height="270" fill="#1c1c1c"/>
<line x1="790.5" y1="62" x2="790.5" y2="332" stroke="#5e5e5e" stroke-dasharray="3 3" stroke-dashoffset="0" />
<rect x="832" y="62" width="1" height="270" fill="#1c1c1c"/>
<line x1="832.5" y1="62" x2="832.5" y2="332" stroke="#5e5e5e" stroke-dasharray="3 3" stroke-dashoffset="0" />
<rect x="875" y="62" width="1" height="270" fill="#1c1c1c"/>
<line x1="875.5" y1="62" x2="875.5" y2="332" stroke="#5e5e5e" stroke-dasharray="3 3" stroke-dashoffset="0" />
<rect x="917" y="62" width="1" height="270" fill="#1c1c1c"/>
<line x1="917.5" y1="62" x2="917.5" y2="332" stroke="#5e5e5e" stroke-dasharray="3 3" stroke-dashoffset="0" />
<rect x="960" y="62" width="1" height="270" fill="#1c1c1c"/>
<line x1="960.5" y1="62" x2="960.5" y2="332" stroke="#484848" stroke-dasharray="3 3" stroke-dashoffset="0" />
</g>
<g fill="#ff0000" shape-rendering="crispEdges"><rect x="535" y="196" width="1" height="1"/><rect x="536" y="196" width="1" height="1"/><rect x="537" y="196" width="1" height="1"/><rect x="538" y="196" width="1" height="1"/><rect x="539" y="197" width="1" height="1"/><rect x="540" y="197" width="1" height="1"/><rect x="541" y="197" width="1" height="1"/><rect x="542" y="198" width="1" height="1"/><rect x="543" y="198" width="1" height="1"/><rect x="544" y="198" width="1" height="1"/><rect x="545" y="198" width="1" height="1"/><rect x="546" y="198" width="1" height="1"/><rect x="547" y="198" width="1" height="1"/><rect x="548" y="198" width="1" height="1"/><rect x="549" y="198" width="1" height="1"/><rect x="550" y="197" width="1" height="1"/><rect x="551" y="197" width="1" height="1"/><rect x="552" y="196" width="1" height="1"/><rect x="553" y="196" width="1" height="1"/><rect x="554" y="196" width="1" height="1"/><rect x="555" y="196" width="1" height="1"/><rect x="556" y="195" width="1" height="1"/><rect x="557" y="195" width="1" height="1"/><rect x="558" y="195" width="1" height="1"/><rect x="559" y="195" width="1" height="1"/><rect x="560" y="194" width="1" height="1"/><rect x="561" y="194" width="1" height="1"/><rect x="562" y="194" width="1" height="1"/><rect x="563" y="194" width="1" height="1"/><rect x="564" y="194" width="1" height="1"/><rect x="565" y="194" width="1" height="1"/><rect x="566" y="194" width="1" height="1"/><rect x="567" y="194" width="1" height="1"/><rect x="568" y="194" width="1" height="1"/><rect x="569" y="194" width="1" height="1"/><rect x="570" y="194" width="1" height="1"/><rect x="571" y="194" width="1" height="1"/><rect x="572" y="194" width="1" height="1"/><rect x="573" y="194" width="1" height="1"/><rect x="574" y="195" width="1" height="1"/><rect x="575" y="195" width="1" height="1"/><rect x="576" y="196" width="1" height="1"/><rect x="577" y="196" width="1" height="1"/><rect x="578" y="196" width="1" height="1"/><rect x="579" y="197" width="1" height="1"/><rect x="580" y="197" width="1" height="1"/><rect x="581" y="197" width="1" height="1"/><rect x="582" y="197" width="1" height="1"/><rect x="583" y="197" width="1" height="1"/><rect x="584" y="198" width="1" height="1"/><rect x="585" y="198" width="1" height="1"/><rect x="586" y="198" width="1" height="1"/><rect x="587" y="198" width="1" height="1"/><rect x="588" y="198" width="1" height="1"/><rect x="589" y="198" width="1" height="1"/><rect x="590" y="198" width="1" height="1"/><rect x="591" y="198" width="1" height="1"/><rect x="592" y="198" width="1" height="1"/><rect x="593" y="198" width="1" height="1"/><rect x="594" y="198" width="1" height="1"/><rect x="595" y="198" width="1" height="1"/><rect x="596" y="197" width="1" height="1"/><rect x="597" y="197" width="1" height="1"/><rect x="598" y="196" width="1" height="1"/><rect x="599" y="196" width="1" height="1"/><rect x="600" y="196" width="1" height="1"/><rect x="601" y="195" width="1" height="1"/><rect x="602" y="195" width="1" height="1"/><rect x="603" y="195" width="1" height="1"/><rect x="604" y="195" width="1" height="1"/><rect x="605" y="194" width="1" height="1"/><rect x="606" y="194" width="1" height="1"/><rect x="607" y="194" width="1" height="1"/><rect x="608" y="194" width="1" height="1"/><rect x="609" y="194" width="1" height="1"/><rect x="610" y="194" width="1" height="1"/><rect x="611" y="194" width="1" height="1"/><rect x="612" y="194" width="1" height="1"/><rect x="613" y="194" width="1" height="1"/><rect x="614" y="195" width="1" height="1"/><rect x="615" y="195" width="1" height="1"/><rect x="616" y="195" width="1" height="1"/><rect x="617" y="195" width="1" height="1"/><rect x="618" y="196" width="1" height="1"/><rect x="619" y="196" width="1" height="1"/><rect x="620" y="196" width="1" height="1"/><rect x="621" y="196" width="1" height="1"/><rect x="622" y="197" width="1" height="1"/><rect x="623" y="197" width="1" height="1"/><rect x="624" y="198" width="1" height="1"/><rect x="625" y="198" width="1" height="1"/><rect x="626" y="198" width="1" height="1"/><rect x="627" y="198" width="1" height="1"/><rect x="628" y="198" width="1" height="1"/><rect x="629" y="198" width="1" height="1"/><rect x="630" y="198" width="1" height="1"/><rect x="631" y="198" width="1" height="1"/><rect x="632" y="198" width="1" height="1"/><rect x="633" y="198" width="1" height="1"/><rect x="634" y="198" width="1" height="1"/><rect x="635" y="198" width="1" height="1"/><rect x="636" y="198" width="1" height="1"/><rect x="637" y="198" width="1" height="1"/><rect x="638" y="198" width="1" height="1"/><rect x="639" y="197" width="1" height="1"/><rect x="640" y="197" width="1" height="1"/><rect x="641" y="197" width="1" height="1"/><rect x="642" y="196" width="1" height="1"/><rect x="643" y="196" width="1" height="1"/><rect x="644" y="196" width="1" height="1"/><rect x="645" y="196" width="1" height="1"/><rect x="646" y="196" width="1" height="1"/><rect x="647" y="196" width="1" height="1"/><rect x="648" y="195" width="1" height="1"/><rect x="649" y="195" width="1" height="1"/><rect x="650" y="195" width="1" height="1"/><rect x="651" y="195" width="1" height="1"/><rect x="652" y="195" width="1" height="1"/><rect x="653" y="195" width="1" height="1"/><rect x="654" y="195" width="1" height="1"/><rect x="655" y="195" width="1" height="1"/><rect x="656" y="196" width="1" height="1"/><rect x="657" y="196" width="1" height="1"/><rect x="658" y="196" width="1" height="1"/><rect x="659" y="196" width="1" height="1"/><rect x="660" y="196" width="1" height="1"/><rect x="661" y="197" width="1" height="1"/><rect x="662" y="197" width="1" height="1"/><rect x="663" y="197" width="1" height="1"/><rect x="664" y="198" width="1" height="1"/><rect x="665" y="198" width="1" height="1"/><rect x="666" y="198" width="1" height="1"/><rect x="667" y="199" width="1" height="1"/><rect x="668" y="199" width="1" height="1"/><rect x="669" y="199" width="1" height="1"/><rect x="670" y="199" width="1" height="1"/><rect x="671" y="199" width="1" height="1"/><rect x="672" y="199" width="1" height="1"/><rect x="673" y="199" width="1" height="1"/><rect x="674" y="199" width="1" height="1"/><rect x="675" y="199" width="1" height="1"/><rect x="676" y="199" width="1" height="1"/><rect x="677" y="199" width="1" height="1"/><rect x="678" y="199" width="1" height="1"/><rect x="679" y="199" width="1" height="1"/><rect x="680" y="199" width="1" height="1"/><rect x="681" y="199" width="1" height="1"/><rect x="682" y="198" width="1" height="1"/><rect x="683" y="198" width="1" height="1"/><rect x="684" y="197" width="1" height="1"/><rect x="685" y="197" width="1" height="1"/><rect x="686" y="197" width="1" height="1"/><rect x="687" y="197" width="1" height="1"/><rect x="688" y="196" width="1" height="1"/><rect x="689" y="196" width="1" height="1"/><rect x="690" y="196" width="1" height="1"/><rect x="691" y="196" width="1" height="1"/><rect x="692" y="196" width="1" height="1"/><rect x="693" y="195" width="1" height="1"/><rect x="694" y="195" width="1" height="1"/><rect x="695" y="195" width="1" height="1"/><rect x="696" y="195" width="1" height="1"/><rect x="697" y="195" width="1" height="1"/><rect x="698" y="195" width="1" height="1"/><rect x="699" y="196" width="1" height="1"/><rect x="700" y="196" width="1" height="1"/><rect x="701" y="196" width="1" height="1"/><rect x="702" y="196" width="1" height="1"/><rect x="703" y="196" width="1" height="1"/><rect x="704" y="196" width="1" height="1"/><rect x="705" y="197" width="1" height="1"/><rect x="706" y="197" width="1" height="1"/><rect x="707" y="197" width="1" height="1"/><rect x="708" y="197" width="1" height="1"/><rect x="709" y="197" width="1" height="1"/><rect x="710" y="198" width="1" height="1"/><rect x="711" y="198" width="1" height="1"/><rect x="712" y="198" width="1" height="1"/><rect x="713" y="198" width="1" height="1"/><rect x="714" y="198" width="1" height="1"/><rect x="715" y="198" width="1" height="1"/><rect x="716" y="199" width="1" height="1"/><rect x="717" y="199" width="1" height="1"/><rect x="718" y="199" width="1" height="1"/><rect x="719" y="199" width="1" height="1"/><rect x="720" y="199" width="1" height="1"/><rect x="721" y="198" width="1" height="1"/><rect x="722" y="198" width="1" height="1"/><rect x="723" y="198" width="1" height="1"/><rect x="724" y="198" width="1" height="1"/><rect x="725" y="197" width="1" height="1"/><rect x="726" y="197" width="1" height="1"/><rect x="727" y="197" width="1" height="1"/><rect x="728" y="196" width="1" height="1"/><rect x="729" y="196" width="1" height="1"/><rect x="730" y="196" width="1" height="1"/><rect x="731" y="196" width="1" height="1"/><rect x="732" y="196" width="1" height="1"/><rect x="733" y="196" width="1" height="1"/><rect x="734" y="195" width="1" height="1"/><rect x="735" y="195" width="1" height="1"/><rect x="736" y="195" width="1" height="1"/><rect x="737" y="195" width="1" height="1"/><rect x="738" y="195" width="1" height="1"/><rect x="739" y="195" width="1" height="1"/><rect x="740" y="195" width="1" height="1"/><rect x="741" y="196" width="1" height="1"/><rect x="742" y="196" width="1" height="1"/><rect x="743" y="196" width="1" height="1"/><rect x="744" y="196" width="1" height="1"/><rect x="745" y="196" width="1" height="1"/><rect x="746" y="197" width="1" height="1"/><rect x="747" y="197" width="1" height="1"/><rect x="748" y="197" width="1" height="1"/><rect x="749" y="197" width="1" height="1"/><rect x="750" y="197" width="1" height="1"/><rect x="751" y="197" width="1" height="1"/><rect x="752" y="198" width="1" height="1"/><rect x="753" y="198" width="1" height="1"/><rect x="754" y="198" width="1" height="1"/><rect x="755" y="198" width="1" height="1"/><rect x="756" y="198" width="1" height="1"/><rect x="757" y="199" width="1" height="1"/><rect x="758" y="198" width="1" height="1"/><rect x="759" y="198" width="1" height="1"/><rect x="760" y="198" width="1" height="1"/><rect x="761" y="198" width="1" height="1"/><rect x="762" y="198" width="1" height="1"/><rect x="763" y="198" width="1" height="1"/><rect x="764" y="198" width="1" height="1"/><rect x="765" y="197" width="1" height="1"/><rect x="766" y="197" width="1" height="1"/><rect x="767" y="197" width="1" height="1"/><rect x="768" y="197" width="1" height="1"/><rect x="769" y="197" width="1" height="1"/><rect x="770" y="196" width="1" height="1"/><rect x="771" y="196" width="1" height="1"/><rect x="772" y="196" width="1" height="1"/><rect x="773" y="196" width="1" height="1"/><rect x="774" y="195" width="1" height="1"/><rect x="775" y="195" width="1" height="1"/><rect x="776" y="195" width="1" height="1"/><rect x="777" y="195" width="1" height="1"/><rect x="778" y="195" width="1" height="1"/><rect x="779" y="195" width="1" height="1"/><rect x="780" y="195" width="1" height="1"/><rect x="781" y="195" width="1" height="1"/><rect x="782" y="195" width="1" height="1"/><rect x="783" y="195" width="1" height="1"/><rect x="784" y="195" width="1" height="1"/><rect x="785" y="195" width="1" height="1"/><rect x="786" y="195" width="1" height="1"/><rect x="787" y="196" width="1" height="1"/><rect x="788" y="196" width="1" height="1"/><rect x="789" y="196" width="1" height="1"/><rect x="790" y="196" width="1" height="1"/><rect x="791" y="197" width="1" height="1"/><rect x="792" y="197" width="1" height="1"/><rect x="793" y="198" width="1" height="1"/><rect x="794" y="198" width="1" height="1"/><rect x="795" y="198" width="1" height="1"/><rect x="796" y="198" width="1" height="1"/><rect x="797" y="198" width="1" height="1"/><rect x="798" y="199" width="1" height="1"/><rect x="799" y="199" width="1" height="1"/><rect x="800" y="199" width="1" height="1"/><rect x="801" y="199" width="1" height="1"/><rect x="802" y="199" width="1" height="1"/><rect x="803" y="198" width="1" height="1"/><rect x="804" y="198" width="1" height="1"/><rect x="805" y="198" width="1" height="1"/><rect x="806" y="198" width="1" height="1"/><rect x="807" y="198" width="1" height="1"/><rect x="808" y="197" width="1" height="1"/><rect x="809" y="197" width="1" height="1"/><rect x="810" y="197" width="1" height="1"/><rect x="811" y="197" width="1" height="1"/><rect x="812" y="196" width="1" height="1"/><rect x="813" y="196" width="1" height="1"/><rect x="814" y="196" width="1" height="1"/><rect x="815" y="196" width="1" height="1"/><rect x="816" y="196" width="1" height="1"/><rect x="817" y="196" width="1" height="1"/><rect x="818" y="196" width="1" height="1"/><rect x="819" y="196" width="1" height="1"/><rect x="820" y="195" width="1" height="1"/><rect x="821" y="195" width="1" height="1"/><rect x="822" y="195" width="1" height="1"/><rect x="823" y="195" width="1" height="1"/><rect x="824" y="195" width="1" height="1"/><rect x="825" y="195" width="1" height="1"/><rect x="826" y="195" width="1" height="1"/><rect x="827" y="195" width="1" height="1"/><rect x="828" y="195" width="1" height="1"/><rect x="829" y="196" width="1" height="1"/><rect x="830" y="196" width="1" height="1"/><rect x="831" y="196" width="1" height="1"/><rect x="832" y="197" width="1" height="1"/><rect x="833" y="197" width="1" height="1"/><rect x="834" y="197" width="1" height="1"/><rect x="835" y="197" width="1" height="1"/><rect x="836" y="197" width="1" height="1"/><rect x="837" y="197" width="1" height="1"/><rect x="838" y="198" width="1" height="1"/><rect x="839" y="198" width="1" height="1"/><rect x="840" y="198" width="1" height="1"/><rect x="841" y="198" width="1" height="1"/><rect x="842" y="199" width="1" height="1"/><rect x="843" y="199" width="1" height="1"/><rect x="844" y="199" width="1" height="1"/><rect x="845" y="199" width="1" height="1"/><rect x="846" y="199" width="1" height="1"/><rect x="847" y="199" width="1" height="1"/><rect x="848" y="199" width="1" height="1"/><rect x="849" y="198" width="1" height="1"/><rect x="850" y="198" width="1" height="1"/><rect x="851" y="198" width="1" height="1"/><rect x="852" y="198" width="1" height="1"/><rect x="853" y="198" width="1" height="1"/><rect x="854" y="197" width="1" height="1"/><rect x="855" y="197" width="1" height="1"/><rect x="856" y="197" width="1" height="1"/><rect x="857" y="197" width="1" height="1"/><rect x="858" y="197" width="1" height="1"/><rect x="859" y="197" width="1" height="1"/><rect x="860" y="196" width="1" height="1"/><rect x="861" y="196" width="1" height="1"/><rect x="862" y="196" width="1" height="1"/><rect x="863" y="196" width="1" height="1"/><rect x="864" y="196" width="1" height="1"/><rect x="865" y="196" width="1" height="1"/><rect x="866" y="196" width="1" height="1"/><rect x="867" y="196" width="1" height="1"/><rect x="868" y="196" width="1" height="1"/><rect x="869" y="196" width="1" height="1"/><rect x="870" y="196" width="1" height="1"/><rect x="871" y="196" width="1" height="1"/><rect x="872" y="196" width="1" height="1"/><rect x="873" y="196" width="1" height="1"/><rect x="874" y="197" width="1" height="1"/><rect x="875" y="197" width="1" height="1"/><rect x="876" y="197" width="1" height="1"/><rect x="877" y="198" width="1" height="1"/><rect x="878" y="198" width="1" height="1"/><rect x="879" y="198" width="1" height="1"/><rect x="880" y="199" width="1" height="1"/><rect x="881" y="199" width="1" height="1"/><rect x="882" y="199" width="1" height="1"/><rect x="883" y="199" width="1" height="1"/><rect x="884" y="199" width="1" height="1"/><rect x="885" y="199" width="1" height="1"/><rect x="886" y="199" width="1" height="1"/><rect x="887" y="199" width="1" height="1"/><rect x="888" y="199" width="1" height="1"/><rect x="889" y="199" width="1" height="1"/><rect x="890" y="199" width="1" height="1"/><rect x="891" y="198" width="1" height="1"/><rect x="892" y="198" width="1" height="1"/><rect x="893" y="198" width="1" height="1"/><rect x="894" y="198" width="1" height="1"/><rect x="895" y="198" width="1" height="1"/><rect x="896" y="197" width="1" height="1"/><rect x="897" y="197" width="1" height="1"/><rect x="898" y="197" width="1" height="1"/><rect x="899" y="197" width="1" height="1"/><rect x="900" y="197" width="1" height="1"/><rect x="901" y="196" width="1" height="1"/><rect x="902" y="196" width="1" height="1"/><rect x="903" y="196" width="1" height="1"/><rect x="904" y="196" width="1" height="1"/><rect x="905" y="196" width="1" height="1"/><rect x="906" y="196" width="1" height="1"/><rect x="907" y="196" width="1" height="1"/><rect x="908" y="196" width="1" height="1"/><rect x="909" y="196" width="1" height="1"/><rect x="910" y="196" width="1" height="1"/><rect x="911" y="196" width="1" height="1"/><rect x="912" y="196" width="1" height="1"/><rect x="913" y="196" width="1" height="1"/><rect x="914" y="197" width="1" height="1"/><rect x="915" y="197" width="1" height="1"/><rect x="916" y="197" width="1" height="1"/><rect x="917" y="197" width="1" height="1"/><rect x="918" y="198" width="1" height="1"/><rect x="919" y="198" width="1" height="1"/><rect x="920" y="198" width="1" height="1"/><rect x="921" y="199" width="1" height="1"/><rect x="922" y="199" width="1" height="1"/><rect x="923" y="199" width="1" height="1"/><rect x="924" y="199" width="1" height="1"/><rect x="925" y="200" width="1" height="1"/><rect x="926" y="200" width="1" height="1"/><rect x="927" y="200" width="1" height="1"/><rect x="928" y="200" width="1" height="1"/><rect x="929" y="200" width="1" height="1"/><rect x="930" y="199" width="1" height="1"/><rect x="931" y="199" width="1" height="1"/><rect x="932" y="199" width="1" height="1"/><rect x="933" y="199" width="1" height="1"/><rect x="934" y="199" width="1" height="1"/><rect x="935" y="199" width="1" height="1"/><rect x="936" y="199" width="1" height="1"/><rect x="937" y="198" width="1" height="1"/><rect x="938" y="198" width="1" height="1"/><rect x="939" y="198" width="1" height="1"/><rect x="940" y="198" width="1" height="1"/><rect x="941" y="198" width="1" height="1"/><rect x="942" y="198" width="1" height="1"/><rect x="943" y="197" width="1" height="1"/><rect x="944" y="197" width="1" height="1"/><rect x="945" y="197" width="1" height="1"/><rect x="946" y="197" width="1" height="1"/><rect x="947" y="197" width="1" height="1"/><rect x="948" y="196" width="1" height="1"/><rect x="949" y="196" width="1" height="1"/><rect x="950" y="196" width="1" height="1"/><rect x="951" y="196" width="1" height="1"/><rect x="952" y="196" width="1" height="1"/><rect x="953" y="196" width="1" height="1"/><rect x="954" y="196" width="1" height="1"/><rect x="955" y="196" width="1" height="1"/><rect x="956" y="196" width="1" height="1"/><rect x="957" y="196" width="1" height="1"/><rect x="958" y="196" width="1" height="1"/><rect x="959" y="196" width="1" height="1"/></g>
<g fill="#00ff00" shape-rendering="crispEdges"><rect x="535" y="197" width="1" height="1"/><rect x="536" y="197" width="1" height="1"/><rect x="537" y="197" width="1" height="1"/><rect x="538" y="197" width="1" height="1"/><rect x="539" y="197" width="1" height="1"/><rect x="540" y="197" width="1" height="1"/><rect x="541" y="197" width="1" height="1"/><rect x="542" y="197" width="1" height="1"/><rect x="543" y="197" width="1" height="1"/><rect x="544" y="197" width="1" height="1"/><rect x="545" y="197" width="1" height="1"/><rect x="546" y="197" width="1" height="1"/><rect x="547" y="196" width="1" height="1"/><rect x="548" y="195" width="1" height="1"/><rect x="549" y="195" width="1" height="1"/><rect x="550" y="194" width="1" height="1"/><rect x="551" y="193" width="1" height="1"/><rect x="552" y="192" width="1" height="1"/><rect x="553" y="192" width="1" height="1"/><rect x="554" y="192" width="1" height="1"/><rect x="555" y="192" width="1" height="1"/><rect x="556" y="192" width="1" height="1"/><rect x="557" y="192" width="1" height="1"/><rect x="558" y="192" width="1" height="1"/><rect x="559" y="193" width="1" height="1"/><rect x="560" y="193" width="1" height="1"/><rect x="561" y="194" width="1" height="1"/><rect x="562" y="195" width="1" height="1"/><rect x="563" y="195" width="1" height="1"/><rect x="564" y="196" width="1" height="1"/><rect x="565" y="197" width="1" height="1"/><rect x="566" y="197" width="1" height="1"/><rect x="567" y="197" width="1" height="1"/><rect x="568" y="197" width="1" height="1"/><rect x="569" y="197" width="1" height="1"/><rect x="570" y="197" width="1" height="1"/><rect x="571" y="197" width="1" height="1"/><rect x="572" y="197" width="1" height="1"/><rect x="573" y="197" width="1" height="1"/><rect x="574" y="197" width="1" height="1"/><rect x="575" y="197" width="1" height="1"/><rect x="576" y="197" width="1" height="1"/><rect x="577" y="197" width="1" height="1"/><rect x="578" y="197" width="1" height="1"/><rect x="579" y="197" width="1" height="1"/><rect x="580" y="198" width="1" height="1"/><rect x="581" y="198" width="1" height="1"/><rect x="582" y="198" width="1" height="1"/><rect x="583" y="198" width="1" height="1"/><rect x="584" y="198" width="1" height="1"/><rect x="585" y="198" width="1" height="1"/><rect x="586" y="198" width="1" height="1"/><rect x="587" y="198" width="1" height="1"/><rect x="588" y="197" width="1" height="1"/><rect x="589" y="196" width="1" height="1"/><rect x="590" y="196" width="1" height="1"/><rect x="591" y="195" width="1" height="1"/><rect x="592" y="195" width="1" height="1"/><rect x="593" y="194" width="1" height="1"/><rect x="594" y="194" width="1" height="1"/><rect x="595" y="193" width="1" height="1"/><rect x="596" y="193" width="1" height="1"/><rect x="597" y="193" width="1" height="1"/><rect x="598" y="193" width="1" height="1"/><rect x="599" y="193" width="1" height="1"/><rect x="600" y="193" width="1" height="1"/><rect x="601" y="193" width="1" height="1"/><rect x="602" y="194" width="1" height="1"/><rect x="603" y="194" width="1" height="1"/><rect x="604" y="195" width="1" height="1"/><rect x="605" y="195" width="1" height="1"/><rect x="606" y="196" width="1" height="1"/><rect x="607" y="196" width="1" height="1"/><rect x="608" y="197" width="1" height="1"/><rect x="609" y="198" width="1" height="1"/><rect x="610" y="198" width="1" height="1"/><rect x="611" y="198" width="1" height="1"/><rect x="612" y="198" width="1" height="1"/><rect x="613" y="198" width="1" height="1"/><rect x="614" y="198" width="1" height="1"/><rect x="615" y="198" width="1" height="1"/><rect x="616" y="198" width="1" height="1"/><rect x="617" y="198" width="1" height="1"/><rect x="618" y="198" width="1" height="1"/><rect x="619" y="197" width="1" height="1"/><rect x="620" y="197" width="1" height="1"/><rect x="621" y="197" width="1" height="1"/><rect x="622" y="197" width="1" height="1"/><rect x="623" y="197" width="1" height="1"/><rect x="624" y="197" width="1" height="1"/><rect x="625" y="197" width="1" height="1"/><rect x="626" y="197" width="1" height="1"/><rect x="627" y="197" width="1" height="1"/><rect x="628" y="197" width="1" height="1"/><rect x="629" y="197" width="1" height="1"/><rect x="630" y="197" width="1" height="1"/><rect x="631" y="197" width="1" height="1"/><rect x="632" y="197" width="1" height="1"/><rect x="633" y="197" width="1" height="1"/><rect x="634" y="197" width="1" height="1"/><rect x="635" y="196" width="1" height="1"/><rect x="636" y="196" width="1" height="1"/><rect x="637" y="195" width="1" height="1"/><rect x="638" y="194" width="1" height="1"/><rect x="639" y="194" width="1" height="1"/><rect x="640" y="194" width="1" height="1"/><rect x="641" y="193" width="1" height="1"/><rect x="642" y="193" width="1" height="1"/><rect x="643" y="193" width="1" height="1"/><rect x="644" y="193" width="1" height="1"/><rect x="645" y="194" width="1" height="1"/><rect x="646" y="194" width="1" height="1"/><rect x="647" y="194" width="1" height="1"/><rect x="648" y="195" width="1" height="1"/><rect x="649" y="195" width="1" height="1"/><rect x="650" y="196" width="1" height="1"/><rect x="651" y="196" width="1" height="1"/><rect x="652" y="197" width="1" height="1"/><rect x="653" y="198" width="1" height="1"/><rect x="654" y="198" width="1" height="1"/><rect x="655" y="199" width="1" height="1"/><rect x="656" y="199" width="1" height="1"/><rect x="657" y="199" width="1" height="1"/><rect x="658" y="199" width="1" height="1"/><rect x="659" y="199" width="1" height="1"/><rect x="660" y="199" width="1" height="1"/><rect x="661" y="199" width="1" height="1"/><rect x="662" y="199" width="1" height="1"/><rect x="663" y="198" width="1" height="1"/><rect x="664" y="197" width="1" height="1"/><rect x="665" y="197" width="1" height="1"/><rect x="666" y="197" width="1" height="1"/><rect x="667" y="196" width="1" height="1"/><rect x="668" y="196" width="1" height="1"/><rect x="669" y="196" width="1" height="1"/><rect x="670" y="196" width="1" height="1"/><rect x="671" y="196" width="1" height="1"/><rect x="672" y="196" width="1" height="1"/><rect x="673" y="196" width="1" height="1"/><rect x="674" y="196" width="1" height="1"/><rect x="675" y="196" width="1" height="1"/><rect x="676" y="196" width="1" height="1"/><rect x="677" y="196" width="1" height="1"/><rect x="678" y="196" width="1" height="1"/><rect x="679" y="196" width="1" height="1"/><rect x="680" y="196" width="1" height="1"/><rect x="681" y="196" width="1" height="1"/><rect x="682" y="196" width="1" height="1"/><rect x="683" y="195" width="1" height="1"/><rect x="684" y="195" width="1" height="1"/><rect x="685" y="195" width="1" height="1"/><rect x="686" y="194" width="1" height="1"/><rect x="687" y="194" width="1" height="1"/><rect x="688" y="194" width="1" height="1"/><rect x="689" y="194" width="1" height="1"/><rect x="690" y="194" width="1" height="1"/><rect x="691" y="194" width="1" height="1"/><rect x="692" y="195" width="1" height="1"/><rect x="693" y="195" width="1" height="1"/><rect x="694" y="196" width="1" height="1"/><rect x="695" y="196" width="1" height="1"/><rect x="696" y="197" width="1" height="1"/><rect x="697" y="197" width="1" height="1"/><rect x="698" y="197" width="1" height="1"/><rect x="699" y="198" width="1" height="1"/><rect x="700" y="198" width="1" height="1"/><rect x="701" y="199" width="1" height="1"/><rect x="702" y="199" width="1" height="1"/><rect x="703" y="199" width="1" height="1"/><rect x="704" y="199" width="1" height="1"/><rect x="705" y="199" width="1" height="1"/><rect x="706" y="199" width="1" height="1"/><rect x="707" y="198" width="1" height="1"/><rect x="708" y="198" width="1" height="1"/><rect x="709" y="197" width="1" height="1"/><rect x="710" y="197" width="1" height="1"/><rect x="711" y="196" width="1" height="1"/><rect x="712" y="196" width="1" height="1"/><rect x="713" y="196" width="1" height="1"/><rect x="714" y="195" width="1" height="1"/><rect x="715" y="195" width="1" height="1"/><rect x="716" y="195" width="1" height="1"/><rect x="717" y="195" width="1" height="1"/><rect x="718" y="196" width="1" height="1"/><rect x="719" y="196" width="1" height="1"/><rect x="720" y="196" width="1" height="1"/><rect x="721" y="196" width="1" height="1"/><rect x="722" y="196" width="1" height="1"/><rect x="723" y="196" width="1" height="1"/><rect x="724" y="196" width="1" height="1"/><rect x="725" y="196" width="1" height="1"/><rect x="726" y="196" width="1" height="1"/><rect x="727" y="196" width="1" height="1"/><rect x="728" y="195" width="1" height="1"/><rect x="729" y="195" width="1" height="1"/><rect x="730" y="195" width="1" height="1"/><rect x="731" y="194" width="1" height="1"/><rect x="732" y="194" width="1" height="1"/><rect x="733" y="194" width="1" height="1"/><rect x="734" y="194" width="1" height="1"/><rect x="735" y="194" width="1" height="1"/><rect x="736" y="194" width="1" height="1"/><rect x="737" y="195" width="1" height="1"/><rect x="738" y="195" width="1" height="1"/><rect x="739" y="196" width="1" height="1"/><rect x="740" y="196" width="1" height="1"/><rect x="741" y="196" width="1" height="1"/><rect x="742" y="197" width="1" height="1"/><rect x="743" y="197" width="1" height="1"/><rect x="744" y="198" width="1" height="1"/><rect x="745" y="198" width="1" height="1"/><rect x="746" y="198" width="1" height="1"/><rect x="747" y="199" width="1" height="1"/><rect x="748" y="199" width="1" height="1"/><rect x="749" y="199" width="1" height="1"/><rect x="750" y="199" width="1" height="1"/><rect x="751" y="198" width="1" height="1"/><rect x="752" y="198" width="1" height="1"/><rect x="753" y="197" width="1" height="1"/><rect x="754" y="197" width="1" height="1"/><rect x="755" y="196" width="1" height="1"/><rect x="756" y="196" width="1" height="1"/><rect x="757" y="196" width="1" height="1"/><rect x="758" y="196" width="1" height="1"/><rect x="759" y="196" width="1" height="1"/><rect x="760" y="196" width="1" height="1"/><rect x="761" y="196" width="1" height="1"/><rect x="762" y="196" width="1" height="1"/><rect x="763" y="196" width="1" height="1"/><rect x="764" y="196" width="1" height="1"/><rect x="765" y="197" width="1" height="1"/><rect x="766" y="197" width="1" height="1"/><rect x="767" y="197" width="1" height="1"/><rect x="768" y="197" width="1" height="1"/><rect x="769" y="197" width="1" height="1"/><rect x="770" y="197" width="1" height="1"/><rect x="771" y="197" width="1" height="1"/><rect x="772" y="197" width="1" height="1"/><rect x="773" y="197" width="1" height="1"/><rect x="774" y="197" width="1" height="1"/><rect x="775" y="197" width="1" height="1"/><rect x="776" y="197" width="1" height="1"/><rect x="777" y="197" width="1" height="1"/><rect x="778" y="197" width="1" height="1"/><rect x="779" y="197" width="1" height="1"/><rect x="780" y="197" width="1" height="1"/><rect x="781" y="197" width="1" height="1"/><rect x="782" y="197" width="1" height="1"/><rect x="783" y="197" width="1" height="1"/><rect x="784" y="197" width="1" height="1"/><rect x="785" y="198" width="1" height="1"/><rect x="786" y="198" width="1" height="1"/><rect x="787" y="199" width="1" height="1"/><rect x="788" y="199" width="1" height="1"/><rect x="789" y="199" width="1" height="1"/><rect x="790" y="200" width="1" height="1"/><rect x="791" y="200" width="1" height="1"/><rect x="792" y="200" width="1" height="1"/><rect x="793" y="200" width="1" height="1"/><rect x="794" y="200" width="1" height="1"/><rect x="795" y="200" width="1" height="1"/><rect x="796" y="199" width="1" height="1"/><rect x="797" y="199" width="1" height="1"/><rect x="798" y="198" width="1" height="1"/><rect x="799" y="198" width="1" height="1"/><rect x="800" y="197" width="1" height="1"/><rect x="801" y="197" width="1" height="1"/><rect x="802" y="196" width="1" height="1"/><rect x="803" y="196" width="1" height="1"/><rect x="804" y="196" width="1" height="1"/><rect x="805" y="196" width="1" height="1"/><rect x="806" y="196" width="1" height="1"/><rect x="807" y="196" width="1" height="1"/><rect x="808" y="196" width="1" height="1"/><rect x="809" y="196" width="1" height="1"/><rect x="810" y="196" width="1" height="1"/><rect x="811" y="196" width="1" height="1"/><rect x="812" y="197" width="1" height="1"/><rect x="813" y="197" width="1" height="1"/><rect x="814" y="197" width="1" height="1"/><rect x="815" y="197" width="1" height="1"/><rect x="816" y="197" width="1" height="1"/><rect x="817" y="197" width="1" height="1"/><rect x="818" y="197" width="1" height="1"/><rect x="819" y="197" width="1" height="1"/><rect x="820" y="197" width="1" height="1"/><rect x="821" y="197" width="1" height="1"/><rect x="822" y="197" width="1" height="1"/><rect x="823" y="197" width="1" height="1"/><rect x="824" y="197" width="1" height="1"/><rect x="825" y="197" width="1" height="1"/><rect x="826" y="197" width="1" height="1"/><rect x="827" y="197" width="1" height="1"/><rect x="828" y="197" width="1" height="1"/><rect x="829" y="197" width="1" height="1"/><rect x="830" y="198" width="1" height="1"/><rect x="831" y="198" width="1" height="1"/><rect x="832" y="198" width="1" height="1"/><rect x="833" y="199" width="1" height="1"/><rect x="834" y="199" width="1" height="1"/><rect x="835" y="200" width="1" height="1"/><rect x="836" y="200" width="1" height="1"/><rect x="837" y="201" width="1" height="1"/><rect x="838" y="201" width="1" height="1"/><rect x="839" y="201" width="1" height="1"/><rect x="840" y="201" width="1" height="1"/><rect x="841" y="200" width="1" height="1"/><rect x="842" y="200" width="1" height="1"/><rect x="843" y="199" width="1" height="1"/><rect x="844" y="199" width="1" height="1"/><rect x="845" y="198" width="1" height="1"/><rect x="846" y="197" width="1" height="1"/><rect x="847" y="197" width="1" height="1"/><rect x="848" y="196" width="1" height="1"/><rect x="849" y="196" width="1" height="1"/><rect x="850" y="196" width="1" height="1"/><rect x="851" y="196" width="1" height="1"/><rect x="852" y="196" width="1" height="1"/><rect x="853" y="196" width="1" height="1"/><rect x="854" y="196" width="1" height="1"/><rect x="855" y="196" width="1" height="1"/><rect x="856" y="196" width="1" height="1"/><rect x="857" y="197" width="1" height="1"/><rect x="858" y="197" width="1" height="1"/><rect x="859" y="198" width="1" height="1"/><rect x="860" y="198" width="1" height="1"/><rect x="861" y="198" width="1" height="1"/><rect x="862" y="199" width="1" height="1"/><rect x="863" y="199" width="1" height="1"/><rect x="864" y="199" width="1" height="1"/><rect x="865" y="199" width="1" height="1"/><rect x="866" y="199" width="1" height="1"/><rect x="867" y="199" width="1" height="1"/><rect x="868" y="199" width="1" height="1"/><rect x="869" y="199" width="1" height="1"/><rect x="870" y="199" width="1" height="1"/><rect x="871" y="199" width="1" height="1"/><rect x="872" y="199" width="1" height="1"/><rect x="873" y="199" width="1" height="1"/><rect x="874" y="199" width="1" height="1"/><rect x="875" y="199" width="1" height="1"/><rect x="876" y="199" width="1" height="1"/><rect x="877" y="200" width="1" height="1"/><rect x="878" y="200" width="1" height="1"/><rect x="879" y="200" width="1" height="1"/><rect x="880" y="200" width="1" height="1"/><rect x="881" y="200" width="1" height="1"/><rect x="882" y="200" width="1" height="1"/><rect x="883" y="201" width="1" height="1"/><rect x="884" y="201" width="1" height="1"/><rect x="885" y="200" width="1" height="1"/><rect x="886" y="200" width="1" height="1"/><rect x="887" y="200" width="1" height="1"/><rect x="888" y="199" width="1" height="1"/><rect x="889" y="199" width="1" height="1"/><rect x="890" y="198" width="1" height="1"/><rect x="891" y="197" width="1" height="1"/><rect x="892" y="197" width="1" height="1"/><rect x="893" y="196" width="1" height="1"/><rect x="894" y="196" width="1" height="1"/><rect x="895" y="196" width="1" height="1"/><rect x="896" y="195" width="1" height="1"/><rect x="897" y="195" width="1" height="1"/><rect x="898" y="195" width="1" height="1"/><rect x="899" y="196" width="1" height="1"/><rect x="900" y="196" width="1" height="1"/><rect x="901" y="196" width="1" height="1"/><rect x="902" y="197" width="1" height="1"/><rect x="903" y="197" width="1" height="1"/><rect x="904" y="198" width="1" height="1"/><rect x="905" y="198" width="1" height="1"/><rect x="906" y="198" width="1" height="1"/><rect x="907" y="199" width="1" height="1"/><rect x="908" y="199" width="1" height="1"/><rect x="909" y="199" width="1" height="1"/><rect x="910" y="199" width="1" height="1"/><rect x="911" y="199" width="1" height="1"/><rect x="912" y="199" width="1" height="1"/><rect x="913" y="199" width="1" height="1"/><rect x="914" y="199" width="1" height="1"/><rect x="915" y="199" width="1" height="1"/><rect x="916" y="199" width="1" height="1"/><rect x="917" y="199" width="1" height="1"/><rect x="918" y="199" width="1" height="1"/><rect x="919" y="199" width="1" height="1"/><rect x="920" y="199" width="1" height="1"/><rect x="921" y="199" width="1" height="1"/><rect x="922" y="199" width="1" height="1"/><rect x="923" y="200" width="1" height="1"/><rect x="924" y="200" width="1" height="1"/><rect x="925" y="200" width="1" height="1"/><rect x="926" y="200" width="1" height="1"/><rect x="927" y="200" width="1" height="1"/><rect x="928" y="201" width="1" height="1"/><rect x="929" y="200" width="1" height="1"/><rect x="930" y="200" width="1" height="1"/><rect x="931" y="199" width="1" height="1"/><rect x="932" y="199" width="1" height="1"/><rect x="933" y="199" width="1" height="1"/><rect x="934" y="198" width="1" height="1"/><rect x="935" y="197" width="1" height="1"/><rect x="936" y="197" width="1" height="1"/><rect x="937" y="196" width="1" height="1"/><rect x="938" y="196" width="1" height="1"/><rect x="939" y="196" width="1" height="1"/><rect x="940" y="196" width="1" height="1"/><rect x="941" y="196" width="1" height="1"/><rect x="942" y="196" width="1" height="1"/><rect x="943" y="197" width="1" height="1"/><rect x="944" y="197" width="1" height="1"/><rect x="945" y="197" width="1" height="1"/><rect x="946" y="198" width="1" height="1"/><rect x="947" y="198" width="1" height="1"/><rect x="948" y="199" width="1" height="1"/><rect x="949" y="199" width="1" height="1"/><rect x="950" y="200" width="1" height="1"/><rect x="951" y="199" width="1" height="1"/><rect x="952" y="199" width="1" height="1"/><rect x="953" y="199" width="1" height="1"/><rect x="954" y="199" width="1" height="1"/><rect x="955" y="199" width="1" height="1"/><rect x="956" y="199" width="1" height="1"/><rect x="957" y="199" width="1" height="1"/><rect x="958" y="199" width="1" height="1"/><rect x="959" y="200" width="1" height="1"/></g>
<rect x="534" y="62" width="1" height="271" fill="#b8b8b8" />
<rect x="534" y="332" width="427" height="1" fill="#b8b8b8" />
<text transform="translate(531.5,64) scale(0.82,1)" font-size="9" text-anchor="end" fill="#e4e4e4" >1</text>
<text transform="translate(531.5,78) scale(0.82,1)" font-size="9" text-anchor="end" fill="#e4e4e4" >0.9</text>
<text transform="translate(531.5,91) scale(0.82,1)" font-size="9" text-anchor="end" fill="#e4e4e4" >0.8</text>
<text transform="translate(531.5,105) scale(0.82,1)" font-size="9" text-anchor="end" fill="#e4e4e4" >0.7</text>
<text transform="translate(531.5,118) scale(0.82,1)" font-size="9" text-anchor="end" fill="#e4e4e4" >0.6</text>
<text transform="translate(531.5,132) scale(0.82,1)" font-size="9" text-anchor="end" fill="#e4e4e4" >0.5</text>
<text transform="translate(531.5,145) scale(0.82,1)" font-size="9" text-anchor="end" fill="#e4e4e4" >0.4</text>
<text transform="translate(531.5,159) scale(0.82,1)" font-size="9" text-anchor="end" fill="#e4e4e4" >0.3</text>
<text transform="translate(531.5,172) scale(0.82,1)" font-size="9" text-anchor="end" fill="#e4e4e4" >0.2</text>
<text transform="translate(531.5,186) scale(0.82,1)" font-size="9" text-anchor="end" fill="#e4e4e4" >0.1</text>
<text transform="translate(531.5,199) scale(0.82,1)" font-size="9" text-anchor="end" fill="#e4e4e4" >0</text>
<text transform="translate(531.5,213) scale(0.82,1)" font-size="9" text-anchor="end" fill="#e4e4e4" >-0.1</text>
<text transform="translate(531.5,226) scale(0.82,1)" font-size="9" text-anchor="end" fill="#e4e4e4" >-0.2</text>
<text transform="translate(531.5,240) scale(0.82,1)" font-size="9" text-anchor="end" fill="#e4e4e4" >-0.3</text>
<text transform="translate(531.5,253) scale(0.82,1)" font-size="9" text-anchor="end" fill="#e4e4e4" >-0.4</text>
<text transform="translate(531.5,267) scale(0.82,1)" font-size="9" text-anchor="end" fill="#e4e4e4" >-0.5</text>
<text transform="translate(531.5,280) scale(0.82,1)" font-size="9" text-anchor="end" fill="#e4e4e4" >-0.6</text>
<text transform="translate(531.5,294) scale(0.82,1)" font-size="9" text-anchor="end" fill="#e4e4e4" >-0.7</text>
<text transform="translate(531.5,307) scale(0.82,1)" font-size="9" text-anchor="end" fill="#e4e4e4" >-0.8</text>
<text transform="translate(531.5,321) scale(0.82,1)" font-size="9" text-anchor="end" fill="#e4e4e4" >-0.9</text>
<text transform="translate(531.5,334) scale(0.82,1)" font-size="9" text-anchor="end" fill="#e4e4e4" >-1</text>
<text transform="translate(533.5,343) scale(0.82,1)" font-size="9" text-anchor="middle" fill="#e4e4e4" >-300</text>
<text transform="translate(576.5,343) scale(0.82,1)" font-size="9" text-anchor="middle" fill="#e4e4e4" >-240</text>
<text transform="translate(618.5,343) scale(0.82,1)" font-size="9" text-anchor="middle" fill="#e4e4e4" >-180</text>
<text transform="translate(661.5,343) scale(0.82,1)" font-size="9" text-anchor="middle" fill="#e4e4e4" >-120</text>
<text transform="translate(703.5,343) scale(0.82,1)" font-size="9" text-anchor="middle" fill="#e4e4e4" >-60</text>
<text transform="translate(746.5,343) scale(0.82,1)" font-size="9" text-anchor="middle" fill="#e4e4e4" >0</text>
<text transform="translate(789.5,343) scale(0.82,1)" font-size="9" text-anchor="middle" fill="#e4e4e4" >60</text>
<text transform="translate(831.5,343) scale(0.82,1)" font-size="9" text-anchor="middle" fill="#e4e4e4" >120</text>
<text transform="translate(874.5,343) scale(0.82,1)" font-size="9" text-anchor="middle" fill="#e4e4e4" >180</text>
<text transform="translate(916.5,343) scale(0.82,1)" font-size="9" text-anchor="middle" fill="#e4e4e4" >240</text>
<text transform="translate(959.5,343) scale(0.82,1)" font-size="9" text-anchor="middle" fill="#e4e4e4" >300</text>
<text x="0" y="0" font-size="12.2" text-anchor="middle" fill="#e4e4e4" transform="translate(504.7,197) rotate(-90)">Equaliser Response</text>
<text x="747" y="356" font-size="10.67" text-anchor="middle" fill="#e4e4e4" >Sub-Carrier</text>
<rect x="52" y="374" width="426" height="271" fill="#000" />
<g shape-rendering="crispEdges">
<rect x="52" y="374" width="427" height="1" fill="#1c1c1c"/>
<line x1="52" y1="374.5" x2="479" y2="374.5" stroke="#5e5e5e" stroke-dasharray="3 3" />
<rect x="52" y="392" width="427" height="1" fill="#1c1c1c"/>
<line x1="52" y1="392.5" x2="479" y2="392.5" stroke="#5e5e5e" stroke-dasharray="3 3" />
<rect x="52" y="410" width="427" height="1" fill="#1c1c1c"/>
<line x1="52" y1="410.5" x2="479" y2="410.5" stroke="#5e5e5e" stroke-dasharray="3 3" />
<rect x="52" y="428" width="427" height="1" fill="#1c1c1c"/>
<line x1="52" y1="428.5" x2="479" y2="428.5" stroke="#5e5e5e" stroke-dasharray="3 3" />
<rect x="52" y="446" width="427" height="1" fill="#1c1c1c"/>
<line x1="52" y1="446.5" x2="479" y2="446.5" stroke="#5e5e5e" stroke-dasharray="3 3" />
<rect x="52" y="464" width="427" height="1" fill="#1c1c1c"/>
<line x1="52" y1="464.5" x2="479" y2="464.5" stroke="#5e5e5e" stroke-dasharray="3 3" />
<rect x="52" y="482" width="427" height="1" fill="#1c1c1c"/>
<line x1="52" y1="482.5" x2="479" y2="482.5" stroke="#5e5e5e" stroke-dasharray="3 3" />
<rect x="52" y="500" width="427" height="1" fill="#1c1c1c"/>
<line x1="52" y1="500.5" x2="479" y2="500.5" stroke="#5e5e5e" stroke-dasharray="3 3" />
<rect x="52" y="518" width="427" height="1" fill="#1c1c1c"/>
<line x1="52" y1="518.5" x2="479" y2="518.5" stroke="#5e5e5e" stroke-dasharray="3 3" />
<rect x="52" y="536" width="427" height="1" fill="#1c1c1c"/>
<line x1="52" y1="536.5" x2="479" y2="536.5" stroke="#5e5e5e" stroke-dasharray="3 3" />
<rect x="52" y="554" width="427" height="1" fill="#1c1c1c"/>
<line x1="52" y1="554.5" x2="479" y2="554.5" stroke="#5e5e5e" stroke-dasharray="3 3" />
<rect x="52" y="572" width="427" height="1" fill="#1c1c1c"/>
<line x1="52" y1="572.5" x2="479" y2="572.5" stroke="#5e5e5e" stroke-dasharray="3 3" />
<rect x="52" y="590" width="427" height="1" fill="#1c1c1c"/>
<line x1="52" y1="590.5" x2="479" y2="590.5" stroke="#5e5e5e" stroke-dasharray="3 3" />
<rect x="52" y="608" width="427" height="1" fill="#1c1c1c"/>
<line x1="52" y1="608.5" x2="479" y2="608.5" stroke="#5e5e5e" stroke-dasharray="3 3" />
<rect x="52" y="626" width="427" height="1" fill="#1c1c1c"/>
<line x1="52" y1="626.5" x2="479" y2="626.5" stroke="#5e5e5e" stroke-dasharray="3 3" />
<rect x="95" y="374" width="1" height="270" fill="#1c1c1c"/>
<line x1="95.5" y1="374" x2="95.5" y2="644" stroke="#5e5e5e" stroke-dasharray="3 3" stroke-dashoffset="0" />
<rect x="137" y="374" width="1" height="270" fill="#1c1c1c"/>
<line x1="137.5" y1="374" x2="137.5" y2="644" stroke="#5e5e5e" stroke-dasharray="3 3" stroke-dashoffset="0" />
<rect x="180" y="374" width="1" height="270" fill="#1c1c1c"/>
<line x1="180.5" y1="374" x2="180.5" y2="644" stroke="#5e5e5e" stroke-dasharray="3 3" stroke-dashoffset="0" />
<rect x="222" y="374" width="1" height="270" fill="#1c1c1c"/>
<line x1="222.5" y1="374" x2="222.5" y2="644" stroke="#5e5e5e" stroke-dasharray="3 3" stroke-dashoffset="0" />
<rect x="265" y="374" width="1" height="270" fill="#1c1c1c"/>
<line x1="265.5" y1="374" x2="265.5" y2="644" stroke="#5e5e5e" stroke-dasharray="3 3" stroke-dashoffset="0" />
<rect x="308" y="374" width="1" height="270" fill="#1c1c1c"/>
<line x1="308.5" y1="374" x2="308.5" y2="644" stroke="#5e5e5e" stroke-dasharray="3 3" stroke-dashoffset="0" />
<rect x="350" y="374" width="1" height="270" fill="#1c1c1c"/>
<line x1="350.5" y1="374" x2="350.5" y2="644" stroke="#5e5e5e" stroke-dasharray="3 3" stroke-dashoffset="0" />
<rect x="393" y="374" width="1" height="270" fill="#1c1c1c"/>
<line x1="393.5" y1="374" x2="393.5" y2="644" stroke="#5e5e5e" stroke-dasharray="3 3" stroke-dashoffset="0" />
<rect x="435" y="374" width="1" height="270" fill="#1c1c1c"/>
<line x1="435.5" y1="374" x2="435.5" y2="644" stroke="#5e5e5e" stroke-dasharray="3 3" stroke-dashoffset="0" />
<rect x="478" y="374" width="1" height="270" fill="#1c1c1c"/>
<line x1="478.5" y1="374" x2="478.5" y2="644" stroke="#484848" stroke-dasharray="3 3" stroke-dashoffset="0" />
</g>
<polyline points="52.5,572.5 53.2,555.3 53.9,543.4 54.6,598.7 55.3,560.4 56.1,606.2 56.8,603.0 57.5,548.6 58.2,558.4 58.9,589.8 59.6,604.0 60.3,615.2 61.0,644.5 61.7,615.1 62.5,576.9 63.2,614.5 63.9,644.5 64.6,610.1 65.3,539.7 66.0,611.6 66.7,644.5 67.4,602.8 68.1,616.3 68.9,644.5 69.6,601.4 70.3,583.8 71.0,562.9 71.7,610.5 72.4,582.0 73.1,605.6 73.8,608.2 74.5,609.8 75.3,565.4 76.0,563.8 76.7,597.0 77.4,561.3 78.1,543.5 78.8,548.9 79.5,600.6 80.2,576.5 80.9,605.7 81.7,534.2 82.4,545.3 83.1,561.0 83.8,575.2 84.5,579.3 85.2,597.9 85.9,603.8 86.6,615.0 87.3,601.1 88.1,591.0 88.8,595.3 89.5,581.7 90.2,583.7 90.9,543.4 91.6,607.2 92.3,548.2 93.0,556.7 93.7,566.7 94.5,536.8 95.2,590.7 95.9,613.4 96.6,620.4 97.3,557.7 98.0,608.8 98.7,605.8 99.4,600.8 100.1,602.6 100.9,578.0 101.6,528.0 102.3,554.6 103.0,588.2 103.7,609.1 104.4,542.2 105.1,556.8 105.8,607.3 106.6,621.8 107.3,610.7 108.0,566.5 108.7,571.0 109.4,597.8 110.1,564.9 110.8,600.7 111.5,606.3 112.2,564.3 113.0,610.6 113.7,553.5 114.4,609.6 115.1,583.2 115.8,597.8 116.5,596.3 117.2,524.3 117.9,571.3 118.6,586.4 119.4,555.5 120.1,535.0 120.8,570.5 121.5,564.3 122.2,567.5 122.9,609.3 123.6,582.6 124.3,608.6 125.0,599.1 125.8,600.8 126.5,611.0 127.2,568.4 127.9,584.0 128.6,604.6 129.3,565.0 130.0,526.4 130.7,569.9 131.4,603.7 132.2,608.8 132.9,609.5 133.6,608.5 134.3,600.8 135.0,557.4 135.7,555.7 136.4,603.6 137.1,545.9 137.8,610.2 138.6,589.6 139.3,590.1 140.0,567.5 140.7,567.1 141.4,581.3 142.1,601.3 142.8,610.6 143.5,608.6 144.2,597.0 145.0,611.3 145.7,540.9 146.4,598.7 147.1,580.8 147.8,592.6 148.5,560.2 149.2,583.7 149.9,542.6 150.6,571.7 151.4,607.4 152.1,610.9 152.8,610.6 153.5,545.6 154.2,593.4 154.9,556.5 155.6,597.0 156.3,587.6 157.0,602.0 157.8,559.7 158.5,606.7 159.2,594.1 159.9,609.3 160.6,571.5 161.3,553.7 162.0,607.0 162.7,560.3 163.4,590.8 164.2,589.1 164.9,591.8 165.6,601.5 166.3,551.3 167.0,596.4 167.7,552.3 168.4,545.6 169.1,576.0 169.8,556.6 170.6,539.7 171.3,586.9 172.0,591.0 172.7,577.3 173.4,587.2 174.1,604.0 174.8,582.4 175.5,591.4 176.2,599.8 177.0,539.0 177.7,552.7 178.4,588.1 179.1,611.3 179.8,557.6 180.5,606.6 181.2,600.8 181.9,588.8 182.6,582.8 183.4,605.7 184.1,586.2 184.8,574.8 185.5,590.1 186.2,610.0 186.9,565.1 187.6,523.5 188.3,603.5 189.0,596.5 189.8,585.1 190.5,610.7 191.2,600.6 191.9,602.9 192.6,539.7 193.3,530.4 194.0,577.6 194.7,600.8 195.4,593.1 196.2,584.1 196.9,537.4 197.6,584.1 198.3,524.0 199.0,563.8 199.7,558.5 200.4,558.4 201.1,611.6 201.8,644.5 202.6,599.3 203.3,569.8 204.0,615.2 204.7,644.5 205.4,592.5 206.1,609.2 206.8,644.5 207.5,598.7 208.2,607.7 209.0,644.5 209.7,599.9 210.4,608.2 211.1,605.4 211.8,611.1 212.5,584.3 213.2,560.6 213.9,595.4 214.7,561.7 215.4,601.6 216.1,550.9 216.8,547.4 217.5,590.5 218.2,609.0 218.9,561.6 219.6,602.4 220.3,602.8 221.1,574.2 221.8,552.8 222.5,600.5 223.2,603.2 223.9,564.7 224.6,553.5 225.3,542.3 226.0,574.1 226.7,541.9 227.5,545.2 228.2,563.2 228.9,539.0 229.6,550.4 230.3,579.1 231.0,571.5 231.7,577.5 232.4,546.3 233.1,603.4 233.9,548.3 234.6,565.0 235.3,608.9 236.0,576.9 236.7,604.0 237.4,611.8 238.1,543.4 238.8,543.5 239.5,620.1 240.3,556.6 241.0,570.5 241.7,610.3 242.4,549.5 243.1,587.8 243.8,539.0 244.5,602.8 245.2,601.8 245.9,600.6 246.7,605.4 247.4,557.3 248.1,572.4 248.8,551.3 249.5,570.5 250.2,567.9 250.9,601.5 251.6,522.1 252.3,469.5 253.1,599.2 253.8,552.7 254.5,575.9 255.2,602.3 255.9,613.8 256.6,559.0 257.3,601.7 258.0,603.0 258.7,582.4 259.5,585.6 260.2,576.5 260.9,609.3 261.6,557.7 262.3,530.0 263.0,549.4 263.7,543.1 264.4,525.9 265.1,609.6 265.9,606.7 266.6,607.8 267.3,549.3 268.0,565.5 268.7,565.4 269.4,607.8 270.1,604.2 270.8,592.3 271.5,605.6 272.3,585.2 273.0,600.9 273.7,591.1 274.4,608.3 275.1,608.7 275.8,609.0 276.5,558.3 277.2,575.6 277.9,582.5 278.7,565.1 279.4,552.1 280.1,618.6 280.8,565.5 281.5,597.9 282.2,582.4 282.9,609.9 283.6,592.8 284.3,610.4 285.1,539.7 285.8,572.1 286.5,595.7 287.2,608.1 287.9,577.3 288.6,593.9 289.3,610.5 290.0,578.3 290.7,539.6 291.5,601.5 292.2,610.0 292.9,545.5 293.6,525.7 294.3,552.9 295.0,591.4 295.7,584.4 296.4,540.0 297.1,591.4 297.9,586.7 298.6,551.3 299.3,542.5 300.0,559.5 300.7,583.3 301.4,560.0 302.1,561.5 302.8,574.9 303.5,595.2 304.3,573.3 305.0,563.0 305.7,582.1 306.4,609.6 307.1,562.7 307.8,553.4 308.5,575.0 309.2,610.9 309.9,598.3 310.7,574.0 311.4,593.2 312.1,598.8 312.8,530.6 313.5,611.4 314.2,558.0 314.9,588.4 315.6,598.1 316.3,610.5 317.1,609.2 317.8,598.9 318.5,544.8 319.2,599.6 319.9,528.4 320.6,561.7 321.3,574.9 322.0,603.9 322.8,600.1 323.5,602.5 324.2,571.3 324.9,583.2 325.6,601.2 326.3,554.3 327.0,576.7 327.7,603.5 328.4,540.5 329.2,584.3 329.9,529.7 330.6,570.5 331.3,609.6 332.0,607.7 332.7,594.8 333.4,546.1 334.1,608.4 334.8,532.7 335.6,593.6 336.3,609.6 337.0,574.4 337.7,610.7 338.4,532.8 339.1,536.4 339.8,608.7 340.5,594.4 341.2,525.6 342.0,607.6 342.7,644.5 343.4,592.3 344.1,605.8 344.8,644.5 345.5,602.8 346.2,601.2 346.9,595.2 347.6,644.5 348.4,601.3 349.1,594.7 349.8,644.5 350.5,592.6 351.2,605.8 351.9,567.5 352.6,552.2 353.3,555.9 354.0,580.4 354.8,604.2 355.5,605.1 356.2,600.1 356.9,606.2 357.6,592.6 358.3,580.9 359.0,587.4 359.7,565.8 360.4,562.6 361.2,544.6 361.9,574.6 362.6,573.8 363.3,582.2 364.0,580.8 364.7,574.7 365.4,580.6 366.1,524.5 366.8,613.8 367.6,541.5 368.3,601.0 369.0,607.6 369.7,549.2 370.4,592.7 371.1,546.9 371.8,602.9 372.5,601.5 373.2,602.1 374.0,538.5 374.7,585.6 375.4,608.7 376.1,583.6 376.8,609.8 377.5,611.0 378.2,547.8 378.9,597.6 379.6,587.8 380.4,621.5 381.1,551.5 381.8,610.8 382.5,593.5 383.2,548.5 383.9,540.7 384.6,553.2 385.3,553.7 386.0,568.9 386.8,544.1 387.5,550.6 388.2,612.7 388.9,602.8 389.6,595.5 390.3,593.6 391.0,566.9 391.7,604.0 392.4,566.6 393.2,563.3 393.9,608.1 394.6,576.6 395.3,583.2 396.0,563.8 396.7,610.0 397.4,596.4 398.1,541.6 398.8,562.3 399.6,578.6 400.3,606.3 401.0,604.9 401.7,583.6 402.4,560.3 403.1,585.2 403.8,609.8 404.5,576.1 405.2,550.3 406.0,544.2 406.7,604.6 407.4,602.0 408.1,542.2 408.8,546.6 409.5,551.2 410.2,601.9 410.9,551.4 411.6,595.4 412.4,572.1 413.1,609.9 413.8,570.3 414.5,554.2 415.2,605.9 415.9,583.6 416.6,602.9 417.3,601.6 418.0,588.2 418.8,602.1 419.5,554.1 420.2,556.4 420.9,592.1 421.6,551.6 422.3,608.1 423.0,562.1 423.7,608.3 424.4,609.1 425.2,601.6 425.9,588.3 426.6,601.5 427.3,607.2 428.0,561.6 428.7,612.9 429.4,574.6 430.1,554.7 430.9,607.5 431.6,601.0 432.3,607.8 433.0,568.6 433.7,545.9 434.4,610.4 435.1,567.8 435.8,550.7 436.5,582.5 437.3,539.2 438.0,535.0 438.7,610.0 439.4,589.2 440.1,602.1 440.8,596.0 441.5,601.7 442.2,567.1 442.9,565.6 443.7,611.2 444.4,608.4 445.1,549.5 445.8,546.6 446.5,581.3 447.2,558.5 447.9,528.7 448.6,594.0 449.3,585.9 450.1,592.1 450.8,584.6 451.5,559.9 452.2,542.5 452.9,608.7 453.6,554.4 454.3,548.8 455.0,575.0 455.7,537.9 456.5,595.1 457.2,589.8 457.9,592.7 458.6,566.1 459.3,607.2 460.0,548.4 460.7,598.2 461.4,592.7 462.1,546.4 462.9,560.1 463.6,578.2 464.3,576.2 465.0,557.4 465.7,608.6 466.4,573.3 467.1,541.3 467.8,608.2 468.5,537.3 469.3,605.7 470.0,594.2 470.7,567.9 471.4,535.1 472.1,568.2 472.8,595.0 473.5,563.2 474.2,536.4 474.9,602.8 475.7,527.2 476.4,541.3 477.1,606.2 477.8,555.1 478.5,611.1" fill="none" stroke="#5a1eaa" stroke-width="1" stroke-linejoin="miter" shape-rendering="crispEdges"/>
<polyline points="52.5,541.9 53.2,545.5 53.9,514.5 54.6,546.6 55.3,540.4 56.1,509.2 56.8,483.1 57.5,531.7 58.2,537.7 58.9,516.8 59.6,528.2 60.3,532.2 61.0,518.5 61.7,493.3 62.5,527.6 63.2,525.8 63.9,518.4 64.6,534.7 65.3,496.8 66.0,493.0 66.7,531.7 67.4,512.0 68.1,517.3 68.9,489.7 69.6,450.5 70.3,493.3 71.0,525.1 71.7,536.6 72.4,514.5 73.1,531.4 73.8,536.9 74.5,536.9 75.3,508.6 76.0,516.0 76.7,504.6 77.4,516.9 78.1,512.3 78.8,534.4 79.5,508.5 80.2,527.0 80.9,537.0 81.7,523.6 82.4,511.4 83.1,510.4 83.8,513.6 84.5,526.5 85.2,528.2 85.9,534.5 86.6,508.1 87.3,550.4 88.1,505.9 88.8,531.9 89.5,515.2 90.2,537.8 90.9,510.5 91.6,524.6 92.3,511.4 93.0,517.6 93.7,515.5 94.5,493.3 95.2,514.9 95.9,538.4 96.6,546.6 97.3,527.0 98.0,530.6 98.7,538.4 99.4,536.1 100.1,535.9 100.9,527.6 101.6,509.5 102.3,501.4 103.0,500.5 103.7,517.7 104.4,531.7 105.1,529.6 105.8,532.6 106.6,513.5 107.3,538.0 108.0,498.4 108.7,516.7 109.4,504.5 110.1,538.1 110.8,505.6 111.5,542.5 112.2,519.1 113.0,527.8 113.7,547.2 114.4,513.6 115.1,498.6 115.8,534.0 116.5,516.0 117.2,481.4 117.9,540.5 118.6,529.2 119.4,514.0 120.1,498.7 120.8,511.2 121.5,511.6 122.2,544.1 122.9,536.8 123.6,487.9 124.3,541.0 125.0,521.3 125.8,519.6 126.5,509.6 127.2,538.9 127.9,520.0 128.6,489.7 129.3,538.0 130.0,540.3 130.7,529.5 131.4,530.4 132.2,513.6 132.9,482.5 133.6,538.5 134.3,529.8 135.0,530.4 135.7,482.5 136.4,515.1 137.1,529.7 137.8,515.0 138.6,514.9 139.3,498.6 140.0,496.9 140.7,521.7 141.4,541.7 142.1,496.7 142.8,514.0 143.5,504.1 144.2,537.6 145.0,519.4 145.7,519.9 146.4,536.9 147.1,519.5 147.8,530.5 148.5,503.9 149.2,495.4 149.9,534.1 150.6,520.2 151.4,526.8 152.1,509.8 152.8,537.1 153.5,514.6 154.2,535.1 154.9,538.5 155.6,519.4 156.3,505.5 157.0,525.6 157.8,504.6 158.5,504.1 159.2,551.5 159.9,530.0 160.6,498.1 161.3,529.3 162.0,484.0 162.7,495.5 163.4,544.2 164.2,535.2 164.9,518.1 165.6,524.3 166.3,515.4 167.0,535.8 167.7,494.8 168.4,525.8 169.1,504.5 169.8,529.5 170.6,547.7 171.3,537.6 172.0,511.0 172.7,533.6 173.4,542.2 174.1,512.1 174.8,507.1 175.5,534.5 176.2,509.0 177.0,528.9 177.7,498.2 178.4,496.9 179.1,509.1 179.8,525.1 180.5,513.3 181.2,526.4 181.9,533.6 182.6,507.5 183.4,527.7 184.1,496.8 184.8,517.4 185.5,529.2 186.2,507.8 186.9,543.7 187.6,533.4 188.3,529.5 189.0,512.5 189.8,515.4 190.5,489.3 191.2,518.1 191.9,501.7 192.6,531.0 193.3,505.7 194.0,512.2 194.7,549.4 195.4,482.9 196.2,533.2 196.9,533.2 197.6,548.9 198.3,524.7 199.0,530.4 199.7,516.6 200.4,482.4 201.1,525.5 201.8,518.0 202.6,529.1 203.3,496.5 204.0,530.3 204.7,500.5 205.4,531.6 206.1,517.6 206.8,519.0 207.5,511.2 208.2,531.4 209.0,495.8 209.7,535.5 210.4,513.3 211.1,510.8 211.8,501.0 212.5,512.8 213.2,501.3 213.9,493.3 214.7,511.0 215.4,531.2 216.1,514.0 216.8,536.1 217.5,513.8 218.2,532.2 218.9,517.3 219.6,532.3 220.3,513.5 221.1,515.3 221.8,492.5 222.5,487.4 223.2,520.7 223.9,538.5 224.6,520.7 225.3,541.4 226.0,536.9 226.7,480.7 227.5,505.5 228.2,534.4 228.9,542.2 229.6,516.3 230.3,515.9 231.0,505.8 231.7,514.0 232.4,534.6 233.1,539.9 233.9,532.9 234.6,515.6 235.3,541.6 236.0,529.3 236.7,517.3 237.4,489.7 238.1,539.1 238.8,535.6 239.5,550.8 240.3,516.8 241.0,535.9 241.7,517.4 242.4,529.7 243.1,511.1 243.8,519.4 244.5,463.1 245.2,487.5 245.9,540.9 246.7,537.4 247.4,549.3 248.1,532.9 248.8,528.4 249.5,516.0 250.2,517.1 250.9,520.9 251.6,534.9 252.3,519.3 253.1,506.8 253.8,532.5 254.5,520.8 255.2,518.6 255.9,502.0 256.6,491.4 257.3,535.0 258.0,528.3 258.7,494.8 259.5,531.8 260.2,516.1 260.9,535.3 261.6,519.5 262.3,500.5 263.0,502.7 263.7,551.7 264.4,512.7 265.1,534.5 265.9,546.2 266.6,501.2 267.3,503.0 268.0,533.4 268.7,528.0 269.4,552.6 270.1,518.1 270.8,514.8 271.5,506.6 272.3,552.5 273.0,517.8 273.7,512.1 274.4,499.6 275.1,547.2 275.8,512.0 276.5,489.7 277.2,449.0 277.9,527.7 278.7,509.8 279.4,535.4 280.1,507.1 280.8,531.5 281.5,492.8 282.2,510.6 282.9,478.0 283.6,519.6 284.3,511.3 285.1,532.4 285.8,500.0 286.5,525.8 287.2,488.2 287.9,525.4 288.6,536.2 289.3,536.4 290.0,509.8 290.7,493.3 291.5,506.0 292.2,508.8 292.9,512.0 293.6,508.7 294.3,501.7 295.0,505.3 295.7,512.3 296.4,504.5 297.1,500.9 297.9,525.1 298.6,505.9 299.3,525.2 300.0,514.1 300.7,535.1 301.4,534.1 302.1,493.3 302.8,507.9 303.5,532.2 304.3,511.8 305.0,500.7 305.7,525.1 306.4,538.5 307.1,507.7 307.8,515.3 308.5,512.3 309.2,515.5 309.9,517.5 310.7,540.3 311.4,500.5 312.1,545.8 312.8,527.7 313.5,532.4 314.2,548.0 314.9,530.9 315.6,500.5 316.3,539.0 317.1,536.6 317.8,536.7 318.5,529.7 319.2,535.9 319.9,551.9 320.6,533.0 321.3,503.7 322.0,520.6 322.8,542.0 323.5,537.7 324.2,493.3 324.9,536.3 325.6,513.5 326.3,534.3 327.0,522.4 327.7,535.5 328.4,537.0 329.2,519.1 329.9,516.5 330.6,529.5 331.3,510.7 332.0,511.6 332.7,511.7 333.4,532.5 334.1,541.7 334.8,530.2 335.6,538.7 336.3,538.7 337.0,518.1 337.7,551.7 338.4,511.9 339.1,538.4 339.8,528.9 340.5,551.2 341.2,504.4 342.0,533.6 342.7,513.7 343.4,504.2 344.1,533.6 344.8,531.0 345.5,521.2 346.2,520.4 346.9,507.3 347.6,486.1 348.4,537.6 349.1,537.6 349.8,482.9 350.5,516.8 351.2,520.2 351.9,539.8 352.6,518.6 353.3,532.6 354.0,548.3 354.8,530.8 355.5,515.9 356.2,540.1 356.9,516.2 357.6,533.2 358.3,539.3 359.0,534.9 359.7,509.9 360.4,475.3 361.2,512.7 361.9,535.7 362.6,507.0 363.3,529.3 364.0,526.2 364.7,527.8 365.4,505.9 366.1,536.4 366.8,511.7 367.6,497.8 368.3,510.1 369.0,515.7 369.7,489.7 370.4,524.2 371.1,514.5 371.8,536.6 372.5,532.9 373.2,514.4 374.0,502.0 374.7,537.1 375.4,493.3 376.1,536.4 376.8,490.4 377.5,535.2 378.2,501.0 378.9,525.5 379.6,506.1 380.4,532.4 381.1,507.8 381.8,526.0 382.5,515.8 383.2,527.3 383.9,507.8 384.6,543.7 385.3,516.5 386.0,489.7 386.8,465.6 387.5,527.9 388.2,508.7 388.9,509.0 389.6,513.1 390.3,509.8 391.0,511.3 391.7,537.2 392.4,507.7 393.2,529.7 393.9,511.5 394.6,525.6 395.3,466.9 396.0,506.9 396.7,511.9 397.4,536.9 398.1,511.7 398.8,537.9 399.6,489.7 400.3,530.8 401.0,515.5 401.7,533.9 402.4,509.8 403.1,524.7 403.8,533.5 404.5,535.6 405.2,538.2 406.0,529.9 406.7,504.8 407.4,496.9 408.1,515.8 408.8,538.0 409.5,510.1 410.2,527.0 410.9,528.2 411.6,537.0 412.4,530.7 413.1,527.5 413.8,508.7 414.5,529.8 415.2,518.0 415.9,526.9 416.6,540.0 417.3,539.8 418.0,489.7 418.8,540.3 419.5,503.0 420.2,516.9 420.9,512.2 421.6,529.8 422.3,514.3 423.0,542.5 423.7,531.5 424.4,531.0 425.2,533.3 425.9,524.1 426.6,510.5 427.3,517.3 428.0,517.9 428.7,531.6 429.4,519.4 430.1,475.3 430.9,520.2 431.6,538.7 432.3,503.0 433.0,506.9 433.7,516.8 434.4,513.2 435.1,514.1 435.8,493.3 436.5,460.9 437.3,539.4 438.0,518.8 438.7,516.5 439.4,516.4 440.1,543.0 440.8,471.4 441.5,536.7 442.2,521.6 442.9,530.8 443.7,519.8 444.4,517.3 445.1,504.8 445.8,542.1 446.5,518.5 447.2,500.5 447.9,516.8 448.6,528.0 449.3,509.8 450.1,529.3 450.8,517.4 451.5,532.8 452.2,519.7 452.9,533.3 453.6,519.4 454.3,537.5 455.0,529.8 455.7,530.1 456.5,518.3 457.2,537.0 457.9,519.2 458.6,538.1 459.3,491.5 460.0,533.5 460.7,532.5 461.4,529.3 462.1,518.1 462.9,531.8 463.6,514.4 464.3,517.2 465.0,532.9 465.7,512.9 466.4,512.5 467.1,552.1 467.8,535.9 468.5,491.9 469.3,480.6 470.0,527.9 470.7,517.8 471.4,500.5 472.1,529.3 472.8,516.7 473.5,507.9 474.2,530.5 474.9,514.1 475.7,537.2 476.4,500.5 477.1,491.3 477.8,525.6 478.5,516.5" fill="none" stroke="#ff0000" stroke-width="1" stroke-linejoin="miter" shape-rendering="crispEdges"/>
<polyline points="52.5,607.2 53.2,604.2 53.9,607.7 54.6,602.9 55.3,597.9 56.1,599.9 56.8,599.4 57.5,601.5 58.2,598.1 58.9,594.6 59.6,599.8 60.3,597.7 61.0,597.8 61.7,593.0 62.5,595.3 63.2,594.3 63.9,595.2 64.6,595.7 65.3,592.8 66.0,596.4 66.7,598.3 67.4,601.1 68.1,597.7 68.9,594.3 69.6,596.8 70.3,597.1 71.0,597.5 71.7,594.9 72.4,595.2 73.1,595.6 73.8,598.5 74.5,598.2 75.3,599.5 76.0,597.9 76.7,596.3 77.4,594.8 78.1,599.5 78.8,598.5 79.5,596.6 80.2,599.0 80.9,598.4 81.7,597.8 82.4,596.8 83.1,596.7 83.8,596.3 84.5,598.8 85.2,605.3 85.9,599.6 86.6,598.8 87.3,598.4 88.1,603.8 88.8,600.3 89.5,602.2 90.2,600.3 90.9,597.6 91.6,597.5 92.3,598.4 93.0,594.8 93.7,596.9 94.5,598.4 95.2,599.8 95.9,600.0 96.6,600.6 97.3,595.0 98.0,597.5 98.7,598.0 99.4,595.0 100.1,594.4 100.9,591.8 101.6,594.2 102.3,595.8 103.0,598.4 103.7,594.9 104.4,595.5 105.1,591.1 105.8,594.0 106.6,599.0 107.3,594.4 108.0,600.2 108.7,592.1 109.4,593.1 110.1,589.7 110.8,596.9 111.5,597.7 112.2,592.9 113.0,599.3 113.7,595.4 114.4,598.1 115.1,598.7 115.8,599.0 116.5,602.0 117.2,596.8 117.9,598.5 118.6,597.1 119.4,596.6 120.1,601.9 120.8,598.8 121.5,600.3 122.2,595.4 122.9,601.0 123.6,597.6 124.3,599.2 125.0,598.1 125.8,595.7 126.5,595.6 127.2,597.5 127.9,597.0 128.6,596.4 129.3,597.5 130.0,596.7 130.7,597.1 131.4,596.8 132.2,600.0 132.9,599.9 133.6,597.3 134.3,594.7 135.0,596.6 135.7,597.1 136.4,598.8 137.1,596.9 137.8,601.0 138.6,595.1 139.3,593.8 140.0,596.9 140.7,596.7 141.4,591.8 142.1,601.9 142.8,594.1 143.5,598.2 144.2,593.2 145.0,592.3 145.7,593.8 146.4,591.7 147.1,597.8 147.8,597.0 148.5,593.9 149.2,598.5 149.9,595.8 150.6,599.1 151.4,594.4 152.1,596.6 152.8,599.2 153.5,596.8 154.2,596.3 154.9,598.4 155.6,598.6 156.3,593.6 157.0,596.4 157.8,601.1 158.5,596.3 159.2,596.9 159.9,603.2 160.6,601.0 161.3,599.3 162.0,596.2 162.7,599.1 163.4,602.4 164.2,598.1 164.9,596.5 165.6,601.2 166.3,597.3 167.0,602.8 167.7,594.6 168.4,593.0 169.1,595.7 169.8,595.2 170.6,595.0 171.3,602.2 172.0,597.6 172.7,594.6 173.4,600.9 174.1,598.2 174.8,595.1 175.5,593.9 176.2,597.1 177.0,596.3 177.7,594.3 178.4,596.6 179.1,596.6 179.8,594.6 180.5,595.4 181.2,592.2 181.9,594.8 182.6,594.4 183.4,595.1 184.1,593.4 184.8,597.6 185.5,598.7 186.2,597.6 186.9,593.4 187.6,595.3 188.3,593.6 189.0,595.4 189.8,596.3 190.5,597.5 191.2,592.0 191.9,594.8 192.6,596.5 193.3,593.9 194.0,593.3 194.7,600.4 195.4,600.3 196.2,598.4 196.9,596.1 197.6,601.5 198.3,600.9 199.0,597.5 199.7,599.1 200.4,599.0 201.1,600.7 201.8,599.1 202.6,598.7 203.3,599.0 204.0,596.5 204.7,598.9 205.4,597.9 206.1,601.4 206.8,598.2 207.5,599.3 208.2,601.4 209.0,599.3 209.7,595.2 210.4,593.3 211.1,595.8 211.8,594.6 212.5,594.1 213.2,600.1 213.9,598.9 214.7,592.8 215.4,597.4 216.1,597.3 216.8,595.9 217.5,595.9 218.2,592.7 218.9,592.3 219.6,595.8 220.3,595.8 221.1,595.7 221.8,593.6 222.5,596.0 223.2,595.7 223.9,593.8 224.6,596.5 225.3,594.6 226.0,595.2 226.7,600.1 227.5,601.0 228.2,600.1 228.9,598.8 229.6,598.4 230.3,596.2 231.0,593.8 231.7,598.9 232.4,593.9 233.1,594.9 233.9,601.6 234.6,600.1 235.3,592.6 236.0,596.5 236.7,596.1 237.4,598.8 238.1,597.5 238.8,596.7 239.5,603.3 240.3,597.4 241.0,597.4 241.7,597.7 242.4,603.1 243.1,601.4 243.8,601.0 244.5,601.7 245.2,596.7 245.9,600.2 246.7,598.7 247.4,597.9 248.1,598.5 248.8,598.0 249.5,598.3 250.2,599.6 250.9,599.5 251.6,598.3 252.3,597.5 253.1,596.4 253.8,592.5 254.5,600.0 255.2,597.4 255.9,597.4 256.6,595.3 257.3,596.8 258.0,598.1 258.7,596.5 259.5,596.4 260.2,593.8 260.9,595.4 261.6,592.9 262.3,598.7 263.0,595.0 263.7,594.7 264.4,599.0 265.1,592.7 265.9,594.5 266.6,597.2 267.3,594.5 268.0,597.7 268.7,596.6 269.4,602.1 270.1,595.6 270.8,597.2 271.5,594.2 272.3,597.4 273.0,596.3 273.7,600.6 274.4,597.9 275.1,596.2 275.8,599.3 276.5,598.7 277.2,597.7 277.9,597.5 278.7,597.4 279.4,601.4 280.1,601.1 280.8,601.5 281.5,600.6 282.2,593.9 282.9,600.4 283.6,597.4 284.3,599.7 285.1,600.2 285.8,597.9 286.5,599.9 287.2,598.4 287.9,596.6 288.6,596.0 289.3,595.8 290.0,600.7 290.7,598.8 291.5,599.9 292.2,599.8 292.9,600.7 293.6,598.0 294.3,602.1 295.0,600.7 295.7,594.9 296.4,596.0 297.1,596.3 297.9,592.2 298.6,599.4 299.3,595.9 300.0,595.6 300.7,596.9 301.4,594.9 302.1,596.0 302.8,591.9 303.5,594.8 304.3,595.3 305.0,594.9 305.7,592.3 306.4,594.8 307.1,593.1 307.8,597.0 308.5,600.4 309.2,595.4 309.9,596.7 310.7,599.3 311.4,596.2 312.1,598.0 312.8,592.9 313.5,594.9 314.2,597.4 314.9,599.6 315.6,597.0 316.3,596.6 317.1,596.7 317.8,601.7 318.5,596.1 319.2,601.2 319.9,594.3 320.6,597.8 321.3,596.3 322.0,598.0 322.8,601.1 323.5,600.4 324.2,599.7 324.9,599.5 325.6,596.5 326.3,599.3 327.0,600.9 327.7,594.7 328.4,593.9 329.2,598.4 329.9,600.5 330.6,597.8 331.3,600.2 332.0,597.3 332.7,599.2 333.4,598.0 334.1,597.4 334.8,598.4 335.6,596.4 336.3,594.2 337.0,596.7 337.7,597.6 338.4,596.4 339.1,595.9 339.8,594.1 340.5,597.4 341.2,594.8 342.0,593.4 342.7,592.2 343.4,593.1 344.1,599.6 344.8,598.2 345.5,595.5 346.2,595.0 346.9,594.4 347.6,595.3 348.4,597.3 349.1,600.2 349.8,591.8 350.5,594.5 351.2,598.4 351.9,597.9 352.6,596.6 353.3,593.5 354.0,595.0 354.8,595.2 355.5,596.9 356.2,598.3 356.9,600.0 357.6,596.3 358.3,597.9 359.0,600.7 359.7,600.7 360.4,597.9 361.2,598.9 361.9,598.6 362.6,599.7 363.3,599.7 364.0,598.1 364.7,599.1 365.4,596.5 366.1,600.6 366.8,598.9 367.6,596.5 368.3,595.9 369.0,597.3 369.7,599.6 370.4,597.6 371.1,598.7 371.8,600.4 372.5,598.0 373.2,598.5 374.0,596.3 374.7,598.0 375.4,595.8 376.1,598.1 376.8,596.6 377.5,594.0 378.2,601.8 378.9,593.4 379.6,598.4 380.4,597.4 381.1,595.8 381.8,598.3 382.5,594.7 383.2,596.3 383.9,594.1 384.6,598.1 385.3,599.8 386.0,596.0 386.8,597.9 387.5,594.3 388.2,600.5 388.9,597.5 389.6,597.0 390.3,596.8 391.0,596.4 391.7,597.4 392.4,594.3 393.2,600.7 393.9,597.5 394.6,600.5 395.3,600.2 396.0,598.3 396.7,596.5 397.4,599.5 398.1,598.6 398.8,601.9 399.6,598.2 400.3,601.5 401.0,599.3 401.7,601.8 402.4,598.4 403.1,597.9 403.8,598.8 404.5,602.2 405.2,597.0 406.0,599.8 406.7,599.2 407.4,596.1 408.1,600.6 408.8,598.4 409.5,597.7 410.2,600.2 410.9,598.0 411.6,597.5 412.4,601.2 413.1,598.1 413.8,597.3 414.5,598.1 415.2,596.9 415.9,592.7 416.6,597.4 417.3,599.5 418.0,598.4 418.8,599.4 419.5,595.9 420.2,596.9 420.9,594.7 421.6,594.9 422.3,593.0 423.0,596.6 423.7,594.0 424.4,594.8 425.2,593.4 425.9,593.3 426.6,595.2 427.3,594.3 428.0,596.2 428.7,597.2 429.4,592.8 430.1,597.8 430.9,594.1 431.6,593.1 432.3,596.3 433.0,600.4 433.7,600.3 434.4,596.9 435.1,601.2 435.8,599.4 436.5,596.8 437.3,597.9 438.0,598.5 438.7,601.6 439.4,598.3 440.1,597.4 440.8,600.6 441.5,602.7 442.2,601.7 442.9,597.7 443.7,604.8 444.4,599.1 445.1,601.7 445.8,602.6 446.5,602.8 447.2,599.5 447.9,597.2 448.6,600.8 449.3,601.2 450.1,597.2 450.8,596.9 451.5,597.2 452.2,598.8 452.9,597.1 453.6,603.5 454.3,596.8 455.0,600.1 455.7,596.0 456.5,600.3 457.2,596.0 457.9,600.9 458.6,596.8 459.3,595.8 460.0,593.0 460.7,594.4 461.4,598.8 462.1,593.3 462.9,591.5 463.6,594.5 464.3,592.5 465.0,596.0 465.7,596.6 466.4,594.5 467.1,595.9 467.8,592.6 468.5,598.0 469.3,598.2 470.0,593.9 470.7,594.3 471.4,600.8 472.1,596.3 472.8,596.8 473.5,595.4 474.2,591.2 474.9,598.3 475.7,597.0 476.4,599.8 477.1,598.0 477.8,595.5 478.5,597.9" fill="none" stroke="#00ff00" stroke-width="1" stroke-linejoin="miter" shape-rendering="crispEdges"/>
<rect x="343.2" y="378.5" width="127.8" height="15" fill="#000"/>
<text x="470.5" y="390" font-size="10.67" text-anchor="end" fill="#00ecf4" >EVM Peak Sub-Carrier: 16</text>
<rect x="52" y="374" width="1" height="271" fill="#b8b8b8" />
<rect x="52" y="644" width="427" height="1" fill="#b8b8b8" />
<text transform="translate(49.5,376) scale(0.82,1)" font-size="9" text-anchor="end" fill="#e4e4e4" >7.5</text>
<text transform="translate(49.5,394) scale(0.82,1)" font-size="9" text-anchor="end" fill="#e4e4e4" >7.0</text>
<text transform="translate(49.5,412) scale(0.82,1)" font-size="9" text-anchor="end" fill="#e4e4e4" >6.5</text>
<text transform="translate(49.5,430) scale(0.82,1)" font-size="9" text-anchor="end" fill="#e4e4e4" >6.0</text>
<text transform="translate(49.5,448) scale(0.82,1)" font-size="9" text-anchor="end" fill="#e4e4e4" >5.5</text>
<text transform="translate(49.5,466) scale(0.82,1)" font-size="9" text-anchor="end" fill="#e4e4e4" >5.0</text>
<text transform="translate(49.5,484) scale(0.82,1)" font-size="9" text-anchor="end" fill="#e4e4e4" >4.5</text>
<text transform="translate(49.5,502) scale(0.82,1)" font-size="9" text-anchor="end" fill="#e4e4e4" >4.0</text>
<text transform="translate(49.5,520) scale(0.82,1)" font-size="9" text-anchor="end" fill="#e4e4e4" >3.5</text>
<text transform="translate(49.5,538) scale(0.82,1)" font-size="9" text-anchor="end" fill="#e4e4e4" >3.0</text>
<text transform="translate(49.5,556) scale(0.82,1)" font-size="9" text-anchor="end" fill="#e4e4e4" >2.5</text>
<text transform="translate(49.5,574) scale(0.82,1)" font-size="9" text-anchor="end" fill="#e4e4e4" >2.0</text>
<text transform="translate(49.5,592) scale(0.82,1)" font-size="9" text-anchor="end" fill="#e4e4e4" >1.5</text>
<text transform="translate(49.5,610) scale(0.82,1)" font-size="9" text-anchor="end" fill="#e4e4e4" >1.0</text>
<text transform="translate(49.5,628) scale(0.82,1)" font-size="9" text-anchor="end" fill="#e4e4e4" >0.5</text>
<text transform="translate(49.5,646) scale(0.82,1)" font-size="9" text-anchor="end" fill="#e4e4e4" >0.0</text>
<text transform="translate(52,655) scale(0.82,1)" font-size="9" text-anchor="middle" fill="#e4e4e4" >1</text>
<text transform="translate(95,655) scale(0.82,1)" font-size="9" text-anchor="middle" fill="#e4e4e4" >61</text>
<text transform="translate(137,655) scale(0.82,1)" font-size="9" text-anchor="middle" fill="#e4e4e4" >121</text>
<text transform="translate(180,655) scale(0.82,1)" font-size="9" text-anchor="middle" fill="#e4e4e4" >181</text>
<text transform="translate(222,655) scale(0.82,1)" font-size="9" text-anchor="middle" fill="#e4e4e4" >241</text>
<text transform="translate(265,655) scale(0.82,1)" font-size="9" text-anchor="middle" fill="#e4e4e4" >301</text>
<text transform="translate(308,655) scale(0.82,1)" font-size="9" text-anchor="middle" fill="#e4e4e4" >360</text>
<text transform="translate(350,655) scale(0.82,1)" font-size="9" text-anchor="middle" fill="#e4e4e4" >420</text>
<text transform="translate(393,655) scale(0.82,1)" font-size="9" text-anchor="middle" fill="#e4e4e4" >480</text>
<text transform="translate(435,655) scale(0.82,1)" font-size="9" text-anchor="middle" fill="#e4e4e4" >540</text>
<text transform="translate(478,655) scale(0.82,1)" font-size="9" text-anchor="middle" fill="#e4e4e4" >600</text>
<text x="0" y="0" font-size="12.2" text-anchor="middle" fill="#e4e4e4" transform="translate(22.5,509) rotate(-90)">EVM (%)</text>
<text x="265" y="668" font-size="10.67" text-anchor="middle" fill="#e4e4e4" >Subcarrier</text>
<rect x="534" y="374" width="426" height="271" fill="#000" />
<g shape-rendering="crispEdges">
<rect x="534" y="374" width="427" height="1" fill="#1c1c1c"/>
<line x1="534" y1="374.5" x2="961" y2="374.5" stroke="#5e5e5e" stroke-dasharray="3 3" />
<rect x="534" y="392" width="427" height="1" fill="#1c1c1c"/>
<line x1="534" y1="392.5" x2="961" y2="392.5" stroke="#5e5e5e" stroke-dasharray="3 3" />
<rect x="534" y="410" width="427" height="1" fill="#1c1c1c"/>
<line x1="534" y1="410.5" x2="961" y2="410.5" stroke="#5e5e5e" stroke-dasharray="3 3" />
<rect x="534" y="428" width="427" height="1" fill="#1c1c1c"/>
<line x1="534" y1="428.5" x2="961" y2="428.5" stroke="#5e5e5e" stroke-dasharray="3 3" />
<rect x="534" y="446" width="427" height="1" fill="#1c1c1c"/>
<line x1="534" y1="446.5" x2="961" y2="446.5" stroke="#5e5e5e" stroke-dasharray="3 3" />
<rect x="534" y="464" width="427" height="1" fill="#1c1c1c"/>
<line x1="534" y1="464.5" x2="961" y2="464.5" stroke="#5e5e5e" stroke-dasharray="3 3" />
<rect x="534" y="482" width="427" height="1" fill="#1c1c1c"/>
<line x1="534" y1="482.5" x2="961" y2="482.5" stroke="#5e5e5e" stroke-dasharray="3 3" />
<rect x="534" y="500" width="427" height="1" fill="#1c1c1c"/>
<line x1="534" y1="500.5" x2="961" y2="500.5" stroke="#5e5e5e" stroke-dasharray="3 3" />
<rect x="534" y="518" width="427" height="1" fill="#1c1c1c"/>
<line x1="534" y1="518.5" x2="961" y2="518.5" stroke="#5e5e5e" stroke-dasharray="3 3" />
<rect x="534" y="536" width="427" height="1" fill="#1c1c1c"/>
<line x1="534" y1="536.5" x2="961" y2="536.5" stroke="#5e5e5e" stroke-dasharray="3 3" />
<rect x="534" y="554" width="427" height="1" fill="#1c1c1c"/>
<line x1="534" y1="554.5" x2="961" y2="554.5" stroke="#5e5e5e" stroke-dasharray="3 3" />
<rect x="534" y="572" width="427" height="1" fill="#1c1c1c"/>
<line x1="534" y1="572.5" x2="961" y2="572.5" stroke="#5e5e5e" stroke-dasharray="3 3" />
<rect x="534" y="590" width="427" height="1" fill="#1c1c1c"/>
<line x1="534" y1="590.5" x2="961" y2="590.5" stroke="#5e5e5e" stroke-dasharray="3 3" />
<rect x="534" y="608" width="427" height="1" fill="#1c1c1c"/>
<line x1="534" y1="608.5" x2="961" y2="608.5" stroke="#5e5e5e" stroke-dasharray="3 3" />
<rect x="534" y="626" width="427" height="1" fill="#1c1c1c"/>
<line x1="534" y1="626.5" x2="961" y2="626.5" stroke="#5e5e5e" stroke-dasharray="3 3" />
<rect x="577" y="374" width="1" height="270" fill="#1c1c1c"/>
<line x1="577.5" y1="374" x2="577.5" y2="644" stroke="#5e5e5e" stroke-dasharray="3 3" stroke-dashoffset="0" />
<rect x="619" y="374" width="1" height="270" fill="#1c1c1c"/>
<line x1="619.5" y1="374" x2="619.5" y2="644" stroke="#5e5e5e" stroke-dasharray="3 3" stroke-dashoffset="0" />
<rect x="662" y="374" width="1" height="270" fill="#1c1c1c"/>
<line x1="662.5" y1="374" x2="662.5" y2="644" stroke="#5e5e5e" stroke-dasharray="3 3" stroke-dashoffset="0" />
<rect x="704" y="374" width="1" height="270" fill="#1c1c1c"/>
<line x1="704.5" y1="374" x2="704.5" y2="644" stroke="#5e5e5e" stroke-dasharray="3 3" stroke-dashoffset="0" />
<rect x="747" y="374" width="1" height="270" fill="#1c1c1c"/>
<line x1="747.5" y1="374" x2="747.5" y2="644" stroke="#5e5e5e" stroke-dasharray="3 3" stroke-dashoffset="0" />
<rect x="790" y="374" width="1" height="270" fill="#1c1c1c"/>
<line x1="790.5" y1="374" x2="790.5" y2="644" stroke="#5e5e5e" stroke-dasharray="3 3" stroke-dashoffset="0" />
<rect x="832" y="374" width="1" height="270" fill="#1c1c1c"/>
<line x1="832.5" y1="374" x2="832.5" y2="644" stroke="#5e5e5e" stroke-dasharray="3 3" stroke-dashoffset="0" />
<rect x="875" y="374" width="1" height="270" fill="#1c1c1c"/>
<line x1="875.5" y1="374" x2="875.5" y2="644" stroke="#5e5e5e" stroke-dasharray="3 3" stroke-dashoffset="0" />
<rect x="917" y="374" width="1" height="270" fill="#1c1c1c"/>
<line x1="917.5" y1="374" x2="917.5" y2="644" stroke="#5e5e5e" stroke-dasharray="3 3" stroke-dashoffset="0" />
<rect x="960" y="374" width="1" height="270" fill="#1c1c1c"/>
<line x1="960.5" y1="374" x2="960.5" y2="644" stroke="#484848" stroke-dasharray="3 3" stroke-dashoffset="0" />
</g>
<polyline points="535.5,523.5 535.5,644.5 538.5,644.5 538.5,644.5 541.5,644.5 541.5,644.5 544.5,644.5 544.5,531.5 547.5,531.5 547.5,644.5 550.5,644.5 550.5,644.5 553.5,644.5 553.5,549.5 557.5,549.5 557.5,576.5 560.5,576.5 560.5,547.5 563.5,547.5 563.5,575.5 566.5,575.5 566.5,538.5 569.5,538.5 569.5,644.5 572.5,644.5 572.5,644.5 575.5,644.5 575.5,542.5 578.5,542.5 578.5,644.5 581.5,644.5 581.5,644.5 584.5,644.5 584.5,644.5 587.5,644.5 587.5,567.5 590.5,567.5 590.5,644.5 593.5,644.5 593.5,644.5 596.5,644.5 596.5,544.5 599.5,544.5 599.5,644.5 603.5,644.5 603.5,644.5 606.5,644.5 606.5,644.5 609.5,644.5 609.5,531.5 612.5,531.5 612.5,644.5 615.5,644.5 615.5,644.5 618.5,644.5 618.5,551.5 621.5,551.5 621.5,644.5 624.5,644.5 624.5,644.5 627.5,644.5 627.5,644.5 630.5,644.5 630.5,553.5 633.5,553.5 633.5,644.5 636.5,644.5 636.5,644.5 639.5,644.5 639.5,572.5 642.5,572.5 642.5,644.5 645.5,644.5 645.5,644.5 648.5,644.5 648.5,644.5 652.5,644.5 652.5,581.5 655.5,581.5 655.5,644.5 658.5,644.5 658.5,644.5 661.5,644.5 661.5,564.5 664.5,564.5 664.5,644.5 667.5,644.5 667.5,644.5 670.5,644.5 670.5,644.5 673.5,644.5 673.5,546.5 676.5,546.5 676.5,644.5 679.5,644.5 679.5,644.5 682.5,644.5 682.5,562.5 685.5,562.5 685.5,644.5 688.5,644.5 688.5,644.5 691.5,644.5 691.5,644.5 694.5,644.5 694.5,571.5 698.5,571.5 698.5,644.5 701.5,644.5 701.5,644.5 704.5,644.5 704.5,518.5 707.5,518.5 707.5,644.5 710.5,644.5 710.5,644.5 713.5,644.5 713.5,644.5 716.5,644.5 716.5,532.5 719.5,532.5 719.5,644.5 722.5,644.5 722.5,644.5 725.5,644.5 725.5,571.5 728.5,571.5 728.5,644.5 731.5,644.5 731.5,644.5 734.5,644.5 734.5,644.5 737.5,644.5 737.5,524.5 740.5,524.5 740.5,644.5 743.5,644.5 743.5,644.5 747.5,644.5 747.5,555.5 750.5,555.5 750.5,644.5 753.5,644.5 753.5,644.5 756.5,644.5 756.5,644.5 759.5,644.5 759.5,550.5 762.5,550.5 762.5,644.5 765.5,644.5 765.5,644.5 768.5,644.5 768.5,552.5 771.5,552.5 771.5,644.5 774.5,644.5 774.5,644.5 777.5,644.5 777.5,644.5 780.5,644.5 780.5,537.5 783.5,537.5 783.5,644.5 786.5,644.5 786.5,644.5 789.5,644.5 789.5,502.5 793.5,502.5 793.5,644.5 796.5,644.5 796.5,644.5 799.5,644.5 799.5,644.5 802.5,644.5 802.5,517.5 805.5,517.5 805.5,644.5 808.5,644.5 808.5,644.5 811.5,644.5 811.5,514.5 814.5,514.5 814.5,644.5 817.5,644.5 817.5,644.5 820.5,644.5 820.5,644.5 823.5,644.5 823.5,564.5 826.5,564.5 826.5,644.5 829.5,644.5 829.5,644.5 832.5,644.5 832.5,564.5 835.5,564.5 835.5,644.5 839.5,644.5 839.5,644.5 842.5,644.5 842.5,644.5 845.5,644.5 845.5,572.5 848.5,572.5 848.5,644.5 851.5,644.5 851.5,644.5 854.5,644.5 854.5,550.5 857.5,550.5 857.5,644.5 860.5,644.5 860.5,644.5 863.5,644.5 863.5,644.5 866.5,644.5 866.5,470.5 869.5,470.5 869.5,644.5 872.5,644.5 872.5,644.5 875.5,644.5 875.5,558.5 878.5,558.5 878.5,644.5 881.5,644.5 881.5,644.5 884.5,644.5 884.5,644.5 888.5,644.5 888.5,560.5 891.5,560.5 891.5,644.5 894.5,644.5 894.5,644.5 897.5,644.5 897.5,571.5 900.5,571.5 900.5,644.5 903.5,644.5 903.5,644.5 906.5,644.5 906.5,644.5 909.5,644.5 909.5,560.5 912.5,560.5 912.5,644.5 915.5,644.5 915.5,644.5 918.5,644.5 918.5,578.5 921.5,578.5 921.5,644.5 924.5,644.5 924.5,644.5 927.5,644.5 927.5,644.5 930.5,644.5 930.5,548.5 934.5,548.5 934.5,644.5 937.5,644.5 937.5,644.5 940.5,644.5 940.5,548.5 943.5,548.5 943.5,644.5 946.5,644.5 946.5,644.5 949.5,644.5 949.5,644.5 952.5,644.5 952.5,549.5 955.5,549.5 955.5,644.5 958.5,644.5 958.5,644.5 960.5,644.5" fill="none" stroke="#5a1eaa" stroke-width="1" stroke-linejoin="miter" shape-rendering="crispEdges"/>
<polyline points="535.5,644.5 538.5,644.5 538.5,644.5 541.5,644.5 541.5,644.5 544.5,644.5 544.5,601.5 547.5,601.5 547.5,644.5 550.5,644.5 550.5,644.5 553.5,644.5 553.5,608.5 557.5,608.5 557.5,616.5 560.5,616.5 560.5,604.5 563.5,604.5 563.5,608.5 566.5,608.5 566.5,601.5 569.5,601.5 569.5,644.5 572.5,644.5 572.5,644.5 575.5,644.5 575.5,604.5 578.5,604.5 578.5,644.5 581.5,644.5 581.5,644.5 584.5,644.5 584.5,644.5 587.5,644.5 587.5,605.5 590.5,605.5 590.5,644.5 593.5,644.5 593.5,644.5 596.5,644.5 596.5,601.5 599.5,601.5 599.5,644.5 603.5,644.5 603.5,644.5 606.5,644.5 606.5,644.5 609.5,644.5 609.5,601.5 612.5,601.5 612.5,644.5 615.5,644.5 615.5,644.5 618.5,644.5 618.5,606.5 621.5,606.5 621.5,644.5 624.5,644.5 624.5,644.5 627.5,644.5 627.5,644.5 630.5,644.5 630.5,603.5 633.5,603.5 633.5,644.5 636.5,644.5 636.5,644.5 639.5,644.5 639.5,612.5 642.5,612.5 642.5,644.5 645.5,644.5 645.5,644.5 648.5,644.5 648.5,644.5 652.5,644.5 652.5,615.5 655.5,615.5 655.5,644.5 658.5,644.5 658.5,644.5 661.5,644.5 661.5,608.5 664.5,608.5 664.5,644.5 667.5,644.5 667.5,644.5 670.5,644.5 670.5,644.5 673.5,644.5 673.5,597.5 676.5,597.5 676.5,644.5 679.5,644.5 679.5,644.5 682.5,644.5 682.5,608.5 685.5,608.5 685.5,644.5 688.5,644.5 688.5,644.5 691.5,644.5 691.5,644.5 694.5,644.5 694.5,608.5 698.5,608.5 698.5,644.5 701.5,644.5 701.5,644.5 704.5,644.5 704.5,597.5 707.5,597.5 707.5,644.5 710.5,644.5 710.5,644.5 713.5,644.5 713.5,644.5 716.5,644.5 716.5,601.5 719.5,601.5 719.5,644.5 722.5,644.5 722.5,644.5 725.5,644.5 725.5,604.5 728.5,604.5 728.5,644.5 731.5,644.5 731.5,644.5 734.5,644.5 734.5,644.5 737.5,644.5 737.5,597.5 740.5,597.5 740.5,644.5 743.5,644.5 743.5,644.5 747.5,644.5 747.5,605.5 750.5,605.5 750.5,644.5 753.5,644.5 753.5,644.5 756.5,644.5 756.5,644.5 759.5,644.5 759.5,604.5 762.5,604.5 762.5,644.5 765.5,644.5 765.5,644.5 768.5,644.5 768.5,601.5 771.5,601.5 771.5,644.5 774.5,644.5 774.5,644.5 777.5,644.5 777.5,644.5 780.5,644.5 780.5,597.5 783.5,597.5 783.5,644.5 786.5,644.5 786.5,644.5 789.5,644.5 789.5,588.5 793.5,588.5 793.5,644.5 796.5,644.5 796.5,644.5 799.5,644.5 799.5,644.5 802.5,644.5 802.5,594.5 805.5,594.5 805.5,644.5 808.5,644.5 808.5,644.5 811.5,644.5 811.5,594.5 814.5,594.5 814.5,644.5 817.5,644.5 817.5,644.5 820.5,644.5 820.5,644.5 823.5,644.5 823.5,609.5 826.5,609.5 826.5,644.5 829.5,644.5 829.5,644.5 832.5,644.5 832.5,607.5 835.5,607.5 835.5,644.5 839.5,644.5 839.5,644.5 842.5,644.5 842.5,644.5 845.5,644.5 845.5,610.5 848.5,610.5 848.5,644.5 851.5,644.5 851.5,644.5 854.5,644.5 854.5,595.5 857.5,595.5 857.5,644.5 860.5,644.5 860.5,644.5 863.5,644.5 863.5,644.5 866.5,644.5 866.5,579.5 869.5,579.5 869.5,644.5 872.5,644.5 872.5,644.5 875.5,644.5 875.5,605.5 878.5,605.5 878.5,644.5 881.5,644.5 881.5,644.5 884.5,644.5 884.5,644.5 888.5,644.5 888.5,605.5 891.5,605.5 891.5,644.5 894.5,644.5 894.5,644.5 897.5,644.5 897.5,609.5 900.5,609.5 900.5,644.5 903.5,644.5 903.5,644.5 906.5,644.5 906.5,644.5 909.5,644.5 909.5,604.5 912.5,604.5 912.5,644.5 915.5,644.5 915.5,644.5 918.5,644.5 918.5,617.5 921.5,617.5 921.5,644.5 924.5,644.5 924.5,644.5 927.5,644.5 927.5,644.5 930.5,644.5 930.5,603.5 934.5,603.5 934.5,644.5 937.5,644.5 937.5,644.5 940.5,644.5 940.5,605.5 943.5,605.5 943.5,644.5 946.5,644.5 946.5,644.5 949.5,644.5 949.5,644.5 952.5,644.5 952.5,601.5 955.5,601.5 955.5,644.5 958.5,644.5 958.5,644.5 960.5,644.5" fill="none" stroke="#5a1eaa" stroke-width="1" stroke-linejoin="miter" shape-rendering="crispEdges"/>
<polyline points="535.5,617.5 535.5,534.5 538.5,534.5 538.5,546.5 541.5,546.5 541.5,540.5 544.5,540.5 544.5,530.5 547.5,530.5 547.5,523.5 550.5,523.5 550.5,563.5 553.5,563.5 553.5,502.5 557.5,502.5 557.5,546.5 560.5,546.5 560.5,518.5 563.5,518.5 563.5,518.5 566.5,518.5 566.5,529.5 569.5,529.5 569.5,545.5 572.5,545.5 572.5,530.5 575.5,530.5 575.5,644.5 578.5,644.5 578.5,546.5 581.5,546.5 581.5,518.5 584.5,518.5 584.5,524.5 587.5,524.5 587.5,549.5 590.5,549.5 590.5,501.5 593.5,501.5 593.5,485.5 596.5,485.5 596.5,521.5 599.5,521.5 599.5,490.5 603.5,490.5 603.5,540.5 606.5,540.5 606.5,529.5 609.5,529.5 609.5,531.5 612.5,531.5 612.5,527.5 615.5,527.5 615.5,540.5 618.5,540.5 618.5,644.5 621.5,644.5 621.5,490.5 624.5,490.5 624.5,489.5 627.5,489.5 627.5,566.5 630.5,566.5 630.5,546.5 633.5,546.5 633.5,532.5 636.5,532.5 636.5,507.5 639.5,507.5 639.5,563.5 642.5,563.5 642.5,550.5 645.5,550.5 645.5,567.5 648.5,567.5 648.5,535.5 652.5,535.5 652.5,575.5 655.5,575.5 655.5,475.5 658.5,475.5 658.5,530.5 661.5,530.5 661.5,644.5 664.5,644.5 664.5,527.5 667.5,527.5 667.5,529.5 670.5,529.5 670.5,514.5 673.5,514.5 673.5,517.5 676.5,517.5 676.5,538.5 679.5,538.5 679.5,558.5 682.5,558.5 682.5,532.5 685.5,532.5 685.5,500.5 688.5,500.5 688.5,521.5 691.5,521.5 691.5,531.5 694.5,531.5 694.5,545.5 698.5,545.5 698.5,555.5 701.5,555.5 701.5,521.5 704.5,521.5 704.5,644.5 707.5,644.5 707.5,540.5 710.5,540.5 710.5,524.5 713.5,524.5 713.5,531.5 716.5,531.5 716.5,525.5 719.5,525.5 719.5,529.5 722.5,529.5 722.5,559.5 725.5,559.5 725.5,529.5 728.5,529.5 728.5,524.5 731.5,524.5 731.5,517.5 734.5,517.5 734.5,570.5 737.5,570.5 737.5,504.5 740.5,504.5 740.5,536.5 743.5,536.5 743.5,547.5 747.5,547.5 747.5,644.5 750.5,644.5 750.5,461.5 753.5,461.5 753.5,462.5 756.5,462.5 756.5,558.5 759.5,558.5 759.5,524.5 762.5,524.5 762.5,533.5 765.5,533.5 765.5,494.5 768.5,494.5 768.5,525.5 771.5,525.5 771.5,525.5 774.5,525.5 774.5,483.5 777.5,483.5 777.5,555.5 780.5,555.5 780.5,503.5 783.5,503.5 783.5,500.5 786.5,500.5 786.5,543.5 789.5,543.5 789.5,644.5 793.5,644.5 793.5,485.5 796.5,485.5 796.5,558.5 799.5,558.5 799.5,541.5 802.5,541.5 802.5,509.5 805.5,509.5 805.5,506.5 808.5,506.5 808.5,539.5 811.5,539.5 811.5,499.5 814.5,499.5 814.5,503.5 817.5,503.5 817.5,558.5 820.5,558.5 820.5,518.5 823.5,518.5 823.5,557.5 826.5,557.5 826.5,529.5 829.5,529.5 829.5,530.5 832.5,530.5 832.5,644.5 835.5,644.5 835.5,546.5 839.5,546.5 839.5,524.5 842.5,524.5 842.5,557.5 845.5,557.5 845.5,557.5 848.5,557.5 848.5,537.5 851.5,537.5 851.5,508.5 854.5,508.5 854.5,529.5 857.5,529.5 857.5,534.5 860.5,534.5 860.5,542.5 863.5,542.5 863.5,545.5 866.5,545.5 866.5,475.5 869.5,475.5 869.5,481.5 872.5,481.5 872.5,554.5 875.5,554.5 875.5,644.5 878.5,644.5 878.5,544.5 881.5,544.5 881.5,513.5 884.5,513.5 884.5,561.5 888.5,561.5 888.5,544.5 891.5,544.5 891.5,508.5 894.5,508.5 894.5,448.5 897.5,448.5 897.5,544.5 900.5,544.5 900.5,500.5 903.5,500.5 903.5,531.5 906.5,531.5 906.5,508.5 909.5,508.5 909.5,539.5 912.5,539.5 912.5,570.5 915.5,570.5 915.5,527.5 918.5,527.5 918.5,644.5 921.5,644.5 921.5,571.5 924.5,571.5 924.5,531.5 927.5,531.5 927.5,554.5 930.5,554.5 930.5,539.5 934.5,539.5 934.5,492.5 937.5,492.5 937.5,547.5 940.5,547.5 940.5,539.5 943.5,539.5 943.5,518.5 946.5,518.5 946.5,481.5 949.5,481.5 949.5,544.5 952.5,544.5 952.5,529.5 955.5,529.5 955.5,532.5 958.5,532.5 958.5,490.5 960.5,490.5" fill="none" stroke="#ff0000" stroke-width="1.4" stroke-linejoin="miter" shape-rendering="crispEdges"/>
<polyline points="535.5,644.5 535.5,592.5 538.5,592.5 538.5,605.5 541.5,605.5 541.5,598.5 544.5,598.5 544.5,589.5 547.5,589.5 547.5,595.5 550.5,595.5 550.5,609.5 553.5,609.5 553.5,595.5 557.5,595.5 557.5,613.5 560.5,613.5 560.5,594.5 563.5,594.5 563.5,599.5 566.5,599.5 566.5,592.5 569.5,592.5 569.5,599.5 572.5,599.5 572.5,598.5 575.5,598.5 575.5,644.5 578.5,644.5 578.5,602.5 581.5,602.5 581.5,597.5 584.5,597.5 584.5,593.5 587.5,593.5 587.5,604.5 590.5,604.5 590.5,593.5 593.5,593.5 593.5,583.5 596.5,583.5 596.5,594.5 599.5,594.5 599.5,574.5 603.5,574.5 603.5,603.5 606.5,603.5 606.5,599.5 609.5,599.5 609.5,596.5 612.5,596.5 612.5,597.5 615.5,597.5 615.5,599.5 618.5,599.5 618.5,644.5 621.5,644.5 621.5,578.5 624.5,578.5 624.5,585.5 627.5,585.5 627.5,609.5 630.5,609.5 630.5,598.5 633.5,598.5 633.5,596.5 636.5,596.5 636.5,592.5 639.5,592.5 639.5,608.5 642.5,608.5 642.5,605.5 645.5,605.5 645.5,611.5 648.5,611.5 648.5,605.5 652.5,605.5 652.5,610.5 655.5,610.5 655.5,577.5 658.5,577.5 658.5,594.5 661.5,594.5 661.5,644.5 664.5,644.5 664.5,593.5 667.5,593.5 667.5,596.5 670.5,596.5 670.5,593.5 673.5,593.5 673.5,591.5 676.5,591.5 676.5,599.5 679.5,599.5 679.5,603.5 682.5,603.5 682.5,603.5 685.5,603.5 685.5,586.5 688.5,586.5 688.5,595.5 691.5,595.5 691.5,599.5 694.5,599.5 694.5,607.5 698.5,607.5 698.5,605.5 701.5,605.5 701.5,594.5 704.5,594.5 704.5,644.5 707.5,644.5 707.5,601.5 710.5,601.5 710.5,594.5 713.5,594.5 713.5,599.5 716.5,599.5 716.5,595.5 719.5,595.5 719.5,597.5 722.5,597.5 722.5,616.5 725.5,616.5 725.5,599.5 728.5,599.5 728.5,594.5 731.5,594.5 731.5,592.5 734.5,592.5 734.5,614.5 737.5,614.5 737.5,583.5 740.5,583.5 740.5,605.5 743.5,605.5 743.5,603.5 747.5,603.5 747.5,644.5 750.5,644.5 750.5,581.5 753.5,581.5 753.5,579.5 756.5,579.5 756.5,608.5 759.5,608.5 759.5,599.5 762.5,599.5 762.5,596.5 765.5,596.5 765.5,575.5 768.5,575.5 768.5,594.5 771.5,594.5 771.5,600.5 774.5,600.5 774.5,575.5 777.5,575.5 777.5,611.5 780.5,611.5 780.5,590.5 783.5,590.5 783.5,588.5 786.5,588.5 786.5,603.5 789.5,603.5 789.5,644.5 793.5,644.5 793.5,578.5 796.5,578.5 796.5,610.5 799.5,610.5 799.5,604.5 802.5,604.5 802.5,581.5 805.5,581.5 805.5,586.5 808.5,586.5 808.5,596.5 811.5,596.5 811.5,587.5 814.5,587.5 814.5,590.5 817.5,590.5 817.5,608.5 820.5,608.5 820.5,589.5 823.5,589.5 823.5,607.5 826.5,607.5 826.5,588.5 829.5,588.5 829.5,598.5 832.5,598.5 832.5,644.5 835.5,644.5 835.5,608.5 839.5,608.5 839.5,603.5 842.5,603.5 842.5,610.5 845.5,610.5 845.5,608.5 848.5,608.5 848.5,601.5 851.5,601.5 851.5,595.5 854.5,595.5 854.5,591.5 857.5,591.5 857.5,602.5 860.5,602.5 860.5,599.5 863.5,599.5 863.5,607.5 866.5,607.5 866.5,574.5 869.5,574.5 869.5,582.5 872.5,582.5 872.5,607.5 875.5,607.5 875.5,644.5 878.5,644.5 878.5,603.5 881.5,603.5 881.5,597.5 884.5,597.5 884.5,608.5 888.5,608.5 888.5,603.5 891.5,603.5 891.5,596.5 894.5,596.5 894.5,569.5 897.5,569.5 897.5,609.5 900.5,609.5 900.5,594.5 903.5,594.5 903.5,596.5 906.5,596.5 906.5,595.5 909.5,595.5 909.5,601.5 912.5,601.5 912.5,613.5 915.5,613.5 915.5,596.5 918.5,596.5 918.5,644.5 921.5,644.5 921.5,616.5 924.5,616.5 924.5,598.5 927.5,598.5 927.5,609.5 930.5,609.5 930.5,599.5 934.5,599.5 934.5,594.5 937.5,594.5 937.5,604.5 940.5,604.5 940.5,600.5 943.5,600.5 943.5,593.5 946.5,593.5 946.5,578.5 949.5,578.5 949.5,602.5 952.5,602.5 952.5,597.5 955.5,597.5 955.5,604.5 958.5,604.5 958.5,579.5 960.5,579.5" fill="none" stroke="#00ff00" stroke-width="1.4" stroke-linejoin="miter" shape-rendering="crispEdges"/>
<rect x="839.6" y="378.5" width="113.4" height="15" fill="#000"/>
<text x="952.5" y="390" font-size="10.67" text-anchor="end" fill="#00ecf4" >EVM Peak Symbol: 119</text>
<rect x="534" y="374" width="1" height="271" fill="#b8b8b8" />
<rect x="534" y="644" width="427" height="1" fill="#b8b8b8" />
<text transform="translate(531.5,376) scale(0.82,1)" font-size="9" text-anchor="end" fill="#e4e4e4" >7.5</text>
<text transform="translate(531.5,394) scale(0.82,1)" font-size="9" text-anchor="end" fill="#e4e4e4" >7.0</text>
<text transform="translate(531.5,412) scale(0.82,1)" font-size="9" text-anchor="end" fill="#e4e4e4" >6.5</text>
<text transform="translate(531.5,430) scale(0.82,1)" font-size="9" text-anchor="end" fill="#e4e4e4" >6.0</text>
<text transform="translate(531.5,448) scale(0.82,1)" font-size="9" text-anchor="end" fill="#e4e4e4" >5.5</text>
<text transform="translate(531.5,466) scale(0.82,1)" font-size="9" text-anchor="end" fill="#e4e4e4" >5.0</text>
<text transform="translate(531.5,484) scale(0.82,1)" font-size="9" text-anchor="end" fill="#e4e4e4" >4.5</text>
<text transform="translate(531.5,502) scale(0.82,1)" font-size="9" text-anchor="end" fill="#e4e4e4" >4.0</text>
<text transform="translate(531.5,520) scale(0.82,1)" font-size="9" text-anchor="end" fill="#e4e4e4" >3.5</text>
<text transform="translate(531.5,538) scale(0.82,1)" font-size="9" text-anchor="end" fill="#e4e4e4" >3.0</text>
<text transform="translate(531.5,556) scale(0.82,1)" font-size="9" text-anchor="end" fill="#e4e4e4" >2.5</text>
<text transform="translate(531.5,574) scale(0.82,1)" font-size="9" text-anchor="end" fill="#e4e4e4" >2.0</text>
<text transform="translate(531.5,592) scale(0.82,1)" font-size="9" text-anchor="end" fill="#e4e4e4" >1.5</text>
<text transform="translate(531.5,610) scale(0.82,1)" font-size="9" text-anchor="end" fill="#e4e4e4" >1.0</text>
<text transform="translate(531.5,628) scale(0.82,1)" font-size="9" text-anchor="end" fill="#e4e4e4" >0.5</text>
<text transform="translate(531.5,646) scale(0.82,1)" font-size="9" text-anchor="end" fill="#e4e4e4" >0.0</text>
<text transform="translate(534,655) scale(0.82,1)" font-size="9" text-anchor="middle" fill="#e4e4e4" >1</text>
<text transform="translate(577,655) scale(0.82,1)" font-size="9" text-anchor="middle" fill="#e4e4e4" >15</text>
<text transform="translate(619,655) scale(0.82,1)" font-size="9" text-anchor="middle" fill="#e4e4e4" >29</text>
<text transform="translate(662,655) scale(0.82,1)" font-size="9" text-anchor="middle" fill="#e4e4e4" >43</text>
<text transform="translate(704,655) scale(0.82,1)" font-size="9" text-anchor="middle" fill="#e4e4e4" >57</text>
<text transform="translate(747,655) scale(0.82,1)" font-size="9" text-anchor="middle" fill="#e4e4e4" >71</text>
<text transform="translate(790,655) scale(0.82,1)" font-size="9" text-anchor="middle" fill="#e4e4e4" >84</text>
<text transform="translate(832,655) scale(0.82,1)" font-size="9" text-anchor="middle" fill="#e4e4e4" >98</text>
<text transform="translate(875,655) scale(0.82,1)" font-size="9" text-anchor="middle" fill="#e4e4e4" >112</text>
<text transform="translate(917,655) scale(0.82,1)" font-size="9" text-anchor="middle" fill="#e4e4e4" >126</text>
<text transform="translate(960,655) scale(0.82,1)" font-size="9" text-anchor="middle" fill="#e4e4e4" >140</text>
<text x="0" y="0" font-size="12.2" text-anchor="middle" fill="#e4e4e4" transform="translate(505.0,509) rotate(-90)">EVM (%)</text>
<text x="747" y="668" font-size="10.67" text-anchor="middle" fill="#e4e4e4" >Subcarrier</text>
<text x="967.5" y="670.8" font-size="7.8" text-anchor="end" fill="#ff00ff" stroke="#ff00ff" stroke-width="0.12">FFT: 0.005 VDT: 0.008</text>
</svg>
</body></html>
